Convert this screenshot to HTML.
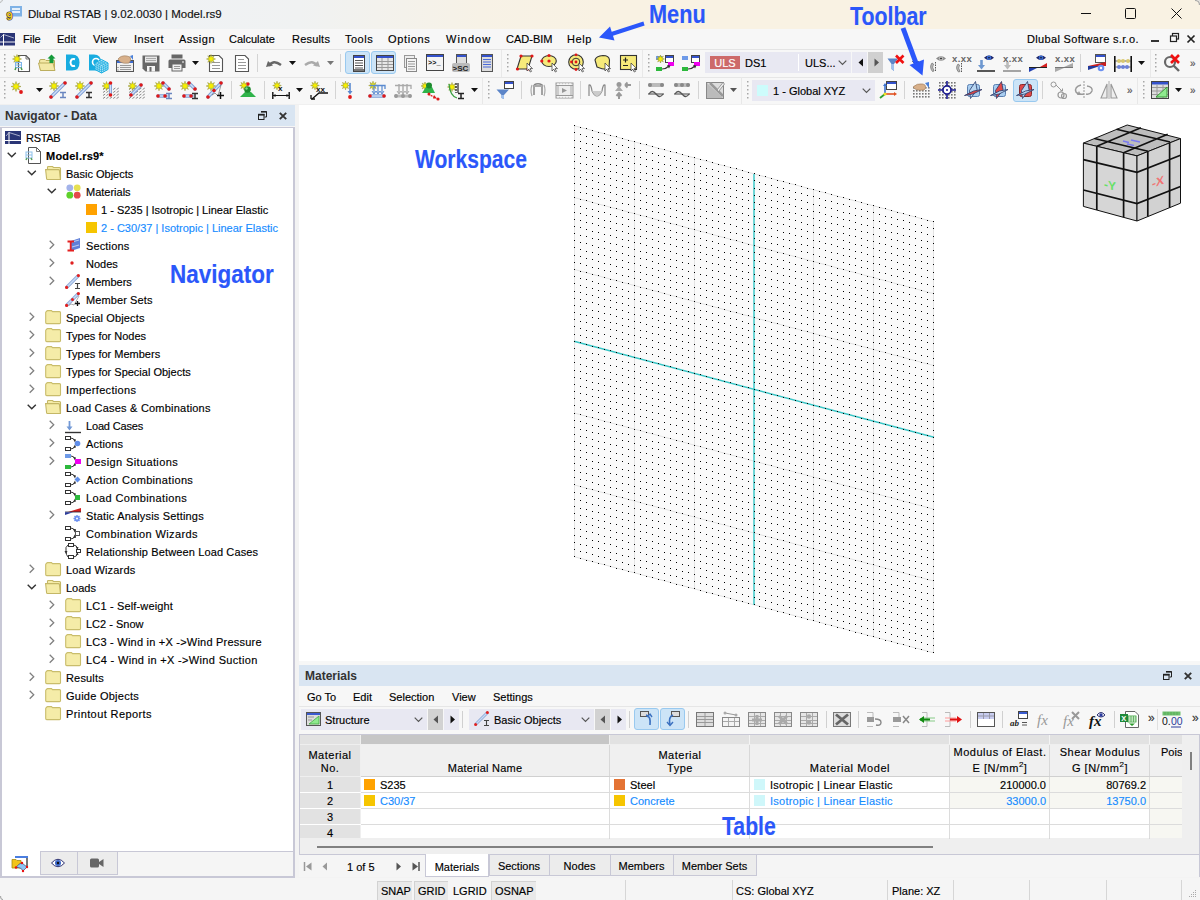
<!DOCTYPE html>
<html><head><meta charset="utf-8"><title>Dlubal RSTAB</title>
<style>
*{box-sizing:border-box}
html,body{margin:0;padding:0}
body{width:1200px;height:900px;position:relative;overflow:hidden;background:#f3f3f3;font-family:"Liberation Sans",sans-serif;font-size:11px;color:#000}
.a{position:absolute}
.t{position:absolute;white-space:pre;line-height:13px;font-size:11px;-webkit-text-stroke:0.15px currentColor}
svg{position:absolute;overflow:visible}
</style></head><body>

<!-- title bar -->
<div class="a" style="left:0;top:0;width:1200px;height:29px;background:linear-gradient(90deg,#eef2f7 0px,#f0f2f2 300px,#f7f2e6 480px,#f9f2e3 600px,#f9f2e3 1200px)"></div>
<svg style="left:6px;top:5px" width="18" height="17"><rect x="4" y="1" width="12" height="10.5" fill="#7fb2e6"/><rect x="6" y="3" width="8" height="2" fill="#e4effa"/><rect x="6" y="6" width="8" height="2" fill="#e4effa"/><text x="0.5" y="14.5" font-family="Liberation Sans" font-weight="bold" font-size="11" fill="#f2c81c" stroke="#3a3a4a" stroke-width="1.2" paint-order="stroke">9</text></svg>
<div class="t" style="left:28px;top:7px;font-size:11.5px;line-height:15px;color:#111">Dlubal RSTAB | 9.02.0030 | Model.rs9</div>
<svg style="left:1081px;top:13px" width="10" height="1"><rect x="0" y="0" width="10" height="1" fill="#111"/></svg>
<svg style="left:1125px;top:8px" width="11" height="11"><rect x="0.5" y="0.5" width="10" height="10" rx="1" fill="none" stroke="#111" stroke-width="1"/></svg>
<svg style="left:1171px;top:8px" width="11" height="11"><path d="M0.5 0.5 L10.5 10.5 M10.5 0.5 L0.5 10.5" stroke="#111" stroke-width="1"/></svg>
<!-- menu bar -->
<div class="a" style="left:0;top:29px;width:1200px;height:20px;background:#f7f7f7"></div>
<div class="a" style="left:0;top:49px;width:1200px;height:1px;background:#e4e4e4"></div>
<svg style="left:0;top:33px" width="15" height="13"><rect x="0" y="0" width="15" height="8.5" fill="#2a3576"/><rect x="0" y="9.5" width="15" height="3" fill="#2a3576"/><path d="M3.5 1 V13" stroke="#fff" stroke-width="1"/><path d="M0.5 4.5 L3.5 1.5 L14 5" stroke="#c8cce0" stroke-width="0.8" fill="none"/></svg>
<div class="t" style="left:23px;top:33px">File</div>
<div class="t" style="left:57px;top:33px">Edit</div>
<div class="t" style="left:93px;top:33px">View</div>
<div class="t" style="left:134px;top:33px;letter-spacing:0.4px">Insert</div>
<div class="t" style="left:179px;top:33px;letter-spacing:0.5px">Assign</div>
<div class="t" style="left:229px;top:33px">Calculate</div>
<div class="t" style="left:292px;top:33px;letter-spacing:0.2px">Results</div>
<div class="t" style="left:345px;top:33px;letter-spacing:0.5px">Tools</div>
<div class="t" style="left:388px;top:33px;letter-spacing:0.65px">Options</div>
<div class="t" style="left:446px;top:33px;letter-spacing:1px">Window</div>
<div class="t" style="left:506px;top:33px">CAD-BIM</div>
<div class="t" style="left:567px;top:33px;letter-spacing:0.6px">Help</div>
<div class="t" style="left:1027px;top:33px;letter-spacing:0.33px">Dlubal Software s.r.o.</div>
<svg style="left:1151px;top:40px" width="8" height="2"><rect x="0" y="0" width="8" height="2" fill="#333"/></svg>
<svg style="left:1170px;top:33px" width="9" height="9"><rect x="2.5" y="0.5" width="6" height="5.5" fill="none" stroke="#222" stroke-width="1.2"/><rect x="0.5" y="3" width="6" height="5.5" fill="#f7f7f7" stroke="#222" stroke-width="1.2"/></svg>
<svg style="left:1187px;top:35px" width="8" height="8"><path d="M0.5 0.5 L7.5 7.5 M7.5 0.5 L0.5 7.5" stroke="#222" stroke-width="1.7"/></svg>

<div class="a" style="left:0;top:50px;width:1200px;height:27px;background:#f7f7f7"></div>
<div class="a" style="left:0;top:77px;width:1200px;height:1px;background:#e6e6e6"></div>
<div class="a" style="left:0;top:78px;width:1200px;height:27px;background:#f7f7f7"></div>
<div class="a" style="left:0;top:104px;width:1200px;height:1px;background:#f0f0f0"></div>
<svg style="left:3px;top:53px" width="3" height="20"><g fill="#a8a8a8"><rect x="1" y="1" width="1.5" height="1.5"/><rect x="1" y="5" width="1.5" height="1.5"/><rect x="1" y="9" width="1.5" height="1.5"/><rect x="1" y="13" width="1.5" height="1.5"/><rect x="1" y="17" width="1.5" height="1.5"/></g></svg>
<svg style="left:12px;top:54px" width="19" height="19"><path d="M6.5 1.5 H14 L17.5 5 V17.5 H6.5 Z" fill="#fff" stroke="#555" stroke-width="1.1"/><path d="M14 1.5 V5 H17.5" fill="none" stroke="#555" stroke-width="0.8"/><path d="M5.00,0.50 L5.77,3.13 L8.18,1.82 L6.87,4.23 L9.50,5.00 L6.87,5.77 L8.18,8.18 L5.77,6.87 L5.00,9.50 L4.23,6.87 L1.82,8.18 L3.13,5.77 L0.50,5.00 L3.13,4.23 L1.82,1.82 L4.23,3.13Z" fill="#f6f000" stroke="#8a8a30" stroke-width="0.5"/><rect x="3.5" y="8.5" width="6" height="5" fill="none" stroke="#7db4ea" stroke-width="1"/><path d="M3.5 11 H9.5" stroke="#7db4ea"/><path d="M4 13.5 L3 16 M9 13.5 L10 16" stroke="#4a9a4a" stroke-width="1.5"/></svg>
<svg style="left:38px;top:54px" width="19" height="19"><path d="M1.5 7 Q1.5 5.5 3 5.5 H7 L8 6.5 H16.5 V16.5 H2.5 Z" fill="#f3e8a6" stroke="#bcae5e"/><path d="M0.5 9 H15 L17 16.5 H2.5 Z" fill="#f3e8a6" stroke="#bcae5e"/><path d="M13.5 0.5 L17.5 4.5 H15.5 V9 H11.5 V4.5 H9.5 Z" fill="#149a3a"/></svg>
<svg style="left:66px;top:54px" width="15" height="18"><path d="M0 0.5 H6 Q13.5 0.5 13.5 8.5 Q13.5 16.5 6 16.5 H0 Z" fill="#18ace0"/><path d="M9 5.2 Q5 4 4.5 8.5 Q5 13 9 11.8" fill="none" stroke="#fff" stroke-width="2"/></svg>
<svg style="left:89px;top:54px" width="20" height="20"><path d="M0 0.5 H5 Q12 0.5 12 8 L12 16.5 H0 Z" fill="#18ace0"/><circle cx="7" cy="8" r="3.5" fill="none" stroke="#fff" stroke-width="1.6"/><path d="M6 9 L12.5 5.5 L19 9 V15.5 L12.5 19 L6 15.5 Z" fill="#aee4f8" stroke="#18ace0" stroke-width="1"/><path d="M6 9 L12.5 12.5 L19 9 M12.5 12.5 V19 M8.2 10.2 V16.7 M10.3 11.3 V17.8 M14.7 11.3 V17.8 M16.8 10.2 V16.7 M6 11.2 L12.5 14.7 L19 11.2 M6 13.4 L12.5 16.9 L19 13.4 M8.2 7.8 L14.7 11.3 M10.3 6.7 L16.8 10.2 M14.7 6.7 L8.2 10.2 M16.8 7.8 L10.3 11.3" stroke="#18ace0" stroke-width="0.7" fill="none"/></svg>
<svg style="left:116px;top:54px" width="19" height="19"><rect x="0.5" y="6.5" width="17" height="11" fill="#f0f0f0" stroke="#555"/><rect x="1" y="7" width="16" height="2" fill="#3a6ad0"/><path d="M4 11.5 H15 M4 13.5 H15 M4 15.5 H15" stroke="#999"/><path d="M2 13 V14 M2 15.5 V16.5" stroke="#666"/><path d="M2 5 Q5 1 11 2 L14 3 Q16 6 13 9 Q8 10 4 8 Z" fill="#d8b08a" stroke="#9a7a5a" stroke-width="0.6"/><path d="M14 2 L17 1 V6" fill="#4a80d8"/></svg>
<svg style="left:142px;top:54px" width="19" height="19"><path d="M0.5 1.5 H17.5 V17.5 H3.5 L0.5 14.5 Z" fill="#676767"/><rect x="3" y="2.5" width="12" height="6" fill="#e8e8e8"/><path d="M4 4.5 H14 M4 6.5 H14" stroke="#aaa"/><rect x="5" y="12" width="8" height="5.5" fill="#f4f4f4"/><rect x="7.5" y="13" width="2" height="4.5" fill="#676767"/></svg>
<svg style="left:168px;top:54px" width="19" height="19"><rect x="3.5" y="0.5" width="11" height="4" fill="#676767"/><path d="M0.5 7 Q0.5 5.5 2 5.5 H16 Q17.5 5.5 17.5 7 V14 H14.5 V17.5 H3.5 V14 H0.5 Z" fill="#676767"/><rect x="4.5" y="10.5" width="9" height="6" fill="#f0f0f0"/><path d="M6 12.5 H12 M6 14.5 H12" stroke="#999"/><rect x="14" y="7.5" width="2" height="1" fill="#fff"/></svg>
<svg style="left:192px;top:61px" width="8" height="5"><path d="M0 0 H7 L3.5 4 Z" fill="#111"/></svg>
<svg style="left:206px;top:54px" width="19" height="19"><path d="M3.5 1.5 H13 L16.5 5 V17.5 H3.5 Z" fill="#fff" stroke="#555" stroke-width="1.1"/><path d="M6 8.5 H14 M6 11.5 H14 M6 14.5 H14" stroke="#999" stroke-width="1.2"/><path d="M5.00,0.50 L5.77,3.13 L8.18,1.82 L6.87,4.23 L9.50,5.00 L6.87,5.77 L8.18,8.18 L5.77,6.87 L5.00,9.50 L4.23,6.87 L1.82,8.18 L3.13,5.77 L0.50,5.00 L3.13,4.23 L1.82,1.82 L4.23,3.13Z" fill="#f6f000" stroke="#8a8a30" stroke-width="0.5"/></svg>
<svg style="left:234px;top:54px" width="16" height="19"><path d="M1.5 1.5 H11 L14.5 5 V17.5 H1.5 Z" fill="#fff" stroke="#555" stroke-width="1.1"/><path d="M4 5.5 H10 M4 8.5 H12 M4 11.5 H12 M4 14.5 H12" stroke="#999" stroke-width="1.2"/></svg>
<div class="a" style="left:257px;top:54px;width:1px;height:18px;background:#d4d4d4"></div>
<svg style="left:265px;top:54px" width="18" height="18"><path d="M4 12 Q8 5 16 11" fill="none" stroke="#676767" stroke-width="2.4"/><path d="M1 13 L3 7 L8 11.5 Z" fill="#676767"/></svg>
<svg style="left:289px;top:61px" width="8" height="5"><path d="M0 0 H7 L3.5 4 Z" fill="#111"/></svg>
<svg style="left:303px;top:54px" width="18" height="18"><path d="M14 12 Q10 5 2 11" fill="none" stroke="#aaa" stroke-width="2.4"/><path d="M17 13 L15 7 L10 11.5 Z" fill="#aaa"/></svg>
<svg style="left:327px;top:61px" width="8" height="5"><path d="M0 0 H7 L3.5 4 Z" fill="#777"/></svg>
<div class="a" style="left:340px;top:54px;width:1px;height:18px;background:#d4d4d4"></div>
<div class="a" style="left:345px;top:51px;width:25px;height:23px;background:#cce4f7;border:1px solid #99c9ef;border-radius:3px"></div>
<div class="a" style="left:371px;top:51px;width:25px;height:23px;background:#cce4f7;border:1px solid #99c9ef;border-radius:3px"></div>
<svg style="left:350px;top:54px" width="19" height="19"><rect x="3.5" y="1.5" width="11" height="16" fill="#fff" stroke="#444"/><rect x="4" y="2" width="10" height="2" fill="#3452cc"/><path d="M5 6.5 H13 M5 9 H13 M5 11.5 H13 M5 14 H13" stroke="#555" stroke-width="1.2"/><rect x="4" y="15" width="10" height="2" fill="#777"/></svg>
<svg style="left:376px;top:54px" width="19" height="19"><rect x="0.5" y="1.5" width="17" height="15" fill="#e6e6e6" stroke="#444"/><rect x="1" y="2" width="16" height="2" fill="#3452cc"/><path d="M1 7.5 H17 M1 10.5 H17 M1 13.5 H17 M6 4 V16 M12 4 V16" stroke="#999"/></svg>
<svg style="left:403px;top:54px" width="15" height="19"><rect x="1.5" y="1.5" width="10" height="12" fill="#eee" stroke="#999"/><rect x="3.5" y="4.5" width="10" height="13" fill="#f4f4f4" stroke="#888"/><path d="M5 7.5 H12 M5 10 H12 M5 12.5 H12 M5 15 H12" stroke="#999" stroke-width="1.1"/></svg>
<svg style="left:426px;top:54px" width="19" height="19"><rect x="0.5" y="0.5" width="17" height="16" fill="#f4f4f4" stroke="#444"/><rect x="1" y="1" width="16" height="2" fill="#3452cc"/><text x="2" y="11" font-family="Liberation Mono" font-weight="bold" font-size="7" fill="#111">&gt;&gt;_</text></svg>
<svg style="left:452px;top:54px" width="19" height="19"><rect x="4.5" y="0.5" width="10" height="9" fill="#ddd" stroke="#555"/><rect x="5" y="1" width="9" height="2" fill="#3452cc"/><rect x="0" y="9" width="18" height="9" rx="2" fill="#bbb"/><text x="0.5" y="16.5" font-family="Liberation Sans" font-weight="bold" font-size="8" fill="#222">&gt;SC</text></svg>
<svg style="left:481px;top:54px" width="13" height="19"><rect x="0.5" y="0.5" width="11" height="17" fill="#ddd" stroke="#555"/><rect x="1" y="1" width="10" height="2" fill="#3452cc"/><path d="M2 5.5 H10 M2 8 H10 M2 10.5 H10 M2 13 H10" stroke="#4a6ad8" stroke-width="1.2"/></svg>
<div class="a" style="left:501px;top:50px;width:1px;height:27px;background:#e8e8e8"></div>
<svg style="left:506px;top:53px" width="3" height="20"><g fill="#a8a8a8"><rect x="1" y="1" width="1.5" height="1.5"/><rect x="1" y="5" width="1.5" height="1.5"/><rect x="1" y="9" width="1.5" height="1.5"/><rect x="1" y="13" width="1.5" height="1.5"/><rect x="1" y="17" width="1.5" height="1.5"/></g></svg>
<svg style="left:516px;top:54px" width="19" height="19"><path d="M5 2 H16 L12 15 H1 Z" fill="#f6ea7a" stroke="#333" stroke-width="1.1"/><circle cx="5" cy="2" r="1.6" fill="#e01818"/><circle cx="16" cy="2" r="1.6" fill="#e01818"/><circle cx="12" cy="15" r="1.6" fill="#e01818"/><circle cx="1.5" cy="15" r="1.6" fill="#e01818"/><path d="M11 9 V17 L12.8 15.2 L14.3 18 L15.5 17.4 L14 14.6 H16.5 Z" fill="#fff" stroke="#333" stroke-width="0.7"/></svg>
<svg style="left:541px;top:54px" width="19" height="19"><ellipse cx="8" cy="7" rx="7.3" ry="5.5" fill="#f6ea7a" stroke="#333" stroke-width="1.1"/><circle cx="8" cy="1.5" r="1.6" fill="#e01818"/><circle cx="0.8" cy="7" r="1.6" fill="#e01818"/><circle cx="8" cy="7" r="1.6" fill="#e01818"/><path d="M11 9 V17 L12.8 15.2 L14.3 18 L15.5 17.4 L14 14.6 H16.5 Z" fill="#fff" stroke="#333" stroke-width="0.7"/></svg>
<svg style="left:568px;top:54px" width="19" height="19"><circle cx="8" cy="8" r="7.3" fill="#f6ea7a" stroke="#333" stroke-width="1.1"/><circle cx="8" cy="8" r="3.8" fill="#f6ea7a" stroke="#333" stroke-width="1"/><circle cx="8" cy="8" r="1.4" fill="#e01818"/><circle cx="3.5" cy="8" r="1.4" fill="#e01818"/><circle cx="8" cy="15.5" r="1.4" fill="#e01818"/><circle cx="8" cy="0.8" r="1.4" fill="#e01818"/><path d="M11 9 V17 L12.8 15.2 L14.3 18 L15.5 17.4 L14 14.6 H16.5 Z" fill="#fff" stroke="#333" stroke-width="0.7"/></svg>
<svg style="left:594px;top:54px" width="19" height="19"><path d="M1 6 Q2 2 9 1.5 Q15 1.5 15.5 6 L15 15 Q10 16 3 13 Z" fill="#f6ea7a" stroke="#333" stroke-width="1.1"/><path d="M11 9 V17 L12.8 15.2 L14.3 18 L15.5 17.4 L14 14.6 H16.5 Z" fill="#fff" stroke="#333" stroke-width="0.7"/></svg>
<svg style="left:620px;top:54px" width="19" height="19"><rect x="0.5" y="1.5" width="16" height="14" fill="#f6ea7a" stroke="#333" stroke-width="1.1"/><path d="M3 6 H8 M5.5 3.5 V8.5 M3 11.5 H8" stroke="#222" stroke-width="1.2"/><path d="M11 9 V17 L12.8 15.2 L14.3 18 L15.5 17.4 L14 14.6 H16.5 Z" fill="#fff" stroke="#333" stroke-width="0.7"/></svg>
<div class="a" style="left:642px;top:50px;width:1px;height:27px;background:#e8e8e8"></div>
<svg style="left:647px;top:53px" width="3" height="20"><g fill="#a8a8a8"><rect x="1" y="1" width="1.5" height="1.5"/><rect x="1" y="5" width="1.5" height="1.5"/><rect x="1" y="9" width="1.5" height="1.5"/><rect x="1" y="13" width="1.5" height="1.5"/><rect x="1" y="17" width="1.5" height="1.5"/></g></svg>
<svg style="left:656px;top:54px" width="19" height="19"><rect x="0" y="2" width="6" height="4" fill="#6e9ae8"/><rect x="0" y="13" width="6" height="4" fill="#2cb83c"/><rect x="9.5" y="1.5" width="8" height="7" fill="#fff" stroke="#444"/><rect x="10" y="2" width="7" height="2" fill="#3452cc"/><rect x="12" y="8" width="6" height="4" fill="#f000f0"/><path d="M6 15 Q10 15 13 12" stroke="#333" stroke-width="1.2" fill="none"/><path d="M11 11 L14.5 11.5 L13 14.5 Z" fill="#333"/><path d="M4.50,1.00 L5.19,3.34 L7.33,2.17 L6.16,4.31 L8.50,5.00 L6.16,5.69 L7.33,7.83 L5.19,6.66 L4.50,9.00 L3.81,6.66 L1.67,7.83 L2.84,5.69 L0.50,5.00 L2.84,4.31 L1.67,2.17 L3.81,3.34Z" fill="#f6f000" stroke="#8a8a30" stroke-width="0.5"/></svg>
<svg style="left:682px;top:54px" width="19" height="19"><rect x="0" y="2" width="6" height="4" fill="#6e9ae8"/><rect x="0" y="13" width="6" height="4" fill="#2cb83c"/><rect x="9.5" y="1.5" width="8" height="7" fill="#fff" stroke="#444"/><rect x="10" y="2" width="7" height="2" fill="#3452cc"/><rect x="12" y="8" width="6" height="4" fill="#f000f0"/><path d="M6 15 Q10 15 13 12" stroke="#333" stroke-width="1.2" fill="none"/><path d="M11 11 L14.5 11.5 L13 14.5 Z" fill="#333"/></svg>
<div class="a" style="left:705px;top:52px;width:146px;height:21px;background:#e8e8f2"></div>
<div class="a" style="left:710px;top:56px;width:30px;height:13px;background:#cd6a6a"></div>
<div class="t" style="left:710px;top:57px;width:30px;text-align:center;color:#fff">ULS</div>
<div class="t" style="left:745px;top:57px">DS1</div>
<div class="a" style="left:798px;top:54px;width:1px;height:17px;background:#fff"></div>
<div class="t" style="left:805px;top:57px">ULS...</div>
<svg style="left:838px;top:60px" width="10" height="6"><path d="M0.7 0.7 L4.5 4.5 L8.3 0.7" fill="none" stroke="#555" stroke-width="1.2"/></svg>
<div class="a" style="left:852px;top:52px;width:15px;height:21px;background:#e8e8f2"></div>
<svg style="left:858px;top:58px" width="6" height="9"><path d="M5 0.5 V8.5 L0.5 4.5 Z" fill="#111"/></svg>
<div class="a" style="left:868px;top:52px;width:15px;height:21px;background:#d0d0d0"></div>
<svg style="left:874px;top:58px" width="6" height="9"><path d="M0.5 0.5 V8.5 L5 4.5 Z" fill="#555"/></svg>
<svg style="left:887px;top:54px" width="19" height="19"><path d="M0.5 4.5 H11 L7 10 V17 L4.5 15 V10 Z" fill="#5c85c8"/><path d="M4.5 10 H7 V17 L4.5 15 Z" fill="#9ec0ee"/><path d="M9 1.5 L16.5 9 M16.5 1.5 L9 9" stroke="#f01010" stroke-width="2.6"/></svg>
<svg style="left:912px;top:61px" width="8" height="5"><path d="M0 0 H7 L3.5 4 Z" fill="#111"/></svg>
<svg style="left:929px;top:54px" width="19" height="19"><path d="M7 4.5 Q12 0.0 17 4.5 Q12 9.0 7 4.5 Z" fill="#8a8a8a"/><ellipse cx="12" cy="4.5" rx="2.3" ry="2.3" fill="#b5b5b5"/><circle cx="12" cy="4.5" r="0.8" fill="#111"/><path d="M3 9 Q0 13 3.5 17.5 L5 17 Q2.5 13 4.5 10 Z" fill="#bbb" stroke="#777" stroke-width="0.8"/><path d="M6.5 8 V18" stroke="#555" stroke-width="1" stroke-dasharray="1.5 1"/></svg>
<svg style="left:952px;top:54px" width="19" height="19"><text x="0" y="8" font-family="Liberation Sans" font-weight="bold" font-size="9.5" letter-spacing="0.4" fill="#666">x.xx</text><path d="M6 10 Q3 14 6.5 18 L8 17.5 Q5.5 14 7.5 11 Z" fill="#bbb" stroke="#777" stroke-width="0.8"/><path d="M9.5 9 V18" stroke="#555" stroke-width="1" stroke-dasharray="1.5 1"/></svg>
<svg style="left:977px;top:54px" width="19" height="19"><path d="M7 3.8 Q12 -0.7000000000000002 17 3.8 Q12 8.3 7 3.8 Z" fill="#1c2468"/><ellipse cx="12" cy="3.8" rx="2.3" ry="2.3" fill="#3a6ad0"/><circle cx="12" cy="3.8" r="0.8" fill="#111"/><path d="M4.5 6 V13" stroke="#6e98d0" stroke-width="2.6"/><path d="M1 11 L4.5 15.5 L8 11 Z" fill="#6e98d0"/><path d="M0 17 H18" stroke="#222" stroke-width="1.5"/></svg>
<svg style="left:1003px;top:54px" width="19" height="19"><text x="0" y="8" font-family="Liberation Sans" font-weight="bold" font-size="9.5" letter-spacing="0.4" fill="#666">x.xx</text><path d="M4.5 8 V13" stroke="#bbb" stroke-width="2.6"/><path d="M1 11 L4.5 15.5 L8 11 Z" fill="#bbb"/><path d="M0 17 H18" stroke="#888" stroke-width="1.5"/></svg>
<svg style="left:1029px;top:54px" width="19" height="19"><path d="M7 3.8 Q12 -0.7000000000000002 17 3.8 Q12 8.3 7 3.8 Z" fill="#1c2468"/><ellipse cx="12" cy="3.8" rx="2.3" ry="2.3" fill="#3a6ad0"/><circle cx="12" cy="3.8" r="0.8" fill="#111"/><path d="M0 13.5 H18" stroke="#222" stroke-width="1"/><path d="M11 13 L18 9 V13 Z" fill="#d42020"/><path d="M0 14 H8 L0 18 Z" fill="#2240b0"/></svg>
<svg style="left:1055px;top:54px" width="19" height="19"><text x="0" y="8" font-family="Liberation Sans" font-weight="bold" font-size="9.5" letter-spacing="0.4" fill="#666">x.xx</text><path d="M0 13.5 H18" stroke="#777" stroke-width="1"/><path d="M9 13 L18 9 V13 Z" fill="#aaa"/><path d="M0 14 H9 L0 18 Z" fill="#aaa"/></svg>
<div class="a" style="left:1080px;top:54px;width:1px;height:18px;background:#d4d4d4"></div>
<svg style="left:1088px;top:54px" width="19" height="19"><rect x="7.5" y="0.5" width="10" height="8" fill="#fff" stroke="#555"/><rect x="8" y="1" width="9" height="2" fill="#3452cc"/><path d="M0 12 H18 V8 Z" fill="#c82020"/><path d="M0 12 H12 L0 16 Z" fill="#223a9a"/><circle cx="13" cy="14" r="3.3" fill="#6b90f0"/><circle cx="13" cy="14" r="1.2" fill="#fff"/></svg>
<svg style="left:1114px;top:54px" width="19" height="19"><path d="M0.8 2 V18 M17.2 2 V18" stroke="#111" stroke-width="1.6"/><path d="M1 7 H17 M1 13 H17" stroke="#444" stroke-width="0.8"/><circle cx="5" cy="7" r="2" fill="#d8c870"/><circle cx="9" cy="7" r="2" fill="#d8c870"/><circle cx="14" cy="7" r="2" fill="#d8c870"/><circle cx="5" cy="13" r="2" fill="#6a80d8"/><circle cx="9" cy="13" r="2" fill="#6a80d8"/><circle cx="13" cy="13" r="2" fill="#6a80d8"/></svg>
<svg style="left:1138px;top:61px" width="8" height="5"><path d="M0 0 H7 L3.5 4 Z" fill="#111"/></svg>
<div class="a" style="left:1150px;top:50px;width:1px;height:27px;background:#e8e8e8"></div>
<svg style="left:1154px;top:53px" width="3" height="20"><g fill="#a8a8a8"><rect x="1" y="1" width="1.5" height="1.5"/><rect x="1" y="5" width="1.5" height="1.5"/><rect x="1" y="9" width="1.5" height="1.5"/><rect x="1" y="13" width="1.5" height="1.5"/><rect x="1" y="17" width="1.5" height="1.5"/></g></svg>
<svg style="left:1163px;top:54px" width="19" height="19"><circle cx="7" cy="8" r="5" fill="none" stroke="#676767" stroke-width="2.2"/><path d="M10.5 11.5 L16 17" stroke="#676767" stroke-width="2.4"/><path d="M8 1 L16 9 M16 1 L8 9" stroke="#f01010" stroke-width="2.6"/></svg>
<div class="t" style="left:1190px;top:57px;font-size:10px;color:#555">&#187;</div>
<svg style="left:3px;top:80px" width="3" height="20"><g fill="#a8a8a8"><rect x="1" y="1" width="1.5" height="1.5"/><rect x="1" y="5" width="1.5" height="1.5"/><rect x="1" y="9" width="1.5" height="1.5"/><rect x="1" y="13" width="1.5" height="1.5"/><rect x="1" y="17" width="1.5" height="1.5"/></g></svg>
<svg style="left:10px;top:81px" width="15" height="15"><path d="M6.00,0.50 L6.86,3.42 L9.54,1.96 L8.08,4.64 L11.00,5.50 L8.08,6.36 L9.54,9.04 L6.86,7.58 L6.00,10.50 L5.14,7.58 L2.46,9.04 L3.92,6.36 L1.00,5.50 L3.92,4.64 L2.46,1.96 L5.14,3.42Z" fill="#f6f000" stroke="#8a8a30" stroke-width="0.5"/><circle cx="11" cy="11" r="1.9" fill="#e01818"/></svg>
<svg style="left:36px;top:88px" width="8" height="5"><path d="M0 0 H7 L3.5 4 Z" fill="#111"/></svg>
<svg style="left:49px;top:81px" width="19" height="19"><path d="M5.00,0.20 L5.83,3.00 L8.39,1.61 L7.00,4.17 L9.80,5.00 L7.00,5.83 L8.39,8.39 L5.83,7.00 L5.00,9.80 L4.17,7.00 L1.61,8.39 L3.00,5.83 L0.20,5.00 L3.00,4.17 L1.61,1.61 L4.17,3.00Z" fill="#f6f000" stroke="#8a8a30" stroke-width="0.5"/><path d="M2 16 L16 2" stroke="#7f9fd6" stroke-width="3.4" stroke-linecap="round"/><path d="M2 16 L16 2" stroke="#cfe0f7" stroke-width="1.4"/><circle cx="2" cy="16" r="1.8" fill="#e01818"/><circle cx="16" cy="2" r="1.8" fill="#e01818"/><path d="M11 11.5 H17 M14 11 V17 M11 16.5 H17" stroke="#6a86c0" stroke-width="1.5"/></svg>
<svg style="left:75px;top:81px" width="19" height="19"><path d="M5.00,0.20 L5.83,3.00 L8.39,1.61 L7.00,4.17 L9.80,5.00 L7.00,5.83 L8.39,8.39 L5.83,7.00 L5.00,9.80 L4.17,7.00 L1.61,8.39 L3.00,5.83 L0.20,5.00 L3.00,4.17 L1.61,1.61 L4.17,3.00Z" fill="#f6f000" stroke="#8a8a30" stroke-width="0.5"/><path d="M2 16 L16 2" stroke="#7f9fd6" stroke-width="3.4" stroke-linecap="round"/><path d="M2 16 L16 2" stroke="#cfe0f7" stroke-width="1.4"/><circle cx="2" cy="16" r="1.8" fill="#e01818"/><circle cx="16" cy="2" r="1.8" fill="#e01818"/><path d="M11 11.5 H17 M14 11 V17 M11 16.5 H17" stroke="#333" stroke-width="1.5"/></svg>
<svg style="left:102px;top:81px" width="19" height="19"><g stroke="#888" stroke-width="1"><path d="M1.0 8.5 L3.2 7"/><path d="M4.4 8.5 L6.6 7"/><path d="M7.8 8.5 L10.0 7"/><path d="M11.2 8.5 L13.4 7"/><path d="M14.6 8.5 L16.8 7"/><path d="M1.0 11.5 L3.2 10"/><path d="M4.4 11.5 L6.6 10"/><path d="M7.8 11.5 L10.0 10"/><path d="M11.2 11.5 L13.4 10"/><path d="M14.6 11.5 L16.8 10"/><path d="M1.0 14.5 L3.2 13"/><path d="M4.4 14.5 L6.6 13"/><path d="M7.8 14.5 L10.0 13"/><path d="M11.2 14.5 L13.4 13"/><path d="M14.6 14.5 L16.8 13"/><path d="M1.0 17.5 L3.2 16"/><path d="M4.4 17.5 L6.6 16"/><path d="M7.8 17.5 L10.0 16"/><path d="M11.2 17.5 L13.4 16"/><path d="M14.6 17.5 L16.8 16"/></g><path d="M4.50,0.50 L5.27,3.13 L7.68,1.82 L6.37,4.23 L9.00,5.00 L6.37,5.77 L7.68,8.18 L5.27,6.87 L4.50,9.50 L3.73,6.87 L1.32,8.18 L2.63,5.77 L0.00,5.00 L2.63,4.23 L1.32,1.82 L3.73,3.13Z" fill="#f6f000" stroke="#8a8a30" stroke-width="0.5"/><path d="M8.5 2 V14" stroke="#7f9fd6" stroke-width="3"/><path d="M8.5 2 V14" stroke="#cfe0f7" stroke-width="1.2"/><circle cx="8.5" cy="2" r="1.8" fill="#e01818"/><circle cx="8.5" cy="14" r="1.8" fill="#e01818"/></svg>
<svg style="left:128px;top:81px" width="19" height="19"><g stroke="#888" stroke-width="1"><path d="M1.0 8.5 L3.2 7"/><path d="M4.4 8.5 L6.6 7"/><path d="M7.8 8.5 L10.0 7"/><path d="M11.2 8.5 L13.4 7"/><path d="M14.6 8.5 L16.8 7"/><path d="M1.0 11.5 L3.2 10"/><path d="M4.4 11.5 L6.6 10"/><path d="M7.8 11.5 L10.0 10"/><path d="M11.2 11.5 L13.4 10"/><path d="M14.6 11.5 L16.8 10"/><path d="M1.0 14.5 L3.2 13"/><path d="M4.4 14.5 L6.6 13"/><path d="M7.8 14.5 L10.0 13"/><path d="M11.2 14.5 L13.4 13"/><path d="M14.6 14.5 L16.8 13"/><path d="M1.0 17.5 L3.2 16"/><path d="M4.4 17.5 L6.6 16"/><path d="M7.8 17.5 L10.0 16"/><path d="M11.2 17.5 L13.4 16"/><path d="M14.6 17.5 L16.8 16"/></g><path d="M4.50,0.50 L5.27,3.13 L7.68,1.82 L6.37,4.23 L9.00,5.00 L6.37,5.77 L7.68,8.18 L5.27,6.87 L4.50,9.50 L3.73,6.87 L1.32,8.18 L2.63,5.77 L0.00,5.00 L2.63,4.23 L1.32,1.82 L3.73,3.13Z" fill="#f6f000" stroke="#8a8a30" stroke-width="0.5"/><path d="M3 14 L13 4" stroke="#7f9fd6" stroke-width="3.4" stroke-linecap="round"/><path d="M3 14 L13 4" stroke="#cfe0f7" stroke-width="1.4"/><circle cx="3" cy="14" r="1.8" fill="#e01818"/><circle cx="13" cy="4" r="1.8" fill="#e01818"/></svg>
<svg style="left:154px;top:81px" width="19" height="19"><path d="M5.00,0.20 L5.83,3.00 L8.39,1.61 L7.00,4.17 L9.80,5.00 L7.00,5.83 L8.39,8.39 L5.83,7.00 L5.00,9.80 L4.17,7.00 L1.61,8.39 L3.00,5.83 L0.20,5.00 L3.00,4.17 L1.61,1.61 L4.17,3.00Z" fill="#f6f000" stroke="#8a8a30" stroke-width="0.5"/><path d="M9 2 L15 8" stroke="#7f9fd6" stroke-width="3.4" stroke-linecap="round"/><path d="M9 2 L15 8" stroke="#cfe0f7" stroke-width="1.4"/><path d="M4 15 L12 15" stroke="#7f9fd6" stroke-width="3.4" stroke-linecap="round"/><path d="M4 15 L12 15" stroke="#cfe0f7" stroke-width="1.4"/><circle cx="9" cy="2" r="1.8" fill="#e01818"/><circle cx="15" cy="8" r="1.8" fill="#e01818"/><circle cx="4" cy="15" r="1.8" fill="#e01818"/><circle cx="11" cy="15" r="1.8" fill="#e01818"/><path d="M12 12.5 H18 M15 12 V18 M12 17.5 H18" stroke="#6a86c0" stroke-width="1.5"/></svg>
<svg style="left:180px;top:81px" width="19" height="19"><path d="M5.00,0.20 L5.83,3.00 L8.39,1.61 L7.00,4.17 L9.80,5.00 L7.00,5.83 L8.39,8.39 L5.83,7.00 L5.00,9.80 L4.17,7.00 L1.61,8.39 L3.00,5.83 L0.20,5.00 L3.00,4.17 L1.61,1.61 L4.17,3.00Z" fill="#f6f000" stroke="#8a8a30" stroke-width="0.5"/><path d="M9 2 L15 8" stroke="#7f9fd6" stroke-width="3.4" stroke-linecap="round"/><path d="M9 2 L15 8" stroke="#cfe0f7" stroke-width="1.4"/><path d="M4 15 L12 15" stroke="#7f9fd6" stroke-width="3.4" stroke-linecap="round"/><path d="M4 15 L12 15" stroke="#cfe0f7" stroke-width="1.4"/><circle cx="9" cy="2" r="1.8" fill="#e01818"/><circle cx="15" cy="8" r="1.8" fill="#e01818"/><circle cx="4" cy="15" r="1.8" fill="#e01818"/><circle cx="11" cy="15" r="1.8" fill="#e01818"/><path d="M12 12.5 H18 M15 12 V18 M12 17.5 H18" stroke="#333" stroke-width="1.5"/></svg>
<svg style="left:206px;top:81px" width="19" height="19"><path d="M5.00,0.20 L5.83,3.00 L8.39,1.61 L7.00,4.17 L9.80,5.00 L7.00,5.83 L8.39,8.39 L5.83,7.00 L5.00,9.80 L4.17,7.00 L1.61,8.39 L3.00,5.83 L0.20,5.00 L3.00,4.17 L1.61,1.61 L4.17,3.00Z" fill="#f6f000" stroke="#8a8a30" stroke-width="0.5"/><path d="M2 16 L15 2" stroke="#7f9fd6" stroke-width="3.4" stroke-linecap="round"/><path d="M2 16 L15 2" stroke="#cfe0f7" stroke-width="1.4"/><path d="M6 14 L9 12 L12 15 L15 4" stroke="#555" stroke-width="0.6" fill="none"/><circle cx="2" cy="16" r="1.8" fill="#e01818"/><circle cx="8" cy="9.5" r="1.8" fill="#e01818"/><circle cx="15" cy="2" r="1.8" fill="#e01818"/><path d="M11 14.5 H18 M14.5 11 V18" stroke="#111" stroke-width="1.5"/></svg>
<div class="a" style="left:231px;top:81px;width:1px;height:18px;background:#d4d4d4"></div>
<svg style="left:239px;top:81px" width="19" height="19"><path d="M5.00,0.20 L5.74,2.71 L8.04,1.46 L6.79,3.76 L9.30,4.50 L6.79,5.24 L8.04,7.54 L5.74,6.29 L5.00,8.80 L4.26,6.29 L1.96,7.54 L3.21,5.24 L0.70,4.50 L3.21,3.76 L1.96,1.46 L4.26,2.71Z" fill="#f6f000" stroke="#8a8a30" stroke-width="0.5"/><circle cx="9" cy="3" r="1.7" fill="#e01818"/><path d="M1 16 L6 11 H12 L17 16 Z" fill="#2fb34a"/><circle cx="8.5" cy="8.5" r="3.3" fill="#1d8a2e"/><circle cx="7.5" cy="7.5" r="1.2" fill="#7ad88a"/></svg>
<div class="a" style="left:264px;top:81px;width:1px;height:18px;background:#d4d4d4"></div>
<svg style="left:272px;top:81px" width="19" height="19"><path d="M5.00,0.20 L5.74,2.71 L8.04,1.46 L6.79,3.76 L9.30,4.50 L6.79,5.24 L8.04,7.54 L5.74,6.29 L5.00,8.80 L4.26,6.29 L1.96,7.54 L3.21,5.24 L0.70,4.50 L3.21,3.76 L1.96,1.46 L4.26,2.71Z" fill="#f6f000" stroke="#8a8a30" stroke-width="0.5"/><text x="6" y="10" font-family="Liberation Sans" font-weight="bold" font-size="8" fill="#111">x</text><path d="M0.8 11 V18 M17.2 11 V18" stroke="#111" stroke-width="1.4"/><path d="M1 14.5 H17" stroke="#111" stroke-width="1"/><path d="M1 14.5 L3.5 13 V16 Z M17 14.5 L14.5 13 V16 Z" fill="#111"/></svg>
<svg style="left:296px;top:88px" width="8" height="5"><path d="M0 0 H7 L3.5 4 Z" fill="#111"/></svg>
<svg style="left:310px;top:81px" width="19" height="19"><path d="M5.00,0.20 L5.74,2.71 L8.04,1.46 L6.79,3.76 L9.30,4.50 L6.79,5.24 L8.04,7.54 L5.74,6.29 L5.00,8.80 L4.26,6.29 L1.96,7.54 L3.21,5.24 L0.70,4.50 L3.21,3.76 L1.96,1.46 L4.26,2.71Z" fill="#f6f000" stroke="#8a8a30" stroke-width="0.5"/><text x="6" y="11" font-family="Liberation Sans" font-weight="bold" font-size="8" fill="#111">xx</text><path d="M2 18 L9 12 H18" stroke="#111" stroke-width="1.3" fill="none"/><path d="M1 18 H5 M1 18 V14" stroke="#111" stroke-width="1.3"/></svg>
<div class="a" style="left:335px;top:81px;width:1px;height:18px;background:#d4d4d4"></div>
<svg style="left:341px;top:81px" width="15" height="19"><path d="M4.50,0.20 L5.24,2.71 L7.54,1.46 L6.29,3.76 L8.80,4.50 L6.29,5.24 L7.54,7.54 L5.24,6.29 L4.50,8.80 L3.76,6.29 L1.46,7.54 L2.71,5.24 L0.20,4.50 L2.71,3.76 L1.46,1.46 L3.76,2.71Z" fill="#f6f000" stroke="#8a8a30" stroke-width="0.5"/><path d="M9 2 V12" stroke="#5a8ad0" stroke-width="1.6"/><path d="M6.5 10 L9 13.5 L11.5 10 Z" fill="#5a8ad0"/><circle cx="9" cy="16" r="1.9" fill="#e01818"/></svg>
<svg style="left:368px;top:81px" width="19" height="19"><path d="M5.00,0.20 L5.74,2.71 L8.04,1.46 L6.79,3.76 L9.30,4.50 L6.79,5.24 L8.04,7.54 L5.74,6.29 L5.00,8.80 L4.26,6.29 L1.96,7.54 L3.21,5.24 L0.70,4.50 L3.21,3.76 L1.96,1.46 L4.26,2.71Z" fill="#f6f000" stroke="#8a8a30" stroke-width="0.5"/><path d="M2 4.5 H17 V8" stroke="#5a8ad0" stroke-width="1.3" fill="none"/><path d="M6 5 V12 M10 5 V12 M14 5 V12" stroke="#5a8ad0" stroke-width="1.2"/><path d="M4 10 L6 13 L8 10 M8 10 L10 13 L12 10 M12 10 L14 13 L16 10" stroke="#5a8ad0" fill="none"/><path d="M2 15 L16 15" stroke="#7f9fd6" stroke-width="3.4" stroke-linecap="round"/><path d="M2 15 L16 15" stroke="#cfe0f7" stroke-width="1.4"/><circle cx="2" cy="15" r="1.8" fill="#e01818"/><circle cx="16" cy="15" r="1.8" fill="#e01818"/></svg>
<svg style="left:394px;top:81px" width="19" height="19"><path d="M1 4.5 H17 V8" stroke="#aaa" stroke-width="1.3" fill="none"/><path d="M5 3 V12 M9 3 V12 M13 3 V12" stroke="#aaa" stroke-width="1.4"/><path d="M3 10 L5 13 L7 10 M7 10 L9 13 L11 10 M11 10 L13 13 L15 10" stroke="#aaa" fill="none"/><path d="M1 15 H17" stroke="#bbb" stroke-width="3"/><circle cx="2" cy="15" r="2" fill="#999"/><circle cx="9" cy="15" r="2" fill="#999"/><circle cx="16" cy="15" r="2" fill="#999"/></svg>
<svg style="left:421px;top:81px" width="19" height="19"><path d="M4.00,1.00 L4.69,3.34 L6.83,2.17 L5.66,4.31 L8.00,5.00 L5.66,5.69 L6.83,7.83 L4.69,6.66 L4.00,9.00 L3.31,6.66 L1.17,7.83 L2.34,5.69 L0.00,5.00 L2.34,4.31 L1.17,2.17 L3.31,3.34Z" fill="#f6f000" stroke="#8a8a30" stroke-width="0.5"/><path d="M1 12 L5 6 H11 L14 12 Z" fill="#2fb34a"/><circle cx="8" cy="4.5" r="3" fill="#1d8a2e"/><path d="M7 13 L15 17" stroke="#e01818" stroke-width="1.2" stroke-dasharray="2 1"/><path d="M13 14 L16 17.5 L12 17.5 Z" fill="#e01818"/><circle cx="8" cy="13" r="1.5" fill="#e01818"/><circle cx="17" cy="18" r="1.6" fill="#e01818"/></svg>
<svg style="left:447px;top:81px" width="19" height="19"><path d="M5.00,1.50 L5.77,4.13 L8.18,2.82 L6.87,5.23 L9.50,6.00 L6.87,6.77 L8.18,9.18 L5.77,7.87 L5.00,10.50 L4.23,7.87 L1.82,9.18 L3.13,6.77 L0.50,6.00 L3.13,5.23 L1.82,2.82 L4.23,4.13Z" fill="#f6f000" stroke="#8a8a30" stroke-width="0.5"/><path d="M2 3 Q3 15 10 17" stroke="#3aa040" stroke-width="1.3" fill="none"/><path d="M9 2 V12" stroke="#111" stroke-width="1.2" stroke-dasharray="2 1"/><path d="M11 2 V12" stroke="#111" stroke-width="1.1"/><path d="M11 12.5 H17 M14 12 V18 M11 17.5 H17" stroke="#222" stroke-width="1.5"/></svg>
<svg style="left:471px;top:88px" width="8" height="5"><path d="M0 0 H7 L3.5 4 Z" fill="#111"/></svg>
<div class="a" style="left:482px;top:77px;width:1px;height:27px;background:#e8e8e8"></div>
<svg style="left:487px;top:80px" width="3" height="20"><g fill="#a8a8a8"><rect x="1" y="1" width="1.5" height="1.5"/><rect x="1" y="5" width="1.5" height="1.5"/><rect x="1" y="9" width="1.5" height="1.5"/><rect x="1" y="13" width="1.5" height="1.5"/><rect x="1" y="17" width="1.5" height="1.5"/></g></svg>
<svg style="left:496px;top:81px" width="19" height="19"><path d="M0.5 8.5 H13 L8 14 V18 L5.5 17 V14 Z" fill="#5c85c8"/><path d="M5.5 14 H8 V18 L5.5 17 Z" fill="#9ec0ee"/><rect x="8.5" y="0.5" width="9" height="7" fill="#fff" stroke="#444"/><rect x="9" y="1" width="8" height="2" fill="#3452cc"/></svg>
<div class="a" style="left:521px;top:81px;width:1px;height:18px;background:#d4d4d4"></div>
<svg style="left:530px;top:81px" width="17" height="18"><path d="M4 4 Q8 1.5 12 4 V14 M4 4 V14" stroke="#888" stroke-width="1.5" fill="none"/><path d="M2 4 Q0 9 2 15 M14 4 Q16 9 14 15" stroke="#aaa" stroke-width="1.2" fill="none"/><path d="M4 5 H12" stroke="#aaa" stroke-width="2"/></svg>
<svg style="left:555px;top:81px" width="19" height="19"><rect x="1" y="2" width="17" height="15" fill="#eee" stroke="#999"/><path d="M1 4.5 H18 M1 14.5 H18" stroke="#999" stroke-width="1"/><path d="M3 2 V4 M6 2 V4 M9 2 V4 M12 2 V4 M15 2 V4 M3 15 V17 M6 15 V17 M9 15 V17 M12 15 V17 M15 15 V17" stroke="#fff"/><path d="M7 7 L12 9.5 L7 12 Z" fill="#999"/><path d="M3 5 V14 M16 5 V14" stroke="#aaa"/></svg>
<div class="a" style="left:580px;top:81px;width:1px;height:18px;background:#d4d4d4"></div>
<svg style="left:588px;top:81px" width="19" height="19"><path d="M1 15 V4 Q3 3 4 10 Q9 20 14 10 Q15 3 17 4 V15" stroke="#888" stroke-width="1.2" fill="none"/><path d="M4 10 Q9 20 14 10 Z" fill="#ccc"/></svg>
<svg style="left:614px;top:81px" width="19" height="19"><circle cx="5" cy="3.5" r="2.5" fill="#999"/><path d="M1 10 L5 5 L9 10 Z" fill="#aaa"/><path d="M11 4 H17 M11 4 L13.5 1.5 M11 4 L13.5 6.5" stroke="#999" stroke-width="1.8" fill="none"/><path d="M5 18 V13 M2.5 15 L5 12 L7.5 15" stroke="#999" stroke-width="2" fill="none"/></svg>
<div class="a" style="left:639px;top:81px;width:1px;height:18px;background:#d4d4d4"></div>
<svg style="left:647px;top:81px" width="19" height="19"><path d="M3 4 H15" stroke="#bbb" stroke-width="4" stroke-linecap="round"/><circle cx="3" cy="4" r="2" fill="#888"/><circle cx="15" cy="4" r="2" fill="#888"/><path d="M1 13 H17" stroke="#555" stroke-width="1.1"/><path d="M2 13 Q5 8 9 13 Q13 18 16 13" stroke="#555" stroke-width="1.3" fill="none"/></svg>
<svg style="left:673px;top:81px" width="19" height="19"><path d="M3 4 H15" stroke="#bbb" stroke-width="4" stroke-linecap="round"/><circle cx="3" cy="4" r="2" fill="#888"/><circle cx="9" cy="4" r="2" fill="#888"/><circle cx="15" cy="4" r="2" fill="#888"/><path d="M1 13 H17" stroke="#555" stroke-width="1.1"/><path d="M2 13 Q5 8 9 13 Q13 18 16 13" stroke="#555" stroke-width="1.3" fill="none"/></svg>
<div class="a" style="left:698px;top:81px;width:1px;height:18px;background:#d4d4d4"></div>
<svg style="left:706px;top:81px" width="19" height="19"><rect x="0.5" y="1.5" width="17" height="16" fill="#ddd" stroke="#888"/><path d="M1 2 L17 17 H1 Z" fill="#bbb"/><path d="M4 2 L17 15" stroke="#999" stroke-width="2.5"/><path d="M11 9 L17 1.5 L18.5 3 L12.5 10.5 Z" fill="#eee" stroke="#888" stroke-width="0.8"/></svg>
<svg style="left:730px;top:88px" width="8" height="5"><path d="M0 0 H7 L3.5 4 Z" fill="#555"/></svg>
<div class="a" style="left:741px;top:77px;width:1px;height:27px;background:#e8e8e8"></div>
<svg style="left:746px;top:80px" width="3" height="20"><g fill="#a8a8a8"><rect x="1" y="1" width="1.5" height="1.5"/><rect x="1" y="5" width="1.5" height="1.5"/><rect x="1" y="9" width="1.5" height="1.5"/><rect x="1" y="13" width="1.5" height="1.5"/><rect x="1" y="17" width="1.5" height="1.5"/></g></svg>
<div class="a" style="left:752px;top:80px;width:123px;height:21px;background:#e8e8f2"></div>
<div class="a" style="left:757px;top:85px;width:11px;height:11px;background:#cdfcfc"></div>
<div class="t" style="left:773px;top:85px">1 - Global XYZ</div>
<svg style="left:862px;top:88px" width="10" height="6"><path d="M0.7 0.7 L4.5 4.5 L8.3 0.7" fill="none" stroke="#555" stroke-width="1.2"/></svg>
<svg style="left:879px;top:81px" width="19" height="19"><rect x="7.5" y="0.5" width="10" height="8" fill="#fff" stroke="#444"/><rect x="8" y="1" width="9" height="2" fill="#3452cc"/><path d="M6 13 V4" stroke="#3a70d0" stroke-width="1.6"/><path d="M6 13 H16" stroke="#e05020" stroke-width="1.6"/><path d="M6 13 L1 17" stroke="#2fa030" stroke-width="1.8"/><path d="M4 5 L6 2 L8 5 Z" fill="#3a70d0"/><path d="M15 11 L18 13 L15 15 Z" fill="#e05020"/><circle cx="6" cy="13" r="1.5" fill="#f0e020"/></svg>
<div class="a" style="left:904px;top:81px;width:1px;height:18px;background:#d4d4d4"></div>
<svg style="left:912px;top:81px" width="19" height="19"><g fill="#777"><rect x="1" y="6" width="1.6" height="1.6"/><rect x="1" y="9" width="1.6" height="1.6"/><rect x="1" y="12" width="1.6" height="1.6"/><rect x="1" y="15" width="1.6" height="1.6"/><rect x="4" y="6" width="1.6" height="1.6"/><rect x="4" y="9" width="1.6" height="1.6"/><rect x="4" y="12" width="1.6" height="1.6"/><rect x="4" y="15" width="1.6" height="1.6"/><rect x="7" y="6" width="1.6" height="1.6"/><rect x="7" y="9" width="1.6" height="1.6"/><rect x="7" y="12" width="1.6" height="1.6"/><rect x="7" y="15" width="1.6" height="1.6"/><rect x="10" y="6" width="1.6" height="1.6"/><rect x="10" y="9" width="1.6" height="1.6"/><rect x="10" y="12" width="1.6" height="1.6"/><rect x="10" y="15" width="1.6" height="1.6"/><rect x="13" y="6" width="1.6" height="1.6"/><rect x="13" y="9" width="1.6" height="1.6"/><rect x="13" y="12" width="1.6" height="1.6"/><rect x="13" y="15" width="1.6" height="1.6"/><rect x="16" y="6" width="1.6" height="1.6"/><rect x="16" y="9" width="1.6" height="1.6"/><rect x="16" y="12" width="1.6" height="1.6"/><rect x="16" y="15" width="1.6" height="1.6"/></g><path d="M1 6 Q5 2 11 3 L13 4 Q15 7 12 9 Q7 10 3 8 Z" fill="#d8b08a" stroke="#9a7a5a" stroke-width="0.6"/><path d="M13 2 L17 1 V7" fill="#4a80d8"/></svg>
<svg style="left:938px;top:81px" width="19" height="19"><g fill="#777"><rect x="1" y="1" width="1.6" height="1.6"/><rect x="1" y="4" width="1.6" height="1.6"/><rect x="1" y="7" width="1.6" height="1.6"/><rect x="1" y="10" width="1.6" height="1.6"/><rect x="1" y="13" width="1.6" height="1.6"/><rect x="1" y="16" width="1.6" height="1.6"/><rect x="4" y="1" width="1.6" height="1.6"/><rect x="4" y="4" width="1.6" height="1.6"/><rect x="4" y="7" width="1.6" height="1.6"/><rect x="4" y="10" width="1.6" height="1.6"/><rect x="4" y="13" width="1.6" height="1.6"/><rect x="4" y="16" width="1.6" height="1.6"/><rect x="7" y="1" width="1.6" height="1.6"/><rect x="7" y="4" width="1.6" height="1.6"/><rect x="7" y="7" width="1.6" height="1.6"/><rect x="7" y="10" width="1.6" height="1.6"/><rect x="7" y="13" width="1.6" height="1.6"/><rect x="7" y="16" width="1.6" height="1.6"/><rect x="10" y="1" width="1.6" height="1.6"/><rect x="10" y="4" width="1.6" height="1.6"/><rect x="10" y="7" width="1.6" height="1.6"/><rect x="10" y="10" width="1.6" height="1.6"/><rect x="10" y="13" width="1.6" height="1.6"/><rect x="10" y="16" width="1.6" height="1.6"/><rect x="13" y="1" width="1.6" height="1.6"/><rect x="13" y="4" width="1.6" height="1.6"/><rect x="13" y="7" width="1.6" height="1.6"/><rect x="13" y="10" width="1.6" height="1.6"/><rect x="13" y="13" width="1.6" height="1.6"/><rect x="13" y="16" width="1.6" height="1.6"/><rect x="16" y="1" width="1.6" height="1.6"/><rect x="16" y="4" width="1.6" height="1.6"/><rect x="16" y="7" width="1.6" height="1.6"/><rect x="16" y="10" width="1.6" height="1.6"/><rect x="16" y="13" width="1.6" height="1.6"/><rect x="16" y="16" width="1.6" height="1.6"/></g><path d="M9 0 V18 M0 9 H18" stroke="#1a1a90" stroke-width="1.6"/><circle cx="9" cy="9" r="4" fill="#fff" stroke="#1a1a90" stroke-width="1.6"/><circle cx="9" cy="9" r="1" fill="#1a1a90"/></svg>
<svg style="left:964px;top:81px" width="19" height="19"><rect x="3.5" y="3.5" width="12" height="12" rx="2" fill="#a8cdf0" stroke="#5a7fb0" stroke-width="1"/><path d="M11.5 0.5 L13 8.5 L6.5 17.5 L5.5 9.5 Z" fill="#b8d6f2" stroke="#2a3a6a" stroke-width="0.8"/><path d="M0.5 14.5 L9.5 10 L18 8.5 L9 13 Z" fill="#e04848" stroke="#2a3a6a" stroke-width="0.8"/></svg>
<svg style="left:990px;top:81px" width="19" height="19"><rect x="3.5" y="3.5" width="12" height="12" rx="2" fill="#a8cdf0" stroke="#5a7fb0" stroke-width="1"/><path d="M11.5 0.5 L13 8.5 L6.5 17.5 L5.5 9.5 Z" fill="#e04848" stroke="#2a3a6a" stroke-width="0.8"/><path d="M0.5 14.5 L9.5 10 L18 8.5 L9 13 Z" fill="#b8d6f2" stroke="#2a3a6a" stroke-width="0.8"/></svg>
<div class="a" style="left:1013px;top:79px;width:25px;height:23px;background:#cce4f7;border:1px solid #99c9ef;border-radius:3px"></div>
<svg style="left:1016px;top:81px" width="19" height="19"><rect x="3.5" y="3.5" width="12" height="12" rx="2" fill="#e04848" stroke="#8a2a2a" stroke-width="1"/><path d="M11.5 0.5 L13 8.5 L6.5 17.5 L5.5 9.5 Z" fill="#b8d6f2" stroke="#2a3a6a" stroke-width="0.8"/><path d="M0.5 14.5 L9.5 10 L18 8.5 L9 13 Z" fill="#b8d6f2" stroke="#2a3a6a" stroke-width="0.8"/></svg>
<div class="a" style="left:1042px;top:81px;width:1px;height:18px;background:#d4d4d4"></div>
<svg style="left:1050px;top:81px" width="18" height="19"><circle cx="3.5" cy="3.5" r="2.5" fill="none" stroke="#999"/><path d="M6 4 L12 10" stroke="#999"/><path d="M10 10 H12.5 V7.5" stroke="#999" fill="none"/><circle cx="11" cy="14" r="3" fill="none" stroke="#999" stroke-width="1.2"/><circle cx="14" cy="15" r="2.5" fill="none" stroke="#999" stroke-width="1.2"/></svg>
<svg style="left:1075px;top:81px" width="19" height="19"><path d="M9 0 V18" stroke="#999" stroke-dasharray="2 1"/><path d="M6 4 Q-1 6 1 11 Q3 14 9 13 M12 5 Q18 6 17 10 Q15 14 11 13" stroke="#999" stroke-width="1.4" fill="none"/><path d="M4 10 L2 14 L6 14 Z" fill="#999"/></svg>
<svg style="left:1100px;top:81px" width="19" height="19"><path d="M9 0 V18" stroke="#999" stroke-width="0.8"/><path d="M7 3 L1 17 H7 Z M11 3 L17 17 H11 Z" fill="#eee" stroke="#999" stroke-width="1.1"/></svg>
<div class="t" style="left:1127px;top:84px;font-size:10px;color:#555">&#187;</div>
<div class="a" style="left:1137px;top:77px;width:1px;height:27px;background:#e8e8e8"></div>
<svg style="left:1142px;top:80px" width="3" height="20"><g fill="#a8a8a8"><rect x="1" y="1" width="1.5" height="1.5"/><rect x="1" y="5" width="1.5" height="1.5"/><rect x="1" y="9" width="1.5" height="1.5"/><rect x="1" y="13" width="1.5" height="1.5"/><rect x="1" y="17" width="1.5" height="1.5"/></g></svg>
<svg style="left:1151px;top:81px" width="19" height="19"><rect x="0.5" y="0.5" width="17" height="17" fill="#ddd" stroke="#444"/><rect x="1" y="1" width="16" height="2.5" fill="#3452cc"/><path d="M1 6.5 H17 M1 10 H17 M1 13.5 H17 M6 4 V17 M12 4 V17" stroke="#999"/><path d="M5 16 L16 6 V16 Z" fill="#8fea8f" stroke="#3a9a3a" stroke-width="1"/></svg>
<svg style="left:1175px;top:88px" width="8" height="5"><path d="M0 0 H7 L3.5 4 Z" fill="#111"/></svg>
<div class="t" style="left:1190px;top:84px;font-size:10px;color:#555">&#187;</div>
<div class="a" style="left:0;top:105px;width:295px;height:21px;background:#d9e5f2"></div>
<div class="t" style="left:5px;top:109px;font-size:12px;line-height:14px;font-weight:bold;color:#333;-webkit-text-stroke:0">Navigator - Data</div>
<svg style="left:258px;top:111px" width="9" height="9"><path d="M3 0.5 H8.5 V6 H6.5" fill="none" stroke="#222" stroke-width="1"/><rect x="3" y="0" width="5.5" height="1.6" fill="#222"/><rect x="0.5" y="3.3" width="5.5" height="5.2" fill="#d9e5f2" stroke="#222" stroke-width="1"/><rect x="0" y="3" width="6.5" height="1.6" fill="#222"/></svg>
<svg style="left:279px;top:112px" width="8" height="8"><path d="M0.8 0.8 L7.2 7.2 M7.2 0.8 L0.8 7.2" stroke="#333" stroke-width="1.9"/></svg>
<div class="a" style="left:0;top:126px;width:295px;height:1px;background:#f5f5f5"></div>
<div class="a" style="left:0;top:127px;width:295px;height:750px;background:#fff;border:2px solid #c8c8d6;border-bottom:none;border-top:1px solid #c8c8d6"></div>
<svg style="left:5px;top:131px" width="16" height="13"><rect x="0" y="0" width="16" height="9" fill="#2a3576"/><rect x="0" y="10" width="16" height="3" fill="#2a3576"/><path d="M4 1 V13" stroke="#fff" stroke-width="1"/><path d="M1 5 L4 1.5 L15 5" stroke="#c8cce0" stroke-width="0.8" fill="none"/></svg>
<div class="t" style="left:26px;top:132px;letter-spacing:-0.3px;">RSTAB</div>
<svg style="left:7px;top:152px" width="10" height="6"><path d="M0.7 0.7 L4.75 4.75 L8.8 0.7" fill="none" stroke="#333" stroke-width="1.4"/></svg>
<svg style="left:25px;top:147px" width="17" height="17"><path d="M3.5 0.5 H11.5 L15.5 4.5 V16.5 H3.5 Z" fill="#fff" stroke="#555"/><path d="M11.5 0.5 V4.5 H15.5" fill="none" stroke="#555" stroke-width="0.8"/><rect x="1" y="5" width="6" height="6" fill="none" stroke="#8ec0ea"/><path d="M1 8 H7" stroke="#8ec0ea"/><path d="M2 11 L1 13 M6 11 L7 13" stroke="#5aa05a" stroke-width="1.5"/></svg>
<div class="t" style="left:46px;top:150px;font-weight:bold;letter-spacing:0.22px;">Model.rs9*</div>
<svg style="left:27px;top:170px" width="10" height="6"><path d="M0.7 0.7 L4.75 4.75 L8.8 0.7" fill="none" stroke="#333" stroke-width="1.4"/></svg>
<svg style="left:45px;top:166px" width="17" height="15"><path d="M2.5 3 L2.5 1.2 Q2.5 0.5 3.3 0.5 L7.5 0.5 L8.5 1.5 L14.5 1.5 Q15.5 1.5 15.5 2.5 L15.5 13 Q15.5 13.5 14.5 13.5 L3.5 13.5 Z" fill="#f5eca8" stroke="#c4b766" stroke-width="1.1"/><path d="M0.6 3.6 L13.5 3.6 Q14.3 3.6 14.4 4.4 L15.4 13.5 L2.5 13.5 Q1.7 13.5 1.6 12.7 Z" fill="#f5eca8" stroke="#c4b766" stroke-width="1.1"/></svg>
<div class="t" style="left:66px;top:168px;">Basic Objects</div>
<svg style="left:47px;top:188px" width="10" height="6"><path d="M0.7 0.7 L4.75 4.75 L8.8 0.7" fill="none" stroke="#333" stroke-width="1.4"/></svg>
<svg style="left:66px;top:184px" width="15" height="15"><circle cx="3.8" cy="3.8" r="3.4" fill="#a3b3ea"/><circle cx="11.2" cy="3.8" r="3.4" fill="#e6e052"/><circle cx="3.8" cy="11.2" r="3.4" fill="#5fd12a"/><circle cx="11.2" cy="11.2" r="3.4" fill="#e4494b"/></svg>
<div class="t" style="left:86px;top:186px;">Materials</div>
<svg style="left:86px;top:204px" width="11" height="11"><rect x="0" y="0" width="11" height="11" fill="#ffa200"/></svg>
<div class="t" style="left:101px;top:204px;">1 - S235 | Isotropic | Linear Elastic</div>
<svg style="left:86px;top:222px" width="11" height="11"><rect x="0" y="0" width="11" height="11" fill="#f6c500"/></svg>
<div class="t" style="left:101px;top:222px;color:#168cff;">2 - C30/37 | Isotropic | Linear Elastic</div>
<svg style="left:49px;top:240px" width="6" height="10"><path d="M0.7 0.7 L4.75 4.75 L0.7 8.8" fill="none" stroke="#808080" stroke-width="1.3"/></svg>
<svg style="left:67px;top:238px" width="14" height="14"><path d="M4 3 L13 0 V10 L4 13 Z" fill="#5f7fd8"/><path d="M5 4 L12 2 M5 9 L12 7" stroke="#b8c8f0" stroke-width="1.2"/><path d="M0.5 3.5 H7 M0.5 12.5 H7 M3.7 3.5 V12.5" stroke="#e42020" stroke-width="1.8"/></svg>
<div class="t" style="left:86px;top:240px;letter-spacing:0.14px;">Sections</div>
<svg style="left:49px;top:258px" width="6" height="10"><path d="M0.7 0.7 L4.75 4.75 L0.7 8.8" fill="none" stroke="#808080" stroke-width="1.3"/></svg>
<svg style="left:70px;top:261px" width="4" height="4"><circle cx="2" cy="2" r="1.7" fill="#e02020"/></svg>
<div class="t" style="left:86px;top:258px;">Nodes</div>
<svg style="left:49px;top:276px" width="6" height="10"><path d="M0.7 0.7 L4.75 4.75 L0.7 8.8" fill="none" stroke="#808080" stroke-width="1.3"/></svg>
<svg style="left:65px;top:274px" width="16" height="15"><path d="M1.5 13.5 L13.5 1.5" stroke="#8faad8" stroke-width="3.2"/><path d="M1.5 13.5 L13.5 1.5" stroke="#c7dbf5" stroke-width="1.4"/><circle cx="1.6" cy="13.4" r="1.6" fill="#e02020"/><circle cx="13.4" cy="1.6" r="1.6" fill="#e02020"/><path d="M10 9.5 H15 M12.5 9.5 V14.5 M10 14.5 H15" stroke="#444" stroke-width="1.2"/></svg>
<div class="t" style="left:86px;top:276px;">Members</div>
<svg style="left:65px;top:292px" width="16" height="15"><path d="M1.5 13.5 L13.5 1.5" stroke="#8faad8" stroke-width="3.2"/><path d="M1.5 13.5 L13.5 1.5" stroke="#c7dbf5" stroke-width="1.4"/><path d="M4 13.5 L6 12 L9 13 L14 4" stroke="#777" stroke-width="0.6" fill="none"/><circle cx="1.6" cy="13.4" r="1.6" fill="#e02020"/><circle cx="7.5" cy="7.5" r="1.5" fill="#e02020"/><circle cx="13.4" cy="1.6" r="1.6" fill="#e02020"/><path d="M10 11.5 H15 M12.5 9 V14" stroke="#111" stroke-width="1.3"/></svg>
<div class="t" style="left:86px;top:294px;letter-spacing:0.1px;">Member Sets</div>
<svg style="left:29px;top:312px" width="6" height="10"><path d="M0.7 0.7 L4.75 4.75 L0.7 8.8" fill="none" stroke="#808080" stroke-width="1.3"/></svg>
<svg style="left:45px;top:310px" width="17" height="15"><path d="M1.5 2 Q1.5 0.6 2.5 0.6 L6.5 0.6 L7.5 1.6 L14.5 1.6 Q15.5 1.6 15.5 2.6 L15.5 12.8 Q15.5 13.6 14.5 13.6 L1.7 13.6 Q0.7 13.6 0.7 12.6 L0.7 2.6 Q0.7 1.6 1.5 1.6 Z" fill="#f5eca8" stroke="#c9bd6c" stroke-width="1.1"/></svg>
<div class="t" style="left:66px;top:312px;letter-spacing:0.14px;">Special Objects</div>
<svg style="left:29px;top:330px" width="6" height="10"><path d="M0.7 0.7 L4.75 4.75 L0.7 8.8" fill="none" stroke="#808080" stroke-width="1.3"/></svg>
<svg style="left:45px;top:328px" width="17" height="15"><path d="M1.5 2 Q1.5 0.6 2.5 0.6 L6.5 0.6 L7.5 1.6 L14.5 1.6 Q15.5 1.6 15.5 2.6 L15.5 12.8 Q15.5 13.6 14.5 13.6 L1.7 13.6 Q0.7 13.6 0.7 12.6 L0.7 2.6 Q0.7 1.6 1.5 1.6 Z" fill="#f5eca8" stroke="#c9bd6c" stroke-width="1.1"/></svg>
<div class="t" style="left:66px;top:330px;">Types for Nodes</div>
<svg style="left:29px;top:348px" width="6" height="10"><path d="M0.7 0.7 L4.75 4.75 L0.7 8.8" fill="none" stroke="#808080" stroke-width="1.3"/></svg>
<svg style="left:45px;top:346px" width="17" height="15"><path d="M1.5 2 Q1.5 0.6 2.5 0.6 L6.5 0.6 L7.5 1.6 L14.5 1.6 Q15.5 1.6 15.5 2.6 L15.5 12.8 Q15.5 13.6 14.5 13.6 L1.7 13.6 Q0.7 13.6 0.7 12.6 L0.7 2.6 Q0.7 1.6 1.5 1.6 Z" fill="#f5eca8" stroke="#c9bd6c" stroke-width="1.1"/></svg>
<div class="t" style="left:66px;top:348px;">Types for Members</div>
<svg style="left:29px;top:366px" width="6" height="10"><path d="M0.7 0.7 L4.75 4.75 L0.7 8.8" fill="none" stroke="#808080" stroke-width="1.3"/></svg>
<svg style="left:45px;top:364px" width="17" height="15"><path d="M1.5 2 Q1.5 0.6 2.5 0.6 L6.5 0.6 L7.5 1.6 L14.5 1.6 Q15.5 1.6 15.5 2.6 L15.5 12.8 Q15.5 13.6 14.5 13.6 L1.7 13.6 Q0.7 13.6 0.7 12.6 L0.7 2.6 Q0.7 1.6 1.5 1.6 Z" fill="#f5eca8" stroke="#c9bd6c" stroke-width="1.1"/></svg>
<div class="t" style="left:66px;top:366px;">Types for Special Objects</div>
<svg style="left:29px;top:384px" width="6" height="10"><path d="M0.7 0.7 L4.75 4.75 L0.7 8.8" fill="none" stroke="#808080" stroke-width="1.3"/></svg>
<svg style="left:45px;top:382px" width="17" height="15"><path d="M1.5 2 Q1.5 0.6 2.5 0.6 L6.5 0.6 L7.5 1.6 L14.5 1.6 Q15.5 1.6 15.5 2.6 L15.5 12.8 Q15.5 13.6 14.5 13.6 L1.7 13.6 Q0.7 13.6 0.7 12.6 L0.7 2.6 Q0.7 1.6 1.5 1.6 Z" fill="#f5eca8" stroke="#c9bd6c" stroke-width="1.1"/></svg>
<div class="t" style="left:66px;top:384px;letter-spacing:0.33px;">Imperfections</div>
<svg style="left:27px;top:404px" width="10" height="6"><path d="M0.7 0.7 L4.75 4.75 L8.8 0.7" fill="none" stroke="#333" stroke-width="1.4"/></svg>
<svg style="left:45px;top:400px" width="17" height="15"><path d="M2.5 3 L2.5 1.2 Q2.5 0.5 3.3 0.5 L7.5 0.5 L8.5 1.5 L14.5 1.5 Q15.5 1.5 15.5 2.5 L15.5 13 Q15.5 13.5 14.5 13.5 L3.5 13.5 Z" fill="#f5eca8" stroke="#c4b766" stroke-width="1.1"/><path d="M0.6 3.6 L13.5 3.6 Q14.3 3.6 14.4 4.4 L15.4 13.5 L2.5 13.5 Q1.7 13.5 1.6 12.7 Z" fill="#f5eca8" stroke="#c4b766" stroke-width="1.1"/></svg>
<div class="t" style="left:66px;top:402px;letter-spacing:0.21px;">Load Cases &amp; Combinations</div>
<svg style="left:49px;top:420px" width="6" height="10"><path d="M0.7 0.7 L4.75 4.75 L0.7 8.8" fill="none" stroke="#808080" stroke-width="1.3"/></svg>
<svg style="left:65px;top:418px" width="17" height="14"><path d="M4.5 3 V11" stroke="#7399d6" stroke-width="1.8"/><path d="M1.5 8.5 L4.5 12.5 L7.5 8.5 Z" fill="#7399d6"/><path d="M0 14.5 H16" stroke="#333" stroke-width="1.4"/></svg>
<div class="t" style="left:86px;top:420px;letter-spacing:-0.16px;">Load Cases</div>
<svg style="left:49px;top:438px" width="6" height="10"><path d="M0.7 0.7 L4.75 4.75 L0.7 8.8" fill="none" stroke="#808080" stroke-width="1.3"/></svg>
<svg style="left:65px;top:436px" width="17" height="15"><rect x="0.5" y="0.5" width="5" height="3" fill="#fff" stroke="#333"/><rect x="0.5" y="11.5" width="5" height="3" fill="#fff" stroke="#333"/><path d="M5.5 2 Q9 2 10 5 M5.5 13 Q9 13 10 10" stroke="#333" fill="none"/><path d="M8 3 L11 3.5 L10 6.5 Z M8 12 L11 11.5 L10 8.5 Z" fill="#333"/><circle cx="12.5" cy="7.5" r="2.8" fill="#5f8de8"/></svg>
<div class="t" style="left:86px;top:438px;letter-spacing:0.17px;">Actions</div>
<svg style="left:49px;top:456px" width="6" height="10"><path d="M0.7 0.7 L4.75 4.75 L0.7 8.8" fill="none" stroke="#808080" stroke-width="1.3"/></svg>
<svg style="left:65px;top:454px" width="17" height="15"><rect x="0" y="0" width="6" height="4" fill="#6e9ae8"/><rect x="0" y="11" width="6" height="4" fill="#2cb83c"/><path d="M6 2 Q9 2 10 5 M6 13 Q9 13 10 10" stroke="#333" fill="none"/><path d="M8 3 L11 3.5 L10 6.5 Z M8 12 L11 11.5 L10 8.5 Z" fill="#333"/><rect x="10" y="5" width="6" height="5" fill="#f000f0"/></svg>
<div class="t" style="left:86px;top:456px;letter-spacing:0.38px;">Design Situations</div>
<svg style="left:65px;top:472px" width="17" height="15"><rect x="0.5" y="0.5" width="5" height="3" fill="#fff" stroke="#333"/><rect x="0.5" y="11.5" width="5" height="3" fill="#fff" stroke="#333"/><path d="M5.5 2 Q9 2 10 5 M5.5 13 Q9 13 10 10" stroke="#333" fill="none"/><path d="M8 3 L11 3.5 L10 6.5 Z M8 12 L11 11.5 L10 8.5 Z" fill="#333"/><path d="M12.5 4.5 L15.5 7.5 L12.5 10.5 L9.5 7.5 Z" fill="#5f8de8"/></svg>
<div class="t" style="left:86px;top:474px;letter-spacing:0.33px;">Action Combinations</div>
<svg style="left:65px;top:490px" width="17" height="15"><rect x="0.5" y="0.5" width="5" height="3" fill="#fff" stroke="#333"/><rect x="0.5" y="11.5" width="5" height="3" fill="#fff" stroke="#333"/><path d="M5.5 2 Q9 2 10 5 M5.5 13 Q9 13 10 10" stroke="#333" fill="none"/><path d="M8 3 L11 3.5 L10 6.5 Z M8 12 L11 11.5 L10 8.5 Z" fill="#333"/><rect x="10" y="5" width="5" height="5" fill="#2cb83c"/></svg>
<div class="t" style="left:86px;top:492px;letter-spacing:0.38px;">Load Combinations</div>
<svg style="left:49px;top:510px" width="6" height="10"><path d="M0.7 0.7 L4.75 4.75 L0.7 8.8" fill="none" stroke="#808080" stroke-width="1.3"/></svg>
<svg style="left:65px;top:508px" width="17" height="15"><path d="M3 4 L16 0 V4 Z" fill="#d42020"/><path d="M0 4 H16" stroke="#223" stroke-width="0.8"/><path d="M0 4.2 H8 L0 7 Z" fill="#2a3a9a"/><rect x="11.3" y="7" width="1.4" height="2" fill="#6b90f0" transform="rotate(0 12 10.5)"/><rect x="11.3" y="7" width="1.4" height="2" fill="#6b90f0" transform="rotate(45 12 10.5)"/><rect x="11.3" y="7" width="1.4" height="2" fill="#6b90f0" transform="rotate(90 12 10.5)"/><rect x="11.3" y="7" width="1.4" height="2" fill="#6b90f0" transform="rotate(135 12 10.5)"/><rect x="11.3" y="7" width="1.4" height="2" fill="#6b90f0" transform="rotate(180 12 10.5)"/><rect x="11.3" y="7" width="1.4" height="2" fill="#6b90f0" transform="rotate(225 12 10.5)"/><rect x="11.3" y="7" width="1.4" height="2" fill="#6b90f0" transform="rotate(270 12 10.5)"/><rect x="11.3" y="7" width="1.4" height="2" fill="#6b90f0" transform="rotate(315 12 10.5)"/><circle cx="12" cy="10.5" r="2.6" fill="#6b90f0"/><circle cx="12" cy="10.5" r="1" fill="#fff"/></svg>
<div class="t" style="left:86px;top:510px;letter-spacing:0.17px;">Static Analysis Settings</div>
<svg style="left:65px;top:526px" width="17" height="15"><rect x="0.5" y="0.5" width="5" height="3" fill="#fff" stroke="#333"/><rect x="0.5" y="11.5" width="5" height="3" fill="#fff" stroke="#333"/><path d="M5.5 2 Q9 2 10 5 M5.5 13 Q9 13 10 10" stroke="#333" fill="none"/><path d="M8 3 L11 3.5 L10 6.5 Z M8 12 L11 11.5 L10 8.5 Z" fill="#333"/><path d="M8 3 L11 3.5 L10 6.5 Z M8 12 L11 11.5 L10 8.5 Z" fill="#333"/><rect x="10.5" y="5.5" width="4" height="4" fill="#fff" stroke="#555"/></svg>
<div class="t" style="left:86px;top:528px;letter-spacing:0.39px;">Combination Wizards</div>
<svg style="left:65px;top:543px" width="17" height="16"><rect x="3.5" y="0.5" width="5" height="3" fill="#fff" stroke="#333"/><rect x="3.5" y="12.5" width="5" height="3" fill="#fff" stroke="#333"/><rect x="11.5" y="6.5" width="4" height="3" fill="#fff" stroke="#333"/><path d="M3 2 Q0 4 1 8 Q1 12 3 14 M8.5 2 Q12 2 12.5 6 M8.5 14 Q12 14 12.5 10" stroke="#333" fill="none"/><path d="M11 4 L13.5 4 L12.5 7 Z M11 12 L13.5 12 L12.5 9 Z M-0.5 8 L2.5 8 L1 11 Z" fill="#333"/></svg>
<div class="t" style="left:86px;top:546px;letter-spacing:0.13px;">Relationship Between Load Cases</div>
<svg style="left:29px;top:564px" width="6" height="10"><path d="M0.7 0.7 L4.75 4.75 L0.7 8.8" fill="none" stroke="#808080" stroke-width="1.3"/></svg>
<svg style="left:45px;top:562px" width="17" height="15"><path d="M1.5 2 Q1.5 0.6 2.5 0.6 L6.5 0.6 L7.5 1.6 L14.5 1.6 Q15.5 1.6 15.5 2.6 L15.5 12.8 Q15.5 13.6 14.5 13.6 L1.7 13.6 Q0.7 13.6 0.7 12.6 L0.7 2.6 Q0.7 1.6 1.5 1.6 Z" fill="#f5eca8" stroke="#c9bd6c" stroke-width="1.1"/></svg>
<div class="t" style="left:66px;top:564px;letter-spacing:0.18px;">Load Wizards</div>
<svg style="left:27px;top:584px" width="10" height="6"><path d="M0.7 0.7 L4.75 4.75 L8.8 0.7" fill="none" stroke="#333" stroke-width="1.4"/></svg>
<svg style="left:45px;top:580px" width="17" height="15"><path d="M2.5 3 L2.5 1.2 Q2.5 0.5 3.3 0.5 L7.5 0.5 L8.5 1.5 L14.5 1.5 Q15.5 1.5 15.5 2.5 L15.5 13 Q15.5 13.5 14.5 13.5 L3.5 13.5 Z" fill="#f5eca8" stroke="#c4b766" stroke-width="1.1"/><path d="M0.6 3.6 L13.5 3.6 Q14.3 3.6 14.4 4.4 L15.4 13.5 L2.5 13.5 Q1.7 13.5 1.6 12.7 Z" fill="#f5eca8" stroke="#c4b766" stroke-width="1.1"/></svg>
<div class="t" style="left:66px;top:582px;">Loads</div>
<svg style="left:49px;top:600px" width="6" height="10"><path d="M0.7 0.7 L4.75 4.75 L0.7 8.8" fill="none" stroke="#808080" stroke-width="1.3"/></svg>
<svg style="left:65px;top:598px" width="17" height="15"><path d="M1.5 2 Q1.5 0.6 2.5 0.6 L6.5 0.6 L7.5 1.6 L14.5 1.6 Q15.5 1.6 15.5 2.6 L15.5 12.8 Q15.5 13.6 14.5 13.6 L1.7 13.6 Q0.7 13.6 0.7 12.6 L0.7 2.6 Q0.7 1.6 1.5 1.6 Z" fill="#f5eca8" stroke="#c9bd6c" stroke-width="1.1"/></svg>
<div class="t" style="left:86px;top:600px;letter-spacing:0.16px;">LC1 - Self-weight</div>
<svg style="left:49px;top:618px" width="6" height="10"><path d="M0.7 0.7 L4.75 4.75 L0.7 8.8" fill="none" stroke="#808080" stroke-width="1.3"/></svg>
<svg style="left:65px;top:616px" width="17" height="15"><path d="M1.5 2 Q1.5 0.6 2.5 0.6 L6.5 0.6 L7.5 1.6 L14.5 1.6 Q15.5 1.6 15.5 2.6 L15.5 12.8 Q15.5 13.6 14.5 13.6 L1.7 13.6 Q0.7 13.6 0.7 12.6 L0.7 2.6 Q0.7 1.6 1.5 1.6 Z" fill="#f5eca8" stroke="#c9bd6c" stroke-width="1.1"/></svg>
<div class="t" style="left:86px;top:618px;">LC2 - Snow</div>
<svg style="left:49px;top:636px" width="6" height="10"><path d="M0.7 0.7 L4.75 4.75 L0.7 8.8" fill="none" stroke="#808080" stroke-width="1.3"/></svg>
<svg style="left:65px;top:634px" width="17" height="15"><path d="M1.5 2 Q1.5 0.6 2.5 0.6 L6.5 0.6 L7.5 1.6 L14.5 1.6 Q15.5 1.6 15.5 2.6 L15.5 12.8 Q15.5 13.6 14.5 13.6 L1.7 13.6 Q0.7 13.6 0.7 12.6 L0.7 2.6 Q0.7 1.6 1.5 1.6 Z" fill="#f5eca8" stroke="#c9bd6c" stroke-width="1.1"/></svg>
<div class="t" style="left:86px;top:636px;letter-spacing:0.22px;">LC3 - Wind in +X -&gt;Wind Pressure</div>
<svg style="left:49px;top:654px" width="6" height="10"><path d="M0.7 0.7 L4.75 4.75 L0.7 8.8" fill="none" stroke="#808080" stroke-width="1.3"/></svg>
<svg style="left:65px;top:652px" width="17" height="15"><path d="M1.5 2 Q1.5 0.6 2.5 0.6 L6.5 0.6 L7.5 1.6 L14.5 1.6 Q15.5 1.6 15.5 2.6 L15.5 12.8 Q15.5 13.6 14.5 13.6 L1.7 13.6 Q0.7 13.6 0.7 12.6 L0.7 2.6 Q0.7 1.6 1.5 1.6 Z" fill="#f5eca8" stroke="#c9bd6c" stroke-width="1.1"/></svg>
<div class="t" style="left:86px;top:654px;letter-spacing:0.33px;">LC4 - Wind in +X -&gt;Wind Suction</div>
<svg style="left:29px;top:672px" width="6" height="10"><path d="M0.7 0.7 L4.75 4.75 L0.7 8.8" fill="none" stroke="#808080" stroke-width="1.3"/></svg>
<svg style="left:45px;top:670px" width="17" height="15"><path d="M1.5 2 Q1.5 0.6 2.5 0.6 L6.5 0.6 L7.5 1.6 L14.5 1.6 Q15.5 1.6 15.5 2.6 L15.5 12.8 Q15.5 13.6 14.5 13.6 L1.7 13.6 Q0.7 13.6 0.7 12.6 L0.7 2.6 Q0.7 1.6 1.5 1.6 Z" fill="#f5eca8" stroke="#c9bd6c" stroke-width="1.1"/></svg>
<div class="t" style="left:66px;top:672px;letter-spacing:0.17px;">Results</div>
<svg style="left:29px;top:690px" width="6" height="10"><path d="M0.7 0.7 L4.75 4.75 L0.7 8.8" fill="none" stroke="#808080" stroke-width="1.3"/></svg>
<svg style="left:45px;top:688px" width="17" height="15"><path d="M1.5 2 Q1.5 0.6 2.5 0.6 L6.5 0.6 L7.5 1.6 L14.5 1.6 Q15.5 1.6 15.5 2.6 L15.5 12.8 Q15.5 13.6 14.5 13.6 L1.7 13.6 Q0.7 13.6 0.7 12.6 L0.7 2.6 Q0.7 1.6 1.5 1.6 Z" fill="#f5eca8" stroke="#c9bd6c" stroke-width="1.1"/></svg>
<div class="t" style="left:66px;top:690px;letter-spacing:0.25px;">Guide Objects</div>
<svg style="left:45px;top:706px" width="17" height="15"><path d="M1.5 2 Q1.5 0.6 2.5 0.6 L6.5 0.6 L7.5 1.6 L14.5 1.6 Q15.5 1.6 15.5 2.6 L15.5 12.8 Q15.5 13.6 14.5 13.6 L1.7 13.6 Q0.7 13.6 0.7 12.6 L0.7 2.6 Q0.7 1.6 1.5 1.6 Z" fill="#f5eca8" stroke="#c9bd6c" stroke-width="1.1"/></svg>
<div class="t" style="left:66px;top:708px;letter-spacing:0.4px;">Printout Reports</div>
<div class="a" style="left:40px;top:851px;width:255px;height:1px;background:#c8c8d6"></div>
<div class="a" style="left:2px;top:852px;width:291px;height:25px;background:#f5f5f5"></div>
<div class="a" style="left:2px;top:851px;width:38px;height:26px;background:#fff"></div>
<div class="a" style="left:40px;top:851px;width:38px;height:24px;background:#ececec;border:1px solid #c8c8d6"></div>
<div class="a" style="left:77px;top:851px;width:41px;height:24px;background:#ececec;border:1px solid #c8c8d6"></div>
<div class="a" style="left:0;top:876px;width:295px;height:2px;background:#c8c8d6"></div>
<svg style="left:11px;top:855px" width="18" height="17"><rect x="4" y="1" width="13" height="2.2" fill="#4a7ee0"/><rect x="15" y="3" width="2" height="9" fill="#777"/><rect x="4" y="3" width="11" height="8" fill="#fff"/><path d="M1 4.5 H5 L6 5.5 H10 V13 H1 Z" fill="#f2c418" stroke="#a88a10" stroke-width="0.8"/><path d="M5 12.5 Q8 8 11 8 L16 12 L12 16 Q10 12 5 12.5 Z" fill="#8cc4f4" stroke="#335" stroke-width="0.6"/><circle cx="5" cy="12.5" r="1.2" fill="#e81010"/><circle cx="11" cy="8" r="1.2" fill="#e81010"/><circle cx="16" cy="12" r="1.2" fill="#e81010"/><circle cx="12" cy="16" r="1.2" fill="#e81010"/></svg>
<svg style="left:51px;top:858px" width="14" height="10"><path d="M0.5 5 Q7 -2.5 13.5 5 Q7 12.5 0.5 5 Z" fill="#fff" stroke="#2a2f70" stroke-width="1"/><circle cx="7" cy="5" r="3" fill="#3a66c8"/><circle cx="7" cy="5" r="1.2" fill="#111"/></svg>
<svg style="left:90px;top:858px" width="14" height="10"><rect x="0" y="0.5" width="9" height="9" rx="1.5" fill="#666"/><path d="M9 4 L13.5 1 V9 L9 6 Z" fill="#666"/></svg>
<div class="a" style="left:299px;top:105px;width:901px;height:556px;background:#fff"></div>
<svg style="left:0;top:0" width="1200" height="900" shape-rendering="crispEdges"><polygon points="574.50,125.80 933.50,221.80 933.50,652.80 574.50,556.80" fill="#fafafa" stroke="none" shape-rendering="auto"/><path d="M574.5 125.8V556.8M574.5 125.8L933.5 221.8M634.5 141.8V572.8M574.5 197.6L933.5 293.6M694.5 157.8V588.8M574.5 269.5L933.5 365.5M813.5 189.8V620.8M574.5 413.1L933.5 509.1M873.5 205.8V636.8M574.5 485.0L933.5 581.0M933.5 221.8V652.8M574.5 556.8L933.5 652.8" stroke="#e3e3e3" stroke-width="1" fill="none" shape-rendering="auto"/><path d="M754 174.3V605.3" stroke="#6dd5d5" stroke-width="2" fill="none"/><path d="M574.0 341.3L934.0 437.3" stroke="#38c5c5" stroke-width="1.45" fill="none" shape-rendering="auto"/><path d="M574 125h1v1h-1zM574 132h1v1h-1zM574 140h1v1h-1zM574 147h1v1h-1zM574 154h1v1h-1zM574 161h1v1h-1zM574 168h1v1h-1zM574 176h1v1h-1zM574 183h1v1h-1zM574 190h1v1h-1zM574 197h1v1h-1zM574 204h1v1h-1zM574 212h1v1h-1zM574 219h1v1h-1zM574 226h1v1h-1zM574 233h1v1h-1zM574 240h1v1h-1zM574 247h1v1h-1zM574 255h1v1h-1zM574 262h1v1h-1zM574 269h1v1h-1zM574 276h1v1h-1zM574 283h1v1h-1zM574 291h1v1h-1zM574 298h1v1h-1zM574 305h1v1h-1zM574 312h1v1h-1zM574 319h1v1h-1zM574 326h1v1h-1zM574 334h1v1h-1zM574 341h1v1h-1zM574 348h1v1h-1zM574 355h1v1h-1zM574 362h1v1h-1zM574 370h1v1h-1zM574 377h1v1h-1zM574 384h1v1h-1zM574 391h1v1h-1zM574 398h1v1h-1zM574 405h1v1h-1zM574 413h1v1h-1zM574 420h1v1h-1zM574 427h1v1h-1zM574 434h1v1h-1zM574 441h1v1h-1zM574 449h1v1h-1zM574 456h1v1h-1zM574 463h1v1h-1zM574 470h1v1h-1zM574 477h1v1h-1zM574 484h1v1h-1zM574 492h1v1h-1zM574 499h1v1h-1zM574 506h1v1h-1zM574 513h1v1h-1zM574 520h1v1h-1zM574 528h1v1h-1zM574 535h1v1h-1zM574 542h1v1h-1zM574 549h1v1h-1zM574 556h1v1h-1zM580 127h1v1h-1zM580 134h1v1h-1zM580 141h1v1h-1zM580 148h1v1h-1zM580 156h1v1h-1zM580 163h1v1h-1zM580 170h1v1h-1zM580 177h1v1h-1zM580 184h1v1h-1zM580 192h1v1h-1zM580 199h1v1h-1zM580 206h1v1h-1zM580 213h1v1h-1zM580 220h1v1h-1zM580 227h1v1h-1zM580 235h1v1h-1zM580 242h1v1h-1zM580 249h1v1h-1zM580 256h1v1h-1zM580 263h1v1h-1zM580 271h1v1h-1zM580 278h1v1h-1zM580 285h1v1h-1zM580 292h1v1h-1zM580 299h1v1h-1zM580 306h1v1h-1zM580 314h1v1h-1zM580 321h1v1h-1zM580 328h1v1h-1zM580 335h1v1h-1zM580 342h1v1h-1zM580 350h1v1h-1zM580 357h1v1h-1zM580 364h1v1h-1zM580 371h1v1h-1zM580 378h1v1h-1zM580 386h1v1h-1zM580 393h1v1h-1zM580 400h1v1h-1zM580 407h1v1h-1zM580 414h1v1h-1zM580 421h1v1h-1zM580 429h1v1h-1zM580 436h1v1h-1zM580 443h1v1h-1zM580 450h1v1h-1zM580 457h1v1h-1zM580 465h1v1h-1zM580 472h1v1h-1zM580 479h1v1h-1zM580 486h1v1h-1zM580 493h1v1h-1zM580 500h1v1h-1zM580 508h1v1h-1zM580 515h1v1h-1zM580 522h1v1h-1zM580 529h1v1h-1zM580 536h1v1h-1zM580 544h1v1h-1zM580 551h1v1h-1zM580 558h1v1h-1zM586 128h1v1h-1zM586 136h1v1h-1zM586 143h1v1h-1zM586 150h1v1h-1zM586 157h1v1h-1zM586 164h1v1h-1zM586 172h1v1h-1zM586 179h1v1h-1zM586 186h1v1h-1zM586 193h1v1h-1zM586 200h1v1h-1zM586 208h1v1h-1zM586 215h1v1h-1zM586 222h1v1h-1zM586 229h1v1h-1zM586 236h1v1h-1zM586 243h1v1h-1zM586 251h1v1h-1zM586 258h1v1h-1zM586 265h1v1h-1zM586 272h1v1h-1zM586 279h1v1h-1zM586 287h1v1h-1zM586 294h1v1h-1zM586 301h1v1h-1zM586 308h1v1h-1zM586 315h1v1h-1zM586 322h1v1h-1zM586 330h1v1h-1zM586 337h1v1h-1zM586 344h1v1h-1zM586 351h1v1h-1zM586 358h1v1h-1zM586 366h1v1h-1zM586 373h1v1h-1zM586 380h1v1h-1zM586 387h1v1h-1zM586 394h1v1h-1zM586 401h1v1h-1zM586 409h1v1h-1zM586 416h1v1h-1zM586 423h1v1h-1zM586 430h1v1h-1zM586 437h1v1h-1zM586 445h1v1h-1zM586 452h1v1h-1zM586 459h1v1h-1zM586 466h1v1h-1zM586 473h1v1h-1zM586 480h1v1h-1zM586 488h1v1h-1zM586 495h1v1h-1zM586 502h1v1h-1zM586 509h1v1h-1zM586 516h1v1h-1zM586 524h1v1h-1zM586 531h1v1h-1zM586 538h1v1h-1zM586 545h1v1h-1zM586 552h1v1h-1zM586 560h1v1h-1zM592 130h1v1h-1zM592 137h1v1h-1zM592 144h1v1h-1zM592 152h1v1h-1zM592 159h1v1h-1zM592 166h1v1h-1zM592 173h1v1h-1zM592 180h1v1h-1zM592 188h1v1h-1zM592 195h1v1h-1zM592 202h1v1h-1zM592 209h1v1h-1zM592 216h1v1h-1zM592 223h1v1h-1zM592 231h1v1h-1zM592 238h1v1h-1zM592 245h1v1h-1zM592 252h1v1h-1zM592 259h1v1h-1zM592 267h1v1h-1zM592 274h1v1h-1zM592 281h1v1h-1zM592 288h1v1h-1zM592 295h1v1h-1zM592 302h1v1h-1zM592 310h1v1h-1zM592 317h1v1h-1zM592 324h1v1h-1zM592 331h1v1h-1zM592 338h1v1h-1zM592 346h1v1h-1zM592 353h1v1h-1zM592 360h1v1h-1zM592 367h1v1h-1zM592 374h1v1h-1zM592 382h1v1h-1zM592 389h1v1h-1zM592 396h1v1h-1zM592 403h1v1h-1zM592 410h1v1h-1zM592 417h1v1h-1zM592 425h1v1h-1zM592 432h1v1h-1zM592 439h1v1h-1zM592 446h1v1h-1zM592 453h1v1h-1zM592 461h1v1h-1zM592 468h1v1h-1zM592 475h1v1h-1zM592 482h1v1h-1zM592 489h1v1h-1zM592 496h1v1h-1zM592 504h1v1h-1zM592 511h1v1h-1zM592 518h1v1h-1zM592 525h1v1h-1zM592 532h1v1h-1zM592 540h1v1h-1zM592 547h1v1h-1zM592 554h1v1h-1zM592 561h1v1h-1zM598 132h1v1h-1zM598 139h1v1h-1zM598 146h1v1h-1zM598 153h1v1h-1zM598 160h1v1h-1zM598 168h1v1h-1zM598 175h1v1h-1zM598 182h1v1h-1zM598 189h1v1h-1zM598 196h1v1h-1zM598 204h1v1h-1zM598 211h1v1h-1zM598 218h1v1h-1zM598 225h1v1h-1zM598 232h1v1h-1zM598 239h1v1h-1zM598 247h1v1h-1zM598 254h1v1h-1zM598 261h1v1h-1zM598 268h1v1h-1zM598 275h1v1h-1zM598 283h1v1h-1zM598 290h1v1h-1zM598 297h1v1h-1zM598 304h1v1h-1zM598 311h1v1h-1zM598 318h1v1h-1zM598 326h1v1h-1zM598 333h1v1h-1zM598 340h1v1h-1zM598 347h1v1h-1zM598 354h1v1h-1zM598 362h1v1h-1zM598 369h1v1h-1zM598 376h1v1h-1zM598 383h1v1h-1zM598 390h1v1h-1zM598 397h1v1h-1zM598 405h1v1h-1zM598 412h1v1h-1zM598 419h1v1h-1zM598 426h1v1h-1zM598 433h1v1h-1zM598 441h1v1h-1zM598 448h1v1h-1zM598 455h1v1h-1zM598 462h1v1h-1zM598 469h1v1h-1zM598 476h1v1h-1zM598 484h1v1h-1zM598 491h1v1h-1zM598 498h1v1h-1zM598 505h1v1h-1zM598 512h1v1h-1zM598 520h1v1h-1zM598 527h1v1h-1zM598 534h1v1h-1zM598 541h1v1h-1zM598 548h1v1h-1zM598 556h1v1h-1zM598 563h1v1h-1zM604 133h1v1h-1zM604 140h1v1h-1zM604 148h1v1h-1zM604 155h1v1h-1zM604 162h1v1h-1zM604 169h1v1h-1zM604 176h1v1h-1zM604 184h1v1h-1zM604 191h1v1h-1zM604 198h1v1h-1zM604 205h1v1h-1zM604 212h1v1h-1zM604 220h1v1h-1zM604 227h1v1h-1zM604 234h1v1h-1zM604 241h1v1h-1zM604 248h1v1h-1zM604 255h1v1h-1zM604 263h1v1h-1zM604 270h1v1h-1zM604 277h1v1h-1zM604 284h1v1h-1zM604 291h1v1h-1zM604 299h1v1h-1zM604 306h1v1h-1zM604 313h1v1h-1zM604 320h1v1h-1zM604 327h1v1h-1zM604 334h1v1h-1zM604 342h1v1h-1zM604 349h1v1h-1zM604 356h1v1h-1zM604 363h1v1h-1zM604 370h1v1h-1zM604 378h1v1h-1zM604 385h1v1h-1zM604 392h1v1h-1zM604 399h1v1h-1zM604 406h1v1h-1zM604 413h1v1h-1zM604 421h1v1h-1zM604 428h1v1h-1zM604 435h1v1h-1zM604 442h1v1h-1zM604 449h1v1h-1zM604 457h1v1h-1zM604 464h1v1h-1zM604 471h1v1h-1zM604 478h1v1h-1zM604 485h1v1h-1zM604 492h1v1h-1zM604 500h1v1h-1zM604 507h1v1h-1zM604 514h1v1h-1zM604 521h1v1h-1zM604 528h1v1h-1zM604 536h1v1h-1zM604 543h1v1h-1zM604 550h1v1h-1zM604 557h1v1h-1zM604 564h1v1h-1zM610 135h1v1h-1zM610 142h1v1h-1zM610 149h1v1h-1zM610 156h1v1h-1zM610 164h1v1h-1zM610 171h1v1h-1zM610 178h1v1h-1zM610 185h1v1h-1zM610 192h1v1h-1zM610 200h1v1h-1zM610 207h1v1h-1zM610 214h1v1h-1zM610 221h1v1h-1zM610 228h1v1h-1zM610 235h1v1h-1zM610 243h1v1h-1zM610 250h1v1h-1zM610 257h1v1h-1zM610 264h1v1h-1zM610 271h1v1h-1zM610 279h1v1h-1zM610 286h1v1h-1zM610 293h1v1h-1zM610 300h1v1h-1zM610 307h1v1h-1zM610 314h1v1h-1zM610 322h1v1h-1zM610 329h1v1h-1zM610 336h1v1h-1zM610 343h1v1h-1zM610 350h1v1h-1zM610 358h1v1h-1zM610 365h1v1h-1zM610 372h1v1h-1zM610 379h1v1h-1zM610 386h1v1h-1zM610 394h1v1h-1zM610 401h1v1h-1zM610 408h1v1h-1zM610 415h1v1h-1zM610 422h1v1h-1zM610 429h1v1h-1zM610 437h1v1h-1zM610 444h1v1h-1zM610 451h1v1h-1zM610 458h1v1h-1zM610 465h1v1h-1zM610 473h1v1h-1zM610 480h1v1h-1zM610 487h1v1h-1zM610 494h1v1h-1zM610 501h1v1h-1zM610 508h1v1h-1zM610 516h1v1h-1zM610 523h1v1h-1zM610 530h1v1h-1zM610 537h1v1h-1zM610 544h1v1h-1zM610 552h1v1h-1zM610 559h1v1h-1zM610 566h1v1h-1zM616 136h1v1h-1zM616 144h1v1h-1zM616 151h1v1h-1zM616 158h1v1h-1zM616 165h1v1h-1zM616 172h1v1h-1zM616 180h1v1h-1zM616 187h1v1h-1zM616 194h1v1h-1zM616 201h1v1h-1zM616 208h1v1h-1zM616 216h1v1h-1zM616 223h1v1h-1zM616 230h1v1h-1zM616 237h1v1h-1zM616 244h1v1h-1zM616 251h1v1h-1zM616 259h1v1h-1zM616 266h1v1h-1zM616 273h1v1h-1zM616 280h1v1h-1zM616 287h1v1h-1zM616 295h1v1h-1zM616 302h1v1h-1zM616 309h1v1h-1zM616 316h1v1h-1zM616 323h1v1h-1zM616 330h1v1h-1zM616 338h1v1h-1zM616 345h1v1h-1zM616 352h1v1h-1zM616 359h1v1h-1zM616 366h1v1h-1zM616 374h1v1h-1zM616 381h1v1h-1zM616 388h1v1h-1zM616 395h1v1h-1zM616 402h1v1h-1zM616 409h1v1h-1zM616 417h1v1h-1zM616 424h1v1h-1zM616 431h1v1h-1zM616 438h1v1h-1zM616 445h1v1h-1zM616 453h1v1h-1zM616 460h1v1h-1zM616 467h1v1h-1zM616 474h1v1h-1zM616 481h1v1h-1zM616 488h1v1h-1zM616 496h1v1h-1zM616 503h1v1h-1zM616 510h1v1h-1zM616 517h1v1h-1zM616 524h1v1h-1zM616 532h1v1h-1zM616 539h1v1h-1zM616 546h1v1h-1zM616 553h1v1h-1zM616 560h1v1h-1zM616 568h1v1h-1zM622 138h1v1h-1zM622 145h1v1h-1zM622 152h1v1h-1zM622 160h1v1h-1zM622 167h1v1h-1zM622 174h1v1h-1zM622 181h1v1h-1zM622 188h1v1h-1zM622 196h1v1h-1zM622 203h1v1h-1zM622 210h1v1h-1zM622 217h1v1h-1zM622 224h1v1h-1zM622 231h1v1h-1zM622 239h1v1h-1zM622 246h1v1h-1zM622 253h1v1h-1zM622 260h1v1h-1zM622 267h1v1h-1zM622 275h1v1h-1zM622 282h1v1h-1zM622 289h1v1h-1zM622 296h1v1h-1zM622 303h1v1h-1zM622 310h1v1h-1zM622 318h1v1h-1zM622 325h1v1h-1zM622 332h1v1h-1zM622 339h1v1h-1zM622 346h1v1h-1zM622 354h1v1h-1zM622 361h1v1h-1zM622 368h1v1h-1zM622 375h1v1h-1zM622 382h1v1h-1zM622 390h1v1h-1zM622 397h1v1h-1zM622 404h1v1h-1zM622 411h1v1h-1zM622 418h1v1h-1zM622 425h1v1h-1zM622 433h1v1h-1zM622 440h1v1h-1zM622 447h1v1h-1zM622 454h1v1h-1zM622 461h1v1h-1zM622 469h1v1h-1zM622 476h1v1h-1zM622 483h1v1h-1zM622 490h1v1h-1zM622 497h1v1h-1zM622 504h1v1h-1zM622 512h1v1h-1zM622 519h1v1h-1zM622 526h1v1h-1zM622 533h1v1h-1zM622 540h1v1h-1zM622 548h1v1h-1zM622 555h1v1h-1zM622 562h1v1h-1zM622 569h1v1h-1zM628 140h1v1h-1zM628 147h1v1h-1zM628 154h1v1h-1zM628 161h1v1h-1zM628 168h1v1h-1zM628 176h1v1h-1zM628 183h1v1h-1zM628 190h1v1h-1zM628 197h1v1h-1zM628 204h1v1h-1zM628 212h1v1h-1zM628 219h1v1h-1zM628 226h1v1h-1zM628 233h1v1h-1zM628 240h1v1h-1zM628 247h1v1h-1zM628 255h1v1h-1zM628 262h1v1h-1zM628 269h1v1h-1zM628 276h1v1h-1zM628 283h1v1h-1zM628 291h1v1h-1zM628 298h1v1h-1zM628 305h1v1h-1zM628 312h1v1h-1zM628 319h1v1h-1zM628 326h1v1h-1zM628 334h1v1h-1zM628 341h1v1h-1zM628 348h1v1h-1zM628 355h1v1h-1zM628 362h1v1h-1zM628 370h1v1h-1zM628 377h1v1h-1zM628 384h1v1h-1zM628 391h1v1h-1zM628 398h1v1h-1zM628 405h1v1h-1zM628 413h1v1h-1zM628 420h1v1h-1zM628 427h1v1h-1zM628 434h1v1h-1zM628 441h1v1h-1zM628 449h1v1h-1zM628 456h1v1h-1zM628 463h1v1h-1zM628 470h1v1h-1zM628 477h1v1h-1zM628 484h1v1h-1zM628 492h1v1h-1zM628 499h1v1h-1zM628 506h1v1h-1zM628 513h1v1h-1zM628 520h1v1h-1zM628 528h1v1h-1zM628 535h1v1h-1zM628 542h1v1h-1zM628 549h1v1h-1zM628 556h1v1h-1zM628 564h1v1h-1zM628 571h1v1h-1zM634 141h1v1h-1zM634 148h1v1h-1zM634 156h1v1h-1zM634 163h1v1h-1zM634 170h1v1h-1zM634 177h1v1h-1zM634 184h1v1h-1zM634 192h1v1h-1zM634 199h1v1h-1zM634 206h1v1h-1zM634 213h1v1h-1zM634 220h1v1h-1zM634 228h1v1h-1zM634 235h1v1h-1zM634 242h1v1h-1zM634 249h1v1h-1zM634 256h1v1h-1zM634 263h1v1h-1zM634 271h1v1h-1zM634 278h1v1h-1zM634 285h1v1h-1zM634 292h1v1h-1zM634 299h1v1h-1zM634 307h1v1h-1zM634 314h1v1h-1zM634 321h1v1h-1zM634 328h1v1h-1zM634 335h1v1h-1zM634 342h1v1h-1zM634 350h1v1h-1zM634 357h1v1h-1zM634 364h1v1h-1zM634 371h1v1h-1zM634 378h1v1h-1zM634 386h1v1h-1zM634 393h1v1h-1zM634 400h1v1h-1zM634 407h1v1h-1zM634 414h1v1h-1zM634 421h1v1h-1zM634 429h1v1h-1zM634 436h1v1h-1zM634 443h1v1h-1zM634 450h1v1h-1zM634 457h1v1h-1zM634 465h1v1h-1zM634 472h1v1h-1zM634 479h1v1h-1zM634 486h1v1h-1zM634 493h1v1h-1zM634 500h1v1h-1zM634 508h1v1h-1zM634 515h1v1h-1zM634 522h1v1h-1zM634 529h1v1h-1zM634 536h1v1h-1zM634 544h1v1h-1zM634 551h1v1h-1zM634 558h1v1h-1zM634 565h1v1h-1zM634 572h1v1h-1zM640 143h1v1h-1zM640 150h1v1h-1zM640 157h1v1h-1zM640 164h1v1h-1zM640 172h1v1h-1zM640 179h1v1h-1zM640 186h1v1h-1zM640 193h1v1h-1zM640 200h1v1h-1zM640 208h1v1h-1zM640 215h1v1h-1zM640 222h1v1h-1zM640 229h1v1h-1zM640 236h1v1h-1zM640 243h1v1h-1zM640 251h1v1h-1zM640 258h1v1h-1zM640 265h1v1h-1zM640 272h1v1h-1zM640 279h1v1h-1zM640 287h1v1h-1zM640 294h1v1h-1zM640 301h1v1h-1zM640 308h1v1h-1zM640 315h1v1h-1zM640 322h1v1h-1zM640 330h1v1h-1zM640 337h1v1h-1zM640 344h1v1h-1zM640 351h1v1h-1zM640 358h1v1h-1zM640 366h1v1h-1zM640 373h1v1h-1zM640 380h1v1h-1zM640 387h1v1h-1zM640 394h1v1h-1zM640 402h1v1h-1zM640 409h1v1h-1zM640 416h1v1h-1zM640 423h1v1h-1zM640 430h1v1h-1zM640 437h1v1h-1zM640 445h1v1h-1zM640 452h1v1h-1zM640 459h1v1h-1zM640 466h1v1h-1zM640 473h1v1h-1zM640 481h1v1h-1zM640 488h1v1h-1zM640 495h1v1h-1zM640 502h1v1h-1zM640 509h1v1h-1zM640 516h1v1h-1zM640 524h1v1h-1zM640 531h1v1h-1zM640 538h1v1h-1zM640 545h1v1h-1zM640 552h1v1h-1zM640 560h1v1h-1zM640 567h1v1h-1zM640 574h1v1h-1zM646 144h1v1h-1zM646 152h1v1h-1zM646 159h1v1h-1zM646 166h1v1h-1zM646 173h1v1h-1zM646 180h1v1h-1zM646 188h1v1h-1zM646 195h1v1h-1zM646 202h1v1h-1zM646 209h1v1h-1zM646 216h1v1h-1zM646 224h1v1h-1zM646 231h1v1h-1zM646 238h1v1h-1zM646 245h1v1h-1zM646 252h1v1h-1zM646 259h1v1h-1zM646 267h1v1h-1zM646 274h1v1h-1zM646 281h1v1h-1zM646 288h1v1h-1zM646 295h1v1h-1zM646 303h1v1h-1zM646 310h1v1h-1zM646 317h1v1h-1zM646 324h1v1h-1zM646 331h1v1h-1zM646 338h1v1h-1zM646 346h1v1h-1zM646 353h1v1h-1zM646 360h1v1h-1zM646 367h1v1h-1zM646 374h1v1h-1zM646 382h1v1h-1zM646 389h1v1h-1zM646 396h1v1h-1zM646 403h1v1h-1zM646 410h1v1h-1zM646 417h1v1h-1zM646 425h1v1h-1zM646 432h1v1h-1zM646 439h1v1h-1zM646 446h1v1h-1zM646 453h1v1h-1zM646 461h1v1h-1zM646 468h1v1h-1zM646 475h1v1h-1zM646 482h1v1h-1zM646 489h1v1h-1zM646 496h1v1h-1zM646 504h1v1h-1zM646 511h1v1h-1zM646 518h1v1h-1zM646 525h1v1h-1zM646 532h1v1h-1zM646 540h1v1h-1zM646 547h1v1h-1zM646 554h1v1h-1zM646 561h1v1h-1zM646 568h1v1h-1zM646 576h1v1h-1zM652 146h1v1h-1zM652 153h1v1h-1zM652 160h1v1h-1zM652 168h1v1h-1zM652 175h1v1h-1zM652 182h1v1h-1zM652 189h1v1h-1zM652 196h1v1h-1zM652 204h1v1h-1zM652 211h1v1h-1zM652 218h1v1h-1zM652 225h1v1h-1zM652 232h1v1h-1zM652 239h1v1h-1zM652 247h1v1h-1zM652 254h1v1h-1zM652 261h1v1h-1zM652 268h1v1h-1zM652 275h1v1h-1zM652 283h1v1h-1zM652 290h1v1h-1zM652 297h1v1h-1zM652 304h1v1h-1zM652 311h1v1h-1zM652 318h1v1h-1zM652 326h1v1h-1zM652 333h1v1h-1zM652 340h1v1h-1zM652 347h1v1h-1zM652 354h1v1h-1zM652 362h1v1h-1zM652 369h1v1h-1zM652 376h1v1h-1zM652 383h1v1h-1zM652 390h1v1h-1zM652 398h1v1h-1zM652 405h1v1h-1zM652 412h1v1h-1zM652 419h1v1h-1zM652 426h1v1h-1zM652 433h1v1h-1zM652 441h1v1h-1zM652 448h1v1h-1zM652 455h1v1h-1zM652 462h1v1h-1zM652 469h1v1h-1zM652 477h1v1h-1zM652 484h1v1h-1zM652 491h1v1h-1zM652 498h1v1h-1zM652 505h1v1h-1zM652 512h1v1h-1zM652 520h1v1h-1zM652 527h1v1h-1zM652 534h1v1h-1zM652 541h1v1h-1zM652 548h1v1h-1zM652 556h1v1h-1zM652 563h1v1h-1zM652 570h1v1h-1zM652 577h1v1h-1zM658 148h1v1h-1zM658 155h1v1h-1zM658 162h1v1h-1zM658 169h1v1h-1zM658 176h1v1h-1zM658 184h1v1h-1zM658 191h1v1h-1zM658 198h1v1h-1zM658 205h1v1h-1zM658 212h1v1h-1zM658 220h1v1h-1zM658 227h1v1h-1zM658 234h1v1h-1zM658 241h1v1h-1zM658 248h1v1h-1zM658 255h1v1h-1zM658 263h1v1h-1zM658 270h1v1h-1zM658 277h1v1h-1zM658 284h1v1h-1zM658 291h1v1h-1zM658 299h1v1h-1zM658 306h1v1h-1zM658 313h1v1h-1zM658 320h1v1h-1zM658 327h1v1h-1zM658 334h1v1h-1zM658 342h1v1h-1zM658 349h1v1h-1zM658 356h1v1h-1zM658 363h1v1h-1zM658 370h1v1h-1zM658 378h1v1h-1zM658 385h1v1h-1zM658 392h1v1h-1zM658 399h1v1h-1zM658 406h1v1h-1zM658 413h1v1h-1zM658 421h1v1h-1zM658 428h1v1h-1zM658 435h1v1h-1zM658 442h1v1h-1zM658 449h1v1h-1zM658 457h1v1h-1zM658 464h1v1h-1zM658 471h1v1h-1zM658 478h1v1h-1zM658 485h1v1h-1zM658 492h1v1h-1zM658 500h1v1h-1zM658 507h1v1h-1zM658 514h1v1h-1zM658 521h1v1h-1zM658 528h1v1h-1zM658 536h1v1h-1zM658 543h1v1h-1zM658 550h1v1h-1zM658 557h1v1h-1zM658 564h1v1h-1zM658 572h1v1h-1zM658 579h1v1h-1zM664 149h1v1h-1zM664 156h1v1h-1zM664 164h1v1h-1zM664 171h1v1h-1zM664 178h1v1h-1zM664 185h1v1h-1zM664 192h1v1h-1zM664 200h1v1h-1zM664 207h1v1h-1zM664 214h1v1h-1zM664 221h1v1h-1zM664 228h1v1h-1zM664 236h1v1h-1zM664 243h1v1h-1zM664 250h1v1h-1zM664 257h1v1h-1zM664 264h1v1h-1zM664 271h1v1h-1zM664 279h1v1h-1zM664 286h1v1h-1zM664 293h1v1h-1zM664 300h1v1h-1zM664 307h1v1h-1zM664 315h1v1h-1zM664 322h1v1h-1zM664 329h1v1h-1zM664 336h1v1h-1zM664 343h1v1h-1zM664 350h1v1h-1zM664 358h1v1h-1zM664 365h1v1h-1zM664 372h1v1h-1zM664 379h1v1h-1zM664 386h1v1h-1zM664 394h1v1h-1zM664 401h1v1h-1zM664 408h1v1h-1zM664 415h1v1h-1zM664 422h1v1h-1zM664 429h1v1h-1zM664 437h1v1h-1zM664 444h1v1h-1zM664 451h1v1h-1zM664 458h1v1h-1zM664 465h1v1h-1zM664 473h1v1h-1zM664 480h1v1h-1zM664 487h1v1h-1zM664 494h1v1h-1zM664 501h1v1h-1zM664 508h1v1h-1zM664 516h1v1h-1zM664 523h1v1h-1zM664 530h1v1h-1zM664 537h1v1h-1zM664 544h1v1h-1zM664 552h1v1h-1zM664 559h1v1h-1zM664 566h1v1h-1zM664 573h1v1h-1zM664 580h1v1h-1zM670 151h1v1h-1zM670 158h1v1h-1zM670 165h1v1h-1zM670 172h1v1h-1zM670 180h1v1h-1zM670 187h1v1h-1zM670 194h1v1h-1zM670 201h1v1h-1zM670 208h1v1h-1zM670 216h1v1h-1zM670 223h1v1h-1zM670 230h1v1h-1zM670 237h1v1h-1zM670 244h1v1h-1zM670 251h1v1h-1zM670 259h1v1h-1zM670 266h1v1h-1zM670 273h1v1h-1zM670 280h1v1h-1zM670 287h1v1h-1zM670 295h1v1h-1zM670 302h1v1h-1zM670 309h1v1h-1zM670 316h1v1h-1zM670 323h1v1h-1zM670 330h1v1h-1zM670 338h1v1h-1zM670 345h1v1h-1zM670 352h1v1h-1zM670 359h1v1h-1zM670 366h1v1h-1zM670 374h1v1h-1zM670 381h1v1h-1zM670 388h1v1h-1zM670 395h1v1h-1zM670 402h1v1h-1zM670 410h1v1h-1zM670 417h1v1h-1zM670 424h1v1h-1zM670 431h1v1h-1zM670 438h1v1h-1zM670 445h1v1h-1zM670 453h1v1h-1zM670 460h1v1h-1zM670 467h1v1h-1zM670 474h1v1h-1zM670 481h1v1h-1zM670 489h1v1h-1zM670 496h1v1h-1zM670 503h1v1h-1zM670 510h1v1h-1zM670 517h1v1h-1zM670 524h1v1h-1zM670 532h1v1h-1zM670 539h1v1h-1zM670 546h1v1h-1zM670 553h1v1h-1zM670 560h1v1h-1zM670 568h1v1h-1zM670 575h1v1h-1zM670 582h1v1h-1zM676 152h1v1h-1zM676 160h1v1h-1zM676 167h1v1h-1zM676 174h1v1h-1zM676 181h1v1h-1zM676 188h1v1h-1zM676 196h1v1h-1zM676 203h1v1h-1zM676 210h1v1h-1zM676 217h1v1h-1zM676 224h1v1h-1zM676 232h1v1h-1zM676 239h1v1h-1zM676 246h1v1h-1zM676 253h1v1h-1zM676 260h1v1h-1zM676 267h1v1h-1zM676 275h1v1h-1zM676 282h1v1h-1zM676 289h1v1h-1zM676 296h1v1h-1zM676 303h1v1h-1zM676 311h1v1h-1zM676 318h1v1h-1zM676 325h1v1h-1zM676 332h1v1h-1zM676 339h1v1h-1zM676 346h1v1h-1zM676 354h1v1h-1zM676 361h1v1h-1zM676 368h1v1h-1zM676 375h1v1h-1zM676 382h1v1h-1zM676 390h1v1h-1zM676 397h1v1h-1zM676 404h1v1h-1zM676 411h1v1h-1zM676 418h1v1h-1zM676 425h1v1h-1zM676 433h1v1h-1zM676 440h1v1h-1zM676 447h1v1h-1zM676 454h1v1h-1zM676 461h1v1h-1zM676 469h1v1h-1zM676 476h1v1h-1zM676 483h1v1h-1zM676 490h1v1h-1zM676 497h1v1h-1zM676 504h1v1h-1zM676 512h1v1h-1zM676 519h1v1h-1zM676 526h1v1h-1zM676 533h1v1h-1zM676 540h1v1h-1zM676 548h1v1h-1zM676 555h1v1h-1zM676 562h1v1h-1zM676 569h1v1h-1zM676 576h1v1h-1zM676 584h1v1h-1zM682 154h1v1h-1zM682 161h1v1h-1zM682 168h1v1h-1zM682 176h1v1h-1zM682 183h1v1h-1zM682 190h1v1h-1zM682 197h1v1h-1zM682 204h1v1h-1zM682 212h1v1h-1zM682 219h1v1h-1zM682 226h1v1h-1zM682 233h1v1h-1zM682 240h1v1h-1zM682 247h1v1h-1zM682 255h1v1h-1zM682 262h1v1h-1zM682 269h1v1h-1zM682 276h1v1h-1zM682 283h1v1h-1zM682 291h1v1h-1zM682 298h1v1h-1zM682 305h1v1h-1zM682 312h1v1h-1zM682 319h1v1h-1zM682 326h1v1h-1zM682 334h1v1h-1zM682 341h1v1h-1zM682 348h1v1h-1zM682 355h1v1h-1zM682 362h1v1h-1zM682 370h1v1h-1zM682 377h1v1h-1zM682 384h1v1h-1zM682 391h1v1h-1zM682 398h1v1h-1zM682 406h1v1h-1zM682 413h1v1h-1zM682 420h1v1h-1zM682 427h1v1h-1zM682 434h1v1h-1zM682 441h1v1h-1zM682 449h1v1h-1zM682 456h1v1h-1zM682 463h1v1h-1zM682 470h1v1h-1zM682 477h1v1h-1zM682 485h1v1h-1zM682 492h1v1h-1zM682 499h1v1h-1zM682 506h1v1h-1zM682 513h1v1h-1zM682 520h1v1h-1zM682 528h1v1h-1zM682 535h1v1h-1zM682 542h1v1h-1zM682 549h1v1h-1zM682 556h1v1h-1zM682 564h1v1h-1zM682 571h1v1h-1zM682 578h1v1h-1zM682 585h1v1h-1zM688 156h1v1h-1zM688 163h1v1h-1zM688 170h1v1h-1zM688 177h1v1h-1zM688 184h1v1h-1zM688 192h1v1h-1zM688 199h1v1h-1zM688 206h1v1h-1zM688 213h1v1h-1zM688 220h1v1h-1zM688 228h1v1h-1zM688 235h1v1h-1zM688 242h1v1h-1zM688 249h1v1h-1zM688 256h1v1h-1zM688 263h1v1h-1zM688 271h1v1h-1zM688 278h1v1h-1zM688 285h1v1h-1zM688 292h1v1h-1zM688 299h1v1h-1zM688 307h1v1h-1zM688 314h1v1h-1zM688 321h1v1h-1zM688 328h1v1h-1zM688 335h1v1h-1zM688 342h1v1h-1zM688 350h1v1h-1zM688 357h1v1h-1zM688 364h1v1h-1zM688 371h1v1h-1zM688 378h1v1h-1zM688 386h1v1h-1zM688 393h1v1h-1zM688 400h1v1h-1zM688 407h1v1h-1zM688 414h1v1h-1zM688 421h1v1h-1zM688 429h1v1h-1zM688 436h1v1h-1zM688 443h1v1h-1zM688 450h1v1h-1zM688 457h1v1h-1zM688 465h1v1h-1zM688 472h1v1h-1zM688 479h1v1h-1zM688 486h1v1h-1zM688 493h1v1h-1zM688 500h1v1h-1zM688 508h1v1h-1zM688 515h1v1h-1zM688 522h1v1h-1zM688 529h1v1h-1zM688 536h1v1h-1zM688 544h1v1h-1zM688 551h1v1h-1zM688 558h1v1h-1zM688 565h1v1h-1zM688 572h1v1h-1zM688 580h1v1h-1zM688 587h1v1h-1zM694 157h1v1h-1zM694 164h1v1h-1zM694 172h1v1h-1zM694 179h1v1h-1zM694 186h1v1h-1zM694 193h1v1h-1zM694 200h1v1h-1zM694 208h1v1h-1zM694 215h1v1h-1zM694 222h1v1h-1zM694 229h1v1h-1zM694 236h1v1h-1zM694 244h1v1h-1zM694 251h1v1h-1zM694 258h1v1h-1zM694 265h1v1h-1zM694 272h1v1h-1zM694 279h1v1h-1zM694 287h1v1h-1zM694 294h1v1h-1zM694 301h1v1h-1zM694 308h1v1h-1zM694 315h1v1h-1zM694 323h1v1h-1zM694 330h1v1h-1zM694 337h1v1h-1zM694 344h1v1h-1zM694 351h1v1h-1zM694 358h1v1h-1zM694 366h1v1h-1zM694 373h1v1h-1zM694 380h1v1h-1zM694 387h1v1h-1zM694 394h1v1h-1zM694 402h1v1h-1zM694 409h1v1h-1zM694 416h1v1h-1zM694 423h1v1h-1zM694 430h1v1h-1zM694 437h1v1h-1zM694 445h1v1h-1zM694 452h1v1h-1zM694 459h1v1h-1zM694 466h1v1h-1zM694 473h1v1h-1zM694 481h1v1h-1zM694 488h1v1h-1zM694 495h1v1h-1zM694 502h1v1h-1zM694 509h1v1h-1zM694 516h1v1h-1zM694 524h1v1h-1zM694 531h1v1h-1zM694 538h1v1h-1zM694 545h1v1h-1zM694 552h1v1h-1zM694 560h1v1h-1zM694 567h1v1h-1zM694 574h1v1h-1zM694 581h1v1h-1zM694 588h1v1h-1zM700 159h1v1h-1zM700 166h1v1h-1zM700 173h1v1h-1zM700 180h1v1h-1zM700 188h1v1h-1zM700 195h1v1h-1zM700 202h1v1h-1zM700 209h1v1h-1zM700 216h1v1h-1zM700 224h1v1h-1zM700 231h1v1h-1zM700 238h1v1h-1zM700 245h1v1h-1zM700 252h1v1h-1zM700 259h1v1h-1zM700 267h1v1h-1zM700 274h1v1h-1zM700 281h1v1h-1zM700 288h1v1h-1zM700 295h1v1h-1zM700 303h1v1h-1zM700 310h1v1h-1zM700 317h1v1h-1zM700 324h1v1h-1zM700 331h1v1h-1zM700 338h1v1h-1zM700 346h1v1h-1zM700 353h1v1h-1zM700 360h1v1h-1zM700 367h1v1h-1zM700 374h1v1h-1zM700 382h1v1h-1zM700 389h1v1h-1zM700 396h1v1h-1zM700 403h1v1h-1zM700 410h1v1h-1zM700 418h1v1h-1zM700 425h1v1h-1zM700 432h1v1h-1zM700 439h1v1h-1zM700 446h1v1h-1zM700 453h1v1h-1zM700 461h1v1h-1zM700 468h1v1h-1zM700 475h1v1h-1zM700 482h1v1h-1zM700 489h1v1h-1zM700 497h1v1h-1zM700 504h1v1h-1zM700 511h1v1h-1zM700 518h1v1h-1zM700 525h1v1h-1zM700 532h1v1h-1zM700 540h1v1h-1zM700 547h1v1h-1zM700 554h1v1h-1zM700 561h1v1h-1zM700 568h1v1h-1zM700 576h1v1h-1zM700 583h1v1h-1zM700 590h1v1h-1zM706 160h1v1h-1zM706 168h1v1h-1zM706 175h1v1h-1zM706 182h1v1h-1zM706 189h1v1h-1zM706 196h1v1h-1zM706 204h1v1h-1zM706 211h1v1h-1zM706 218h1v1h-1zM706 225h1v1h-1zM706 232h1v1h-1zM706 240h1v1h-1zM706 247h1v1h-1zM706 254h1v1h-1zM706 261h1v1h-1zM706 268h1v1h-1zM706 275h1v1h-1zM706 283h1v1h-1zM706 290h1v1h-1zM706 297h1v1h-1zM706 304h1v1h-1zM706 311h1v1h-1zM706 319h1v1h-1zM706 326h1v1h-1zM706 333h1v1h-1zM706 340h1v1h-1zM706 347h1v1h-1zM706 354h1v1h-1zM706 362h1v1h-1zM706 369h1v1h-1zM706 376h1v1h-1zM706 383h1v1h-1zM706 390h1v1h-1zM706 398h1v1h-1zM706 405h1v1h-1zM706 412h1v1h-1zM706 419h1v1h-1zM706 426h1v1h-1zM706 433h1v1h-1zM706 441h1v1h-1zM706 448h1v1h-1zM706 455h1v1h-1zM706 462h1v1h-1zM706 469h1v1h-1zM706 477h1v1h-1zM706 484h1v1h-1zM706 491h1v1h-1zM706 498h1v1h-1zM706 505h1v1h-1zM706 512h1v1h-1zM706 520h1v1h-1zM706 527h1v1h-1zM706 534h1v1h-1zM706 541h1v1h-1zM706 548h1v1h-1zM706 556h1v1h-1zM706 563h1v1h-1zM706 570h1v1h-1zM706 577h1v1h-1zM706 584h1v1h-1zM706 592h1v1h-1zM712 162h1v1h-1zM712 169h1v1h-1zM712 176h1v1h-1zM712 184h1v1h-1zM712 191h1v1h-1zM712 198h1v1h-1zM712 205h1v1h-1zM712 212h1v1h-1zM712 220h1v1h-1zM712 227h1v1h-1zM712 234h1v1h-1zM712 241h1v1h-1zM712 248h1v1h-1zM712 255h1v1h-1zM712 263h1v1h-1zM712 270h1v1h-1zM712 277h1v1h-1zM712 284h1v1h-1zM712 291h1v1h-1zM712 299h1v1h-1zM712 306h1v1h-1zM712 313h1v1h-1zM712 320h1v1h-1zM712 327h1v1h-1zM712 334h1v1h-1zM712 342h1v1h-1zM712 349h1v1h-1zM712 356h1v1h-1zM712 363h1v1h-1zM712 370h1v1h-1zM712 378h1v1h-1zM712 385h1v1h-1zM712 392h1v1h-1zM712 399h1v1h-1zM712 406h1v1h-1zM712 414h1v1h-1zM712 421h1v1h-1zM712 428h1v1h-1zM712 435h1v1h-1zM712 442h1v1h-1zM712 449h1v1h-1zM712 457h1v1h-1zM712 464h1v1h-1zM712 471h1v1h-1zM712 478h1v1h-1zM712 485h1v1h-1zM712 493h1v1h-1zM712 500h1v1h-1zM712 507h1v1h-1zM712 514h1v1h-1zM712 521h1v1h-1zM712 528h1v1h-1zM712 536h1v1h-1zM712 543h1v1h-1zM712 550h1v1h-1zM712 557h1v1h-1zM712 564h1v1h-1zM712 572h1v1h-1zM712 579h1v1h-1zM712 586h1v1h-1zM712 593h1v1h-1zM718 164h1v1h-1zM718 171h1v1h-1zM718 178h1v1h-1zM718 185h1v1h-1zM718 192h1v1h-1zM718 200h1v1h-1zM718 207h1v1h-1zM718 214h1v1h-1zM718 221h1v1h-1zM718 228h1v1h-1zM718 236h1v1h-1zM718 243h1v1h-1zM718 250h1v1h-1zM718 257h1v1h-1zM718 264h1v1h-1zM718 271h1v1h-1zM718 279h1v1h-1zM718 286h1v1h-1zM718 293h1v1h-1zM718 300h1v1h-1zM718 307h1v1h-1zM718 315h1v1h-1zM718 322h1v1h-1zM718 329h1v1h-1zM718 336h1v1h-1zM718 343h1v1h-1zM718 350h1v1h-1zM718 358h1v1h-1zM718 365h1v1h-1zM718 372h1v1h-1zM718 379h1v1h-1zM718 386h1v1h-1zM718 394h1v1h-1zM718 401h1v1h-1zM718 408h1v1h-1zM718 415h1v1h-1zM718 422h1v1h-1zM718 429h1v1h-1zM718 437h1v1h-1zM718 444h1v1h-1zM718 451h1v1h-1zM718 458h1v1h-1zM718 465h1v1h-1zM718 473h1v1h-1zM718 480h1v1h-1zM718 487h1v1h-1zM718 494h1v1h-1zM718 501h1v1h-1zM718 508h1v1h-1zM718 516h1v1h-1zM718 523h1v1h-1zM718 530h1v1h-1zM718 537h1v1h-1zM718 544h1v1h-1zM718 552h1v1h-1zM718 559h1v1h-1zM718 566h1v1h-1zM718 573h1v1h-1zM718 580h1v1h-1zM718 588h1v1h-1zM718 595h1v1h-1zM724 165h1v1h-1zM724 172h1v1h-1zM724 180h1v1h-1zM724 187h1v1h-1zM724 194h1v1h-1zM724 201h1v1h-1zM724 208h1v1h-1zM724 216h1v1h-1zM724 223h1v1h-1zM724 230h1v1h-1zM724 237h1v1h-1zM724 244h1v1h-1zM724 252h1v1h-1zM724 259h1v1h-1zM724 266h1v1h-1zM724 273h1v1h-1zM724 280h1v1h-1zM724 287h1v1h-1zM724 295h1v1h-1zM724 302h1v1h-1zM724 309h1v1h-1zM724 316h1v1h-1zM724 323h1v1h-1zM724 331h1v1h-1zM724 338h1v1h-1zM724 345h1v1h-1zM724 352h1v1h-1zM724 359h1v1h-1zM724 366h1v1h-1zM724 374h1v1h-1zM724 381h1v1h-1zM724 388h1v1h-1zM724 395h1v1h-1zM724 402h1v1h-1zM724 410h1v1h-1zM724 417h1v1h-1zM724 424h1v1h-1zM724 431h1v1h-1zM724 438h1v1h-1zM724 445h1v1h-1zM724 453h1v1h-1zM724 460h1v1h-1zM724 467h1v1h-1zM724 474h1v1h-1zM724 481h1v1h-1zM724 489h1v1h-1zM724 496h1v1h-1zM724 503h1v1h-1zM724 510h1v1h-1zM724 517h1v1h-1zM724 524h1v1h-1zM724 532h1v1h-1zM724 539h1v1h-1zM724 546h1v1h-1zM724 553h1v1h-1zM724 560h1v1h-1zM724 568h1v1h-1zM724 575h1v1h-1zM724 582h1v1h-1zM724 589h1v1h-1zM724 596h1v1h-1zM730 167h1v1h-1zM730 174h1v1h-1zM730 181h1v1h-1zM730 188h1v1h-1zM730 196h1v1h-1zM730 203h1v1h-1zM730 210h1v1h-1zM730 217h1v1h-1zM730 224h1v1h-1zM730 232h1v1h-1zM730 239h1v1h-1zM730 246h1v1h-1zM730 253h1v1h-1zM730 260h1v1h-1zM730 267h1v1h-1zM730 275h1v1h-1zM730 282h1v1h-1zM730 289h1v1h-1zM730 296h1v1h-1zM730 303h1v1h-1zM730 311h1v1h-1zM730 318h1v1h-1zM730 325h1v1h-1zM730 332h1v1h-1zM730 339h1v1h-1zM730 346h1v1h-1zM730 354h1v1h-1zM730 361h1v1h-1zM730 368h1v1h-1zM730 375h1v1h-1zM730 382h1v1h-1zM730 390h1v1h-1zM730 397h1v1h-1zM730 404h1v1h-1zM730 411h1v1h-1zM730 418h1v1h-1zM730 426h1v1h-1zM730 433h1v1h-1zM730 440h1v1h-1zM730 447h1v1h-1zM730 454h1v1h-1zM730 461h1v1h-1zM730 469h1v1h-1zM730 476h1v1h-1zM730 483h1v1h-1zM730 490h1v1h-1zM730 497h1v1h-1zM730 505h1v1h-1zM730 512h1v1h-1zM730 519h1v1h-1zM730 526h1v1h-1zM730 533h1v1h-1zM730 540h1v1h-1zM730 548h1v1h-1zM730 555h1v1h-1zM730 562h1v1h-1zM730 569h1v1h-1zM730 576h1v1h-1zM730 584h1v1h-1zM730 591h1v1h-1zM730 598h1v1h-1zM736 168h1v1h-1zM736 176h1v1h-1zM736 183h1v1h-1zM736 190h1v1h-1zM736 197h1v1h-1zM736 204h1v1h-1zM736 212h1v1h-1zM736 219h1v1h-1zM736 226h1v1h-1zM736 233h1v1h-1zM736 240h1v1h-1zM736 248h1v1h-1zM736 255h1v1h-1zM736 262h1v1h-1zM736 269h1v1h-1zM736 276h1v1h-1zM736 283h1v1h-1zM736 291h1v1h-1zM736 298h1v1h-1zM736 305h1v1h-1zM736 312h1v1h-1zM736 319h1v1h-1zM736 327h1v1h-1zM736 334h1v1h-1zM736 341h1v1h-1zM736 348h1v1h-1zM736 355h1v1h-1zM736 362h1v1h-1zM736 370h1v1h-1zM736 377h1v1h-1zM736 384h1v1h-1zM736 391h1v1h-1zM736 398h1v1h-1zM736 406h1v1h-1zM736 413h1v1h-1zM736 420h1v1h-1zM736 427h1v1h-1zM736 434h1v1h-1zM736 441h1v1h-1zM736 449h1v1h-1zM736 456h1v1h-1zM736 463h1v1h-1zM736 470h1v1h-1zM736 477h1v1h-1zM736 485h1v1h-1zM736 492h1v1h-1zM736 499h1v1h-1zM736 506h1v1h-1zM736 513h1v1h-1zM736 520h1v1h-1zM736 528h1v1h-1zM736 535h1v1h-1zM736 542h1v1h-1zM736 549h1v1h-1zM736 556h1v1h-1zM736 564h1v1h-1zM736 571h1v1h-1zM736 578h1v1h-1zM736 585h1v1h-1zM736 592h1v1h-1zM736 600h1v1h-1zM742 170h1v1h-1zM742 177h1v1h-1zM742 184h1v1h-1zM742 192h1v1h-1zM742 199h1v1h-1zM742 206h1v1h-1zM742 213h1v1h-1zM742 220h1v1h-1zM742 228h1v1h-1zM742 235h1v1h-1zM742 242h1v1h-1zM742 249h1v1h-1zM742 256h1v1h-1zM742 263h1v1h-1zM742 271h1v1h-1zM742 278h1v1h-1zM742 285h1v1h-1zM742 292h1v1h-1zM742 299h1v1h-1zM742 307h1v1h-1zM742 314h1v1h-1zM742 321h1v1h-1zM742 328h1v1h-1zM742 335h1v1h-1zM742 342h1v1h-1zM742 350h1v1h-1zM742 357h1v1h-1zM742 364h1v1h-1zM742 371h1v1h-1zM742 378h1v1h-1zM742 386h1v1h-1zM742 393h1v1h-1zM742 400h1v1h-1zM742 407h1v1h-1zM742 414h1v1h-1zM742 422h1v1h-1zM742 429h1v1h-1zM742 436h1v1h-1zM742 443h1v1h-1zM742 450h1v1h-1zM742 457h1v1h-1zM742 465h1v1h-1zM742 472h1v1h-1zM742 479h1v1h-1zM742 486h1v1h-1zM742 493h1v1h-1zM742 501h1v1h-1zM742 508h1v1h-1zM742 515h1v1h-1zM742 522h1v1h-1zM742 529h1v1h-1zM742 536h1v1h-1zM742 544h1v1h-1zM742 551h1v1h-1zM742 558h1v1h-1zM742 565h1v1h-1zM742 572h1v1h-1zM742 580h1v1h-1zM742 587h1v1h-1zM742 594h1v1h-1zM742 601h1v1h-1zM748 172h1v1h-1zM748 179h1v1h-1zM748 186h1v1h-1zM748 193h1v1h-1zM748 200h1v1h-1zM748 208h1v1h-1zM748 215h1v1h-1zM748 222h1v1h-1zM748 229h1v1h-1zM748 236h1v1h-1zM748 244h1v1h-1zM748 251h1v1h-1zM748 258h1v1h-1zM748 265h1v1h-1zM748 272h1v1h-1zM748 279h1v1h-1zM748 287h1v1h-1zM748 294h1v1h-1zM748 301h1v1h-1zM748 308h1v1h-1zM748 315h1v1h-1zM748 323h1v1h-1zM748 330h1v1h-1zM748 337h1v1h-1zM748 344h1v1h-1zM748 351h1v1h-1zM748 358h1v1h-1zM748 366h1v1h-1zM748 373h1v1h-1zM748 380h1v1h-1zM748 387h1v1h-1zM748 394h1v1h-1zM748 402h1v1h-1zM748 409h1v1h-1zM748 416h1v1h-1zM748 423h1v1h-1zM748 430h1v1h-1zM748 437h1v1h-1zM748 445h1v1h-1zM748 452h1v1h-1zM748 459h1v1h-1zM748 466h1v1h-1zM748 473h1v1h-1zM748 481h1v1h-1zM748 488h1v1h-1zM748 495h1v1h-1zM748 502h1v1h-1zM748 509h1v1h-1zM748 516h1v1h-1zM748 524h1v1h-1zM748 531h1v1h-1zM748 538h1v1h-1zM748 545h1v1h-1zM748 552h1v1h-1zM748 560h1v1h-1zM748 567h1v1h-1zM748 574h1v1h-1zM748 581h1v1h-1zM748 588h1v1h-1zM748 596h1v1h-1zM748 603h1v1h-1zM754 173h1v1h-1zM754 180h1v1h-1zM754 188h1v1h-1zM754 195h1v1h-1zM754 202h1v1h-1zM754 209h1v1h-1zM754 216h1v1h-1zM754 224h1v1h-1zM754 231h1v1h-1zM754 238h1v1h-1zM754 245h1v1h-1zM754 252h1v1h-1zM754 260h1v1h-1zM754 267h1v1h-1zM754 274h1v1h-1zM754 281h1v1h-1zM754 288h1v1h-1zM754 295h1v1h-1zM754 303h1v1h-1zM754 310h1v1h-1zM754 317h1v1h-1zM754 324h1v1h-1zM754 331h1v1h-1zM754 339h1v1h-1zM754 346h1v1h-1zM754 353h1v1h-1zM754 360h1v1h-1zM754 367h1v1h-1zM754 374h1v1h-1zM754 382h1v1h-1zM754 389h1v1h-1zM754 396h1v1h-1zM754 403h1v1h-1zM754 410h1v1h-1zM754 418h1v1h-1zM754 425h1v1h-1zM754 432h1v1h-1zM754 439h1v1h-1zM754 446h1v1h-1zM754 453h1v1h-1zM754 461h1v1h-1zM754 468h1v1h-1zM754 475h1v1h-1zM754 482h1v1h-1zM754 489h1v1h-1zM754 497h1v1h-1zM754 504h1v1h-1zM754 511h1v1h-1zM754 518h1v1h-1zM754 525h1v1h-1zM754 532h1v1h-1zM754 540h1v1h-1zM754 547h1v1h-1zM754 554h1v1h-1zM754 561h1v1h-1zM754 568h1v1h-1zM754 576h1v1h-1zM754 583h1v1h-1zM754 590h1v1h-1zM754 597h1v1h-1zM754 604h1v1h-1zM759 175h1v1h-1zM759 182h1v1h-1zM759 189h1v1h-1zM759 196h1v1h-1zM759 204h1v1h-1zM759 211h1v1h-1zM759 218h1v1h-1zM759 225h1v1h-1zM759 232h1v1h-1zM759 240h1v1h-1zM759 247h1v1h-1zM759 254h1v1h-1zM759 261h1v1h-1zM759 268h1v1h-1zM759 275h1v1h-1zM759 283h1v1h-1zM759 290h1v1h-1zM759 297h1v1h-1zM759 304h1v1h-1zM759 311h1v1h-1zM759 319h1v1h-1zM759 326h1v1h-1zM759 333h1v1h-1zM759 340h1v1h-1zM759 347h1v1h-1zM759 354h1v1h-1zM759 362h1v1h-1zM759 369h1v1h-1zM759 376h1v1h-1zM759 383h1v1h-1zM759 390h1v1h-1zM759 398h1v1h-1zM759 405h1v1h-1zM759 412h1v1h-1zM759 419h1v1h-1zM759 426h1v1h-1zM759 434h1v1h-1zM759 441h1v1h-1zM759 448h1v1h-1zM759 455h1v1h-1zM759 462h1v1h-1zM759 469h1v1h-1zM759 477h1v1h-1zM759 484h1v1h-1zM759 491h1v1h-1zM759 498h1v1h-1zM759 505h1v1h-1zM759 513h1v1h-1zM759 520h1v1h-1zM759 527h1v1h-1zM759 534h1v1h-1zM759 541h1v1h-1zM759 548h1v1h-1zM759 556h1v1h-1zM759 563h1v1h-1zM759 570h1v1h-1zM759 577h1v1h-1zM759 584h1v1h-1zM759 592h1v1h-1zM759 599h1v1h-1zM759 606h1v1h-1zM765 176h1v1h-1zM765 184h1v1h-1zM765 191h1v1h-1zM765 198h1v1h-1zM765 205h1v1h-1zM765 212h1v1h-1zM765 220h1v1h-1zM765 227h1v1h-1zM765 234h1v1h-1zM765 241h1v1h-1zM765 248h1v1h-1zM765 256h1v1h-1zM765 263h1v1h-1zM765 270h1v1h-1zM765 277h1v1h-1zM765 284h1v1h-1zM765 291h1v1h-1zM765 299h1v1h-1zM765 306h1v1h-1zM765 313h1v1h-1zM765 320h1v1h-1zM765 327h1v1h-1zM765 335h1v1h-1zM765 342h1v1h-1zM765 349h1v1h-1zM765 356h1v1h-1zM765 363h1v1h-1zM765 370h1v1h-1zM765 378h1v1h-1zM765 385h1v1h-1zM765 392h1v1h-1zM765 399h1v1h-1zM765 406h1v1h-1zM765 414h1v1h-1zM765 421h1v1h-1zM765 428h1v1h-1zM765 435h1v1h-1zM765 442h1v1h-1zM765 449h1v1h-1zM765 457h1v1h-1zM765 464h1v1h-1zM765 471h1v1h-1zM765 478h1v1h-1zM765 485h1v1h-1zM765 493h1v1h-1zM765 500h1v1h-1zM765 507h1v1h-1zM765 514h1v1h-1zM765 521h1v1h-1zM765 528h1v1h-1zM765 536h1v1h-1zM765 543h1v1h-1zM765 550h1v1h-1zM765 557h1v1h-1zM765 564h1v1h-1zM765 572h1v1h-1zM765 579h1v1h-1zM765 586h1v1h-1zM765 593h1v1h-1zM765 600h1v1h-1zM765 608h1v1h-1zM771 178h1v1h-1zM771 185h1v1h-1zM771 192h1v1h-1zM771 200h1v1h-1zM771 207h1v1h-1zM771 214h1v1h-1zM771 221h1v1h-1zM771 228h1v1h-1zM771 236h1v1h-1zM771 243h1v1h-1zM771 250h1v1h-1zM771 257h1v1h-1zM771 264h1v1h-1zM771 271h1v1h-1zM771 279h1v1h-1zM771 286h1v1h-1zM771 293h1v1h-1zM771 300h1v1h-1zM771 307h1v1h-1zM771 315h1v1h-1zM771 322h1v1h-1zM771 329h1v1h-1zM771 336h1v1h-1zM771 343h1v1h-1zM771 350h1v1h-1zM771 358h1v1h-1zM771 365h1v1h-1zM771 372h1v1h-1zM771 379h1v1h-1zM771 386h1v1h-1zM771 394h1v1h-1zM771 401h1v1h-1zM771 408h1v1h-1zM771 415h1v1h-1zM771 422h1v1h-1zM771 430h1v1h-1zM771 437h1v1h-1zM771 444h1v1h-1zM771 451h1v1h-1zM771 458h1v1h-1zM771 465h1v1h-1zM771 473h1v1h-1zM771 480h1v1h-1zM771 487h1v1h-1zM771 494h1v1h-1zM771 501h1v1h-1zM771 509h1v1h-1zM771 516h1v1h-1zM771 523h1v1h-1zM771 530h1v1h-1zM771 537h1v1h-1zM771 544h1v1h-1zM771 552h1v1h-1zM771 559h1v1h-1zM771 566h1v1h-1zM771 573h1v1h-1zM771 580h1v1h-1zM771 588h1v1h-1zM771 595h1v1h-1zM771 602h1v1h-1zM771 609h1v1h-1zM777 180h1v1h-1zM777 187h1v1h-1zM777 194h1v1h-1zM777 201h1v1h-1zM777 208h1v1h-1zM777 216h1v1h-1zM777 223h1v1h-1zM777 230h1v1h-1zM777 237h1v1h-1zM777 244h1v1h-1zM777 252h1v1h-1zM777 259h1v1h-1zM777 266h1v1h-1zM777 273h1v1h-1zM777 280h1v1h-1zM777 287h1v1h-1zM777 295h1v1h-1zM777 302h1v1h-1zM777 309h1v1h-1zM777 316h1v1h-1zM777 323h1v1h-1zM777 331h1v1h-1zM777 338h1v1h-1zM777 345h1v1h-1zM777 352h1v1h-1zM777 359h1v1h-1zM777 366h1v1h-1zM777 374h1v1h-1zM777 381h1v1h-1zM777 388h1v1h-1zM777 395h1v1h-1zM777 402h1v1h-1zM777 410h1v1h-1zM777 417h1v1h-1zM777 424h1v1h-1zM777 431h1v1h-1zM777 438h1v1h-1zM777 445h1v1h-1zM777 453h1v1h-1zM777 460h1v1h-1zM777 467h1v1h-1zM777 474h1v1h-1zM777 481h1v1h-1zM777 489h1v1h-1zM777 496h1v1h-1zM777 503h1v1h-1zM777 510h1v1h-1zM777 517h1v1h-1zM777 524h1v1h-1zM777 532h1v1h-1zM777 539h1v1h-1zM777 546h1v1h-1zM777 553h1v1h-1zM777 560h1v1h-1zM777 568h1v1h-1zM777 575h1v1h-1zM777 582h1v1h-1zM777 589h1v1h-1zM777 596h1v1h-1zM777 604h1v1h-1zM777 611h1v1h-1zM783 181h1v1h-1zM783 188h1v1h-1zM783 196h1v1h-1zM783 203h1v1h-1zM783 210h1v1h-1zM783 217h1v1h-1zM783 224h1v1h-1zM783 232h1v1h-1zM783 239h1v1h-1zM783 246h1v1h-1zM783 253h1v1h-1zM783 260h1v1h-1zM783 268h1v1h-1zM783 275h1v1h-1zM783 282h1v1h-1zM783 289h1v1h-1zM783 296h1v1h-1zM783 303h1v1h-1zM783 311h1v1h-1zM783 318h1v1h-1zM783 325h1v1h-1zM783 332h1v1h-1zM783 339h1v1h-1zM783 347h1v1h-1zM783 354h1v1h-1zM783 361h1v1h-1zM783 368h1v1h-1zM783 375h1v1h-1zM783 382h1v1h-1zM783 390h1v1h-1zM783 397h1v1h-1zM783 404h1v1h-1zM783 411h1v1h-1zM783 418h1v1h-1zM783 426h1v1h-1zM783 433h1v1h-1zM783 440h1v1h-1zM783 447h1v1h-1zM783 454h1v1h-1zM783 461h1v1h-1zM783 469h1v1h-1zM783 476h1v1h-1zM783 483h1v1h-1zM783 490h1v1h-1zM783 497h1v1h-1zM783 505h1v1h-1zM783 512h1v1h-1zM783 519h1v1h-1zM783 526h1v1h-1zM783 533h1v1h-1zM783 540h1v1h-1zM783 548h1v1h-1zM783 555h1v1h-1zM783 562h1v1h-1zM783 569h1v1h-1zM783 576h1v1h-1zM783 584h1v1h-1zM783 591h1v1h-1zM783 598h1v1h-1zM783 605h1v1h-1zM783 612h1v1h-1zM789 183h1v1h-1zM789 190h1v1h-1zM789 197h1v1h-1zM789 204h1v1h-1zM789 212h1v1h-1zM789 219h1v1h-1zM789 226h1v1h-1zM789 233h1v1h-1zM789 240h1v1h-1zM789 248h1v1h-1zM789 255h1v1h-1zM789 262h1v1h-1zM789 269h1v1h-1zM789 276h1v1h-1zM789 283h1v1h-1zM789 291h1v1h-1zM789 298h1v1h-1zM789 305h1v1h-1zM789 312h1v1h-1zM789 319h1v1h-1zM789 327h1v1h-1zM789 334h1v1h-1zM789 341h1v1h-1zM789 348h1v1h-1zM789 355h1v1h-1zM789 362h1v1h-1zM789 370h1v1h-1zM789 377h1v1h-1zM789 384h1v1h-1zM789 391h1v1h-1zM789 398h1v1h-1zM789 406h1v1h-1zM789 413h1v1h-1zM789 420h1v1h-1zM789 427h1v1h-1zM789 434h1v1h-1zM789 442h1v1h-1zM789 449h1v1h-1zM789 456h1v1h-1zM789 463h1v1h-1zM789 470h1v1h-1zM789 477h1v1h-1zM789 485h1v1h-1zM789 492h1v1h-1zM789 499h1v1h-1zM789 506h1v1h-1zM789 513h1v1h-1zM789 521h1v1h-1zM789 528h1v1h-1zM789 535h1v1h-1zM789 542h1v1h-1zM789 549h1v1h-1zM789 556h1v1h-1zM789 564h1v1h-1zM789 571h1v1h-1zM789 578h1v1h-1zM789 585h1v1h-1zM789 592h1v1h-1zM789 600h1v1h-1zM789 607h1v1h-1zM789 614h1v1h-1zM795 184h1v1h-1zM795 192h1v1h-1zM795 199h1v1h-1zM795 206h1v1h-1zM795 213h1v1h-1zM795 220h1v1h-1zM795 228h1v1h-1zM795 235h1v1h-1zM795 242h1v1h-1zM795 249h1v1h-1zM795 256h1v1h-1zM795 264h1v1h-1zM795 271h1v1h-1zM795 278h1v1h-1zM795 285h1v1h-1zM795 292h1v1h-1zM795 299h1v1h-1zM795 307h1v1h-1zM795 314h1v1h-1zM795 321h1v1h-1zM795 328h1v1h-1zM795 335h1v1h-1zM795 343h1v1h-1zM795 350h1v1h-1zM795 357h1v1h-1zM795 364h1v1h-1zM795 371h1v1h-1zM795 378h1v1h-1zM795 386h1v1h-1zM795 393h1v1h-1zM795 400h1v1h-1zM795 407h1v1h-1zM795 414h1v1h-1zM795 422h1v1h-1zM795 429h1v1h-1zM795 436h1v1h-1zM795 443h1v1h-1zM795 450h1v1h-1zM795 457h1v1h-1zM795 465h1v1h-1zM795 472h1v1h-1zM795 479h1v1h-1zM795 486h1v1h-1zM795 493h1v1h-1zM795 501h1v1h-1zM795 508h1v1h-1zM795 515h1v1h-1zM795 522h1v1h-1zM795 529h1v1h-1zM795 536h1v1h-1zM795 544h1v1h-1zM795 551h1v1h-1zM795 558h1v1h-1zM795 565h1v1h-1zM795 572h1v1h-1zM795 580h1v1h-1zM795 587h1v1h-1zM795 594h1v1h-1zM795 601h1v1h-1zM795 608h1v1h-1zM795 616h1v1h-1zM801 186h1v1h-1zM801 193h1v1h-1zM801 200h1v1h-1zM801 208h1v1h-1zM801 215h1v1h-1zM801 222h1v1h-1zM801 229h1v1h-1zM801 236h1v1h-1zM801 244h1v1h-1zM801 251h1v1h-1zM801 258h1v1h-1zM801 265h1v1h-1zM801 272h1v1h-1zM801 279h1v1h-1zM801 287h1v1h-1zM801 294h1v1h-1zM801 301h1v1h-1zM801 308h1v1h-1zM801 315h1v1h-1zM801 323h1v1h-1zM801 330h1v1h-1zM801 337h1v1h-1zM801 344h1v1h-1zM801 351h1v1h-1zM801 358h1v1h-1zM801 366h1v1h-1zM801 373h1v1h-1zM801 380h1v1h-1zM801 387h1v1h-1zM801 394h1v1h-1zM801 402h1v1h-1zM801 409h1v1h-1zM801 416h1v1h-1zM801 423h1v1h-1zM801 430h1v1h-1zM801 438h1v1h-1zM801 445h1v1h-1zM801 452h1v1h-1zM801 459h1v1h-1zM801 466h1v1h-1zM801 473h1v1h-1zM801 481h1v1h-1zM801 488h1v1h-1zM801 495h1v1h-1zM801 502h1v1h-1zM801 509h1v1h-1zM801 517h1v1h-1zM801 524h1v1h-1zM801 531h1v1h-1zM801 538h1v1h-1zM801 545h1v1h-1zM801 552h1v1h-1zM801 560h1v1h-1zM801 567h1v1h-1zM801 574h1v1h-1zM801 581h1v1h-1zM801 588h1v1h-1zM801 596h1v1h-1zM801 603h1v1h-1zM801 610h1v1h-1zM801 617h1v1h-1zM807 188h1v1h-1zM807 195h1v1h-1zM807 202h1v1h-1zM807 209h1v1h-1zM807 216h1v1h-1zM807 224h1v1h-1zM807 231h1v1h-1zM807 238h1v1h-1zM807 245h1v1h-1zM807 252h1v1h-1zM807 260h1v1h-1zM807 267h1v1h-1zM807 274h1v1h-1zM807 281h1v1h-1zM807 288h1v1h-1zM807 295h1v1h-1zM807 303h1v1h-1zM807 310h1v1h-1zM807 317h1v1h-1zM807 324h1v1h-1zM807 331h1v1h-1zM807 339h1v1h-1zM807 346h1v1h-1zM807 353h1v1h-1zM807 360h1v1h-1zM807 367h1v1h-1zM807 374h1v1h-1zM807 382h1v1h-1zM807 389h1v1h-1zM807 396h1v1h-1zM807 403h1v1h-1zM807 410h1v1h-1zM807 418h1v1h-1zM807 425h1v1h-1zM807 432h1v1h-1zM807 439h1v1h-1zM807 446h1v1h-1zM807 453h1v1h-1zM807 461h1v1h-1zM807 468h1v1h-1zM807 475h1v1h-1zM807 482h1v1h-1zM807 489h1v1h-1zM807 497h1v1h-1zM807 504h1v1h-1zM807 511h1v1h-1zM807 518h1v1h-1zM807 525h1v1h-1zM807 532h1v1h-1zM807 540h1v1h-1zM807 547h1v1h-1zM807 554h1v1h-1zM807 561h1v1h-1zM807 568h1v1h-1zM807 576h1v1h-1zM807 583h1v1h-1zM807 590h1v1h-1zM807 597h1v1h-1zM807 604h1v1h-1zM807 612h1v1h-1zM807 619h1v1h-1zM813 189h1v1h-1zM813 196h1v1h-1zM813 204h1v1h-1zM813 211h1v1h-1zM813 218h1v1h-1zM813 225h1v1h-1zM813 232h1v1h-1zM813 240h1v1h-1zM813 247h1v1h-1zM813 254h1v1h-1zM813 261h1v1h-1zM813 268h1v1h-1zM813 276h1v1h-1zM813 283h1v1h-1zM813 290h1v1h-1zM813 297h1v1h-1zM813 304h1v1h-1zM813 311h1v1h-1zM813 319h1v1h-1zM813 326h1v1h-1zM813 333h1v1h-1zM813 340h1v1h-1zM813 347h1v1h-1zM813 355h1v1h-1zM813 362h1v1h-1zM813 369h1v1h-1zM813 376h1v1h-1zM813 383h1v1h-1zM813 390h1v1h-1zM813 398h1v1h-1zM813 405h1v1h-1zM813 412h1v1h-1zM813 419h1v1h-1zM813 426h1v1h-1zM813 434h1v1h-1zM813 441h1v1h-1zM813 448h1v1h-1zM813 455h1v1h-1zM813 462h1v1h-1zM813 469h1v1h-1zM813 477h1v1h-1zM813 484h1v1h-1zM813 491h1v1h-1zM813 498h1v1h-1zM813 505h1v1h-1zM813 513h1v1h-1zM813 520h1v1h-1zM813 527h1v1h-1zM813 534h1v1h-1zM813 541h1v1h-1zM813 548h1v1h-1zM813 556h1v1h-1zM813 563h1v1h-1zM813 570h1v1h-1zM813 577h1v1h-1zM813 584h1v1h-1zM813 592h1v1h-1zM813 599h1v1h-1zM813 606h1v1h-1zM813 613h1v1h-1zM813 620h1v1h-1zM819 191h1v1h-1zM819 198h1v1h-1zM819 205h1v1h-1zM819 212h1v1h-1zM819 220h1v1h-1zM819 227h1v1h-1zM819 234h1v1h-1zM819 241h1v1h-1zM819 248h1v1h-1zM819 256h1v1h-1zM819 263h1v1h-1zM819 270h1v1h-1zM819 277h1v1h-1zM819 284h1v1h-1zM819 291h1v1h-1zM819 299h1v1h-1zM819 306h1v1h-1zM819 313h1v1h-1zM819 320h1v1h-1zM819 327h1v1h-1zM819 335h1v1h-1zM819 342h1v1h-1zM819 349h1v1h-1zM819 356h1v1h-1zM819 363h1v1h-1zM819 370h1v1h-1zM819 378h1v1h-1zM819 385h1v1h-1zM819 392h1v1h-1zM819 399h1v1h-1zM819 406h1v1h-1zM819 414h1v1h-1zM819 421h1v1h-1zM819 428h1v1h-1zM819 435h1v1h-1zM819 442h1v1h-1zM819 450h1v1h-1zM819 457h1v1h-1zM819 464h1v1h-1zM819 471h1v1h-1zM819 478h1v1h-1zM819 485h1v1h-1zM819 493h1v1h-1zM819 500h1v1h-1zM819 507h1v1h-1zM819 514h1v1h-1zM819 521h1v1h-1zM819 529h1v1h-1zM819 536h1v1h-1zM819 543h1v1h-1zM819 550h1v1h-1zM819 557h1v1h-1zM819 564h1v1h-1zM819 572h1v1h-1zM819 579h1v1h-1zM819 586h1v1h-1zM819 593h1v1h-1zM819 600h1v1h-1zM819 608h1v1h-1zM819 615h1v1h-1zM819 622h1v1h-1zM825 192h1v1h-1zM825 200h1v1h-1zM825 207h1v1h-1zM825 214h1v1h-1zM825 221h1v1h-1zM825 228h1v1h-1zM825 236h1v1h-1zM825 243h1v1h-1zM825 250h1v1h-1zM825 257h1v1h-1zM825 264h1v1h-1zM825 272h1v1h-1zM825 279h1v1h-1zM825 286h1v1h-1zM825 293h1v1h-1zM825 300h1v1h-1zM825 307h1v1h-1zM825 315h1v1h-1zM825 322h1v1h-1zM825 329h1v1h-1zM825 336h1v1h-1zM825 343h1v1h-1zM825 351h1v1h-1zM825 358h1v1h-1zM825 365h1v1h-1zM825 372h1v1h-1zM825 379h1v1h-1zM825 386h1v1h-1zM825 394h1v1h-1zM825 401h1v1h-1zM825 408h1v1h-1zM825 415h1v1h-1zM825 422h1v1h-1zM825 430h1v1h-1zM825 437h1v1h-1zM825 444h1v1h-1zM825 451h1v1h-1zM825 458h1v1h-1zM825 465h1v1h-1zM825 473h1v1h-1zM825 480h1v1h-1zM825 487h1v1h-1zM825 494h1v1h-1zM825 501h1v1h-1zM825 509h1v1h-1zM825 516h1v1h-1zM825 523h1v1h-1zM825 530h1v1h-1zM825 537h1v1h-1zM825 544h1v1h-1zM825 552h1v1h-1zM825 559h1v1h-1zM825 566h1v1h-1zM825 573h1v1h-1zM825 580h1v1h-1zM825 588h1v1h-1zM825 595h1v1h-1zM825 602h1v1h-1zM825 609h1v1h-1zM825 616h1v1h-1zM825 624h1v1h-1zM831 194h1v1h-1zM831 201h1v1h-1zM831 208h1v1h-1zM831 216h1v1h-1zM831 223h1v1h-1zM831 230h1v1h-1zM831 237h1v1h-1zM831 244h1v1h-1zM831 252h1v1h-1zM831 259h1v1h-1zM831 266h1v1h-1zM831 273h1v1h-1zM831 280h1v1h-1zM831 287h1v1h-1zM831 295h1v1h-1zM831 302h1v1h-1zM831 309h1v1h-1zM831 316h1v1h-1zM831 323h1v1h-1zM831 331h1v1h-1zM831 338h1v1h-1zM831 345h1v1h-1zM831 352h1v1h-1zM831 359h1v1h-1zM831 366h1v1h-1zM831 374h1v1h-1zM831 381h1v1h-1zM831 388h1v1h-1zM831 395h1v1h-1zM831 402h1v1h-1zM831 410h1v1h-1zM831 417h1v1h-1zM831 424h1v1h-1zM831 431h1v1h-1zM831 438h1v1h-1zM831 446h1v1h-1zM831 453h1v1h-1zM831 460h1v1h-1zM831 467h1v1h-1zM831 474h1v1h-1zM831 481h1v1h-1zM831 489h1v1h-1zM831 496h1v1h-1zM831 503h1v1h-1zM831 510h1v1h-1zM831 517h1v1h-1zM831 525h1v1h-1zM831 532h1v1h-1zM831 539h1v1h-1zM831 546h1v1h-1zM831 553h1v1h-1zM831 560h1v1h-1zM831 568h1v1h-1zM831 575h1v1h-1zM831 582h1v1h-1zM831 589h1v1h-1zM831 596h1v1h-1zM831 604h1v1h-1zM831 611h1v1h-1zM831 618h1v1h-1zM831 625h1v1h-1zM837 196h1v1h-1zM837 203h1v1h-1zM837 210h1v1h-1zM837 217h1v1h-1zM837 224h1v1h-1zM837 232h1v1h-1zM837 239h1v1h-1zM837 246h1v1h-1zM837 253h1v1h-1zM837 260h1v1h-1zM837 268h1v1h-1zM837 275h1v1h-1zM837 282h1v1h-1zM837 289h1v1h-1zM837 296h1v1h-1zM837 303h1v1h-1zM837 311h1v1h-1zM837 318h1v1h-1zM837 325h1v1h-1zM837 332h1v1h-1zM837 339h1v1h-1zM837 347h1v1h-1zM837 354h1v1h-1zM837 361h1v1h-1zM837 368h1v1h-1zM837 375h1v1h-1zM837 382h1v1h-1zM837 390h1v1h-1zM837 397h1v1h-1zM837 404h1v1h-1zM837 411h1v1h-1zM837 418h1v1h-1zM837 426h1v1h-1zM837 433h1v1h-1zM837 440h1v1h-1zM837 447h1v1h-1zM837 454h1v1h-1zM837 461h1v1h-1zM837 469h1v1h-1zM837 476h1v1h-1zM837 483h1v1h-1zM837 490h1v1h-1zM837 497h1v1h-1zM837 505h1v1h-1zM837 512h1v1h-1zM837 519h1v1h-1zM837 526h1v1h-1zM837 533h1v1h-1zM837 540h1v1h-1zM837 548h1v1h-1zM837 555h1v1h-1zM837 562h1v1h-1zM837 569h1v1h-1zM837 576h1v1h-1zM837 584h1v1h-1zM837 591h1v1h-1zM837 598h1v1h-1zM837 605h1v1h-1zM837 612h1v1h-1zM837 620h1v1h-1zM837 627h1v1h-1zM843 197h1v1h-1zM843 204h1v1h-1zM843 212h1v1h-1zM843 219h1v1h-1zM843 226h1v1h-1zM843 233h1v1h-1zM843 240h1v1h-1zM843 248h1v1h-1zM843 255h1v1h-1zM843 262h1v1h-1zM843 269h1v1h-1zM843 276h1v1h-1zM843 284h1v1h-1zM843 291h1v1h-1zM843 298h1v1h-1zM843 305h1v1h-1zM843 312h1v1h-1zM843 319h1v1h-1zM843 327h1v1h-1zM843 334h1v1h-1zM843 341h1v1h-1zM843 348h1v1h-1zM843 355h1v1h-1zM843 363h1v1h-1zM843 370h1v1h-1zM843 377h1v1h-1zM843 384h1v1h-1zM843 391h1v1h-1zM843 398h1v1h-1zM843 406h1v1h-1zM843 413h1v1h-1zM843 420h1v1h-1zM843 427h1v1h-1zM843 434h1v1h-1zM843 442h1v1h-1zM843 449h1v1h-1zM843 456h1v1h-1zM843 463h1v1h-1zM843 470h1v1h-1zM843 477h1v1h-1zM843 485h1v1h-1zM843 492h1v1h-1zM843 499h1v1h-1zM843 506h1v1h-1zM843 513h1v1h-1zM843 521h1v1h-1zM843 528h1v1h-1zM843 535h1v1h-1zM843 542h1v1h-1zM843 549h1v1h-1zM843 556h1v1h-1zM843 564h1v1h-1zM843 571h1v1h-1zM843 578h1v1h-1zM843 585h1v1h-1zM843 592h1v1h-1zM843 600h1v1h-1zM843 607h1v1h-1zM843 614h1v1h-1zM843 621h1v1h-1zM843 628h1v1h-1zM849 199h1v1h-1zM849 206h1v1h-1zM849 213h1v1h-1zM849 220h1v1h-1zM849 228h1v1h-1zM849 235h1v1h-1zM849 242h1v1h-1zM849 249h1v1h-1zM849 256h1v1h-1zM849 264h1v1h-1zM849 271h1v1h-1zM849 278h1v1h-1zM849 285h1v1h-1zM849 292h1v1h-1zM849 299h1v1h-1zM849 307h1v1h-1zM849 314h1v1h-1zM849 321h1v1h-1zM849 328h1v1h-1zM849 335h1v1h-1zM849 343h1v1h-1zM849 350h1v1h-1zM849 357h1v1h-1zM849 364h1v1h-1zM849 371h1v1h-1zM849 378h1v1h-1zM849 386h1v1h-1zM849 393h1v1h-1zM849 400h1v1h-1zM849 407h1v1h-1zM849 414h1v1h-1zM849 422h1v1h-1zM849 429h1v1h-1zM849 436h1v1h-1zM849 443h1v1h-1zM849 450h1v1h-1zM849 458h1v1h-1zM849 465h1v1h-1zM849 472h1v1h-1zM849 479h1v1h-1zM849 486h1v1h-1zM849 493h1v1h-1zM849 501h1v1h-1zM849 508h1v1h-1zM849 515h1v1h-1zM849 522h1v1h-1zM849 529h1v1h-1zM849 537h1v1h-1zM849 544h1v1h-1zM849 551h1v1h-1zM849 558h1v1h-1zM849 565h1v1h-1zM849 572h1v1h-1zM849 580h1v1h-1zM849 587h1v1h-1zM849 594h1v1h-1zM849 601h1v1h-1zM849 608h1v1h-1zM849 616h1v1h-1zM849 623h1v1h-1zM849 630h1v1h-1zM855 200h1v1h-1zM855 208h1v1h-1zM855 215h1v1h-1zM855 222h1v1h-1zM855 229h1v1h-1zM855 236h1v1h-1zM855 244h1v1h-1zM855 251h1v1h-1zM855 258h1v1h-1zM855 265h1v1h-1zM855 272h1v1h-1zM855 280h1v1h-1zM855 287h1v1h-1zM855 294h1v1h-1zM855 301h1v1h-1zM855 308h1v1h-1zM855 315h1v1h-1zM855 323h1v1h-1zM855 330h1v1h-1zM855 337h1v1h-1zM855 344h1v1h-1zM855 351h1v1h-1zM855 359h1v1h-1zM855 366h1v1h-1zM855 373h1v1h-1zM855 380h1v1h-1zM855 387h1v1h-1zM855 394h1v1h-1zM855 402h1v1h-1zM855 409h1v1h-1zM855 416h1v1h-1zM855 423h1v1h-1zM855 430h1v1h-1zM855 438h1v1h-1zM855 445h1v1h-1zM855 452h1v1h-1zM855 459h1v1h-1zM855 466h1v1h-1zM855 473h1v1h-1zM855 481h1v1h-1zM855 488h1v1h-1zM855 495h1v1h-1zM855 502h1v1h-1zM855 509h1v1h-1zM855 517h1v1h-1zM855 524h1v1h-1zM855 531h1v1h-1zM855 538h1v1h-1zM855 545h1v1h-1zM855 552h1v1h-1zM855 560h1v1h-1zM855 567h1v1h-1zM855 574h1v1h-1zM855 581h1v1h-1zM855 588h1v1h-1zM855 596h1v1h-1zM855 603h1v1h-1zM855 610h1v1h-1zM855 617h1v1h-1zM855 624h1v1h-1zM855 632h1v1h-1zM861 202h1v1h-1zM861 209h1v1h-1zM861 216h1v1h-1zM861 224h1v1h-1zM861 231h1v1h-1zM861 238h1v1h-1zM861 245h1v1h-1zM861 252h1v1h-1zM861 260h1v1h-1zM861 267h1v1h-1zM861 274h1v1h-1zM861 281h1v1h-1zM861 288h1v1h-1zM861 295h1v1h-1zM861 303h1v1h-1zM861 310h1v1h-1zM861 317h1v1h-1zM861 324h1v1h-1zM861 331h1v1h-1zM861 339h1v1h-1zM861 346h1v1h-1zM861 353h1v1h-1zM861 360h1v1h-1zM861 367h1v1h-1zM861 374h1v1h-1zM861 382h1v1h-1zM861 389h1v1h-1zM861 396h1v1h-1zM861 403h1v1h-1zM861 410h1v1h-1zM861 418h1v1h-1zM861 425h1v1h-1zM861 432h1v1h-1zM861 439h1v1h-1zM861 446h1v1h-1zM861 454h1v1h-1zM861 461h1v1h-1zM861 468h1v1h-1zM861 475h1v1h-1zM861 482h1v1h-1zM861 489h1v1h-1zM861 497h1v1h-1zM861 504h1v1h-1zM861 511h1v1h-1zM861 518h1v1h-1zM861 525h1v1h-1zM861 533h1v1h-1zM861 540h1v1h-1zM861 547h1v1h-1zM861 554h1v1h-1zM861 561h1v1h-1zM861 568h1v1h-1zM861 576h1v1h-1zM861 583h1v1h-1zM861 590h1v1h-1zM861 597h1v1h-1zM861 604h1v1h-1zM861 612h1v1h-1zM861 619h1v1h-1zM861 626h1v1h-1zM861 633h1v1h-1zM867 204h1v1h-1zM867 211h1v1h-1zM867 218h1v1h-1zM867 225h1v1h-1zM867 232h1v1h-1zM867 240h1v1h-1zM867 247h1v1h-1zM867 254h1v1h-1zM867 261h1v1h-1zM867 268h1v1h-1zM867 276h1v1h-1zM867 283h1v1h-1zM867 290h1v1h-1zM867 297h1v1h-1zM867 304h1v1h-1zM867 311h1v1h-1zM867 319h1v1h-1zM867 326h1v1h-1zM867 333h1v1h-1zM867 340h1v1h-1zM867 347h1v1h-1zM867 355h1v1h-1zM867 362h1v1h-1zM867 369h1v1h-1zM867 376h1v1h-1zM867 383h1v1h-1zM867 390h1v1h-1zM867 398h1v1h-1zM867 405h1v1h-1zM867 412h1v1h-1zM867 419h1v1h-1zM867 426h1v1h-1zM867 434h1v1h-1zM867 441h1v1h-1zM867 448h1v1h-1zM867 455h1v1h-1zM867 462h1v1h-1zM867 469h1v1h-1zM867 477h1v1h-1zM867 484h1v1h-1zM867 491h1v1h-1zM867 498h1v1h-1zM867 505h1v1h-1zM867 513h1v1h-1zM867 520h1v1h-1zM867 527h1v1h-1zM867 534h1v1h-1zM867 541h1v1h-1zM867 548h1v1h-1zM867 556h1v1h-1zM867 563h1v1h-1zM867 570h1v1h-1zM867 577h1v1h-1zM867 584h1v1h-1zM867 592h1v1h-1zM867 599h1v1h-1zM867 606h1v1h-1zM867 613h1v1h-1zM867 620h1v1h-1zM867 628h1v1h-1zM867 635h1v1h-1zM873 205h1v1h-1zM873 212h1v1h-1zM873 220h1v1h-1zM873 227h1v1h-1zM873 234h1v1h-1zM873 241h1v1h-1zM873 248h1v1h-1zM873 256h1v1h-1zM873 263h1v1h-1zM873 270h1v1h-1zM873 277h1v1h-1zM873 284h1v1h-1zM873 292h1v1h-1zM873 299h1v1h-1zM873 306h1v1h-1zM873 313h1v1h-1zM873 320h1v1h-1zM873 327h1v1h-1zM873 335h1v1h-1zM873 342h1v1h-1zM873 349h1v1h-1zM873 356h1v1h-1zM873 363h1v1h-1zM873 371h1v1h-1zM873 378h1v1h-1zM873 385h1v1h-1zM873 392h1v1h-1zM873 399h1v1h-1zM873 406h1v1h-1zM873 414h1v1h-1zM873 421h1v1h-1zM873 428h1v1h-1zM873 435h1v1h-1zM873 442h1v1h-1zM873 450h1v1h-1zM873 457h1v1h-1zM873 464h1v1h-1zM873 471h1v1h-1zM873 478h1v1h-1zM873 485h1v1h-1zM873 493h1v1h-1zM873 500h1v1h-1zM873 507h1v1h-1zM873 514h1v1h-1zM873 521h1v1h-1zM873 529h1v1h-1zM873 536h1v1h-1zM873 543h1v1h-1zM873 550h1v1h-1zM873 557h1v1h-1zM873 564h1v1h-1zM873 572h1v1h-1zM873 579h1v1h-1zM873 586h1v1h-1zM873 593h1v1h-1zM873 600h1v1h-1zM873 608h1v1h-1zM873 615h1v1h-1zM873 622h1v1h-1zM873 629h1v1h-1zM873 636h1v1h-1zM879 207h1v1h-1zM879 214h1v1h-1zM879 221h1v1h-1zM879 228h1v1h-1zM879 236h1v1h-1zM879 243h1v1h-1zM879 250h1v1h-1zM879 257h1v1h-1zM879 264h1v1h-1zM879 272h1v1h-1zM879 279h1v1h-1zM879 286h1v1h-1zM879 293h1v1h-1zM879 300h1v1h-1zM879 307h1v1h-1zM879 315h1v1h-1zM879 322h1v1h-1zM879 329h1v1h-1zM879 336h1v1h-1zM879 343h1v1h-1zM879 351h1v1h-1zM879 358h1v1h-1zM879 365h1v1h-1zM879 372h1v1h-1zM879 379h1v1h-1zM879 386h1v1h-1zM879 394h1v1h-1zM879 401h1v1h-1zM879 408h1v1h-1zM879 415h1v1h-1zM879 422h1v1h-1zM879 430h1v1h-1zM879 437h1v1h-1zM879 444h1v1h-1zM879 451h1v1h-1zM879 458h1v1h-1zM879 466h1v1h-1zM879 473h1v1h-1zM879 480h1v1h-1zM879 487h1v1h-1zM879 494h1v1h-1zM879 501h1v1h-1zM879 509h1v1h-1zM879 516h1v1h-1zM879 523h1v1h-1zM879 530h1v1h-1zM879 537h1v1h-1zM879 545h1v1h-1zM879 552h1v1h-1zM879 559h1v1h-1zM879 566h1v1h-1zM879 573h1v1h-1zM879 580h1v1h-1zM879 588h1v1h-1zM879 595h1v1h-1zM879 602h1v1h-1zM879 609h1v1h-1zM879 616h1v1h-1zM879 624h1v1h-1zM879 631h1v1h-1zM879 638h1v1h-1zM885 208h1v1h-1zM885 216h1v1h-1zM885 223h1v1h-1zM885 230h1v1h-1zM885 237h1v1h-1zM885 244h1v1h-1zM885 252h1v1h-1zM885 259h1v1h-1zM885 266h1v1h-1zM885 273h1v1h-1zM885 280h1v1h-1zM885 288h1v1h-1zM885 295h1v1h-1zM885 302h1v1h-1zM885 309h1v1h-1zM885 316h1v1h-1zM885 323h1v1h-1zM885 331h1v1h-1zM885 338h1v1h-1zM885 345h1v1h-1zM885 352h1v1h-1zM885 359h1v1h-1zM885 367h1v1h-1zM885 374h1v1h-1zM885 381h1v1h-1zM885 388h1v1h-1zM885 395h1v1h-1zM885 402h1v1h-1zM885 410h1v1h-1zM885 417h1v1h-1zM885 424h1v1h-1zM885 431h1v1h-1zM885 438h1v1h-1zM885 446h1v1h-1zM885 453h1v1h-1zM885 460h1v1h-1zM885 467h1v1h-1zM885 474h1v1h-1zM885 481h1v1h-1zM885 489h1v1h-1zM885 496h1v1h-1zM885 503h1v1h-1zM885 510h1v1h-1zM885 517h1v1h-1zM885 525h1v1h-1zM885 532h1v1h-1zM885 539h1v1h-1zM885 546h1v1h-1zM885 553h1v1h-1zM885 560h1v1h-1zM885 568h1v1h-1zM885 575h1v1h-1zM885 582h1v1h-1zM885 589h1v1h-1zM885 596h1v1h-1zM885 604h1v1h-1zM885 611h1v1h-1zM885 618h1v1h-1zM885 625h1v1h-1zM885 632h1v1h-1zM885 640h1v1h-1zM891 210h1v1h-1zM891 217h1v1h-1zM891 224h1v1h-1zM891 232h1v1h-1zM891 239h1v1h-1zM891 246h1v1h-1zM891 253h1v1h-1zM891 260h1v1h-1zM891 268h1v1h-1zM891 275h1v1h-1zM891 282h1v1h-1zM891 289h1v1h-1zM891 296h1v1h-1zM891 303h1v1h-1zM891 311h1v1h-1zM891 318h1v1h-1zM891 325h1v1h-1zM891 332h1v1h-1zM891 339h1v1h-1zM891 347h1v1h-1zM891 354h1v1h-1zM891 361h1v1h-1zM891 368h1v1h-1zM891 375h1v1h-1zM891 382h1v1h-1zM891 390h1v1h-1zM891 397h1v1h-1zM891 404h1v1h-1zM891 411h1v1h-1zM891 418h1v1h-1zM891 426h1v1h-1zM891 433h1v1h-1zM891 440h1v1h-1zM891 447h1v1h-1zM891 454h1v1h-1zM891 462h1v1h-1zM891 469h1v1h-1zM891 476h1v1h-1zM891 483h1v1h-1zM891 490h1v1h-1zM891 497h1v1h-1zM891 505h1v1h-1zM891 512h1v1h-1zM891 519h1v1h-1zM891 526h1v1h-1zM891 533h1v1h-1zM891 541h1v1h-1zM891 548h1v1h-1zM891 555h1v1h-1zM891 562h1v1h-1zM891 569h1v1h-1zM891 576h1v1h-1zM891 584h1v1h-1zM891 591h1v1h-1zM891 598h1v1h-1zM891 605h1v1h-1zM891 612h1v1h-1zM891 620h1v1h-1zM891 627h1v1h-1zM891 634h1v1h-1zM891 641h1v1h-1zM897 212h1v1h-1zM897 219h1v1h-1zM897 226h1v1h-1zM897 233h1v1h-1zM897 240h1v1h-1zM897 248h1v1h-1zM897 255h1v1h-1zM897 262h1v1h-1zM897 269h1v1h-1zM897 276h1v1h-1zM897 284h1v1h-1zM897 291h1v1h-1zM897 298h1v1h-1zM897 305h1v1h-1zM897 312h1v1h-1zM897 319h1v1h-1zM897 327h1v1h-1zM897 334h1v1h-1zM897 341h1v1h-1zM897 348h1v1h-1zM897 355h1v1h-1zM897 363h1v1h-1zM897 370h1v1h-1zM897 377h1v1h-1zM897 384h1v1h-1zM897 391h1v1h-1zM897 398h1v1h-1zM897 406h1v1h-1zM897 413h1v1h-1zM897 420h1v1h-1zM897 427h1v1h-1zM897 434h1v1h-1zM897 442h1v1h-1zM897 449h1v1h-1zM897 456h1v1h-1zM897 463h1v1h-1zM897 470h1v1h-1zM897 477h1v1h-1zM897 485h1v1h-1zM897 492h1v1h-1zM897 499h1v1h-1zM897 506h1v1h-1zM897 513h1v1h-1zM897 521h1v1h-1zM897 528h1v1h-1zM897 535h1v1h-1zM897 542h1v1h-1zM897 549h1v1h-1zM897 556h1v1h-1zM897 564h1v1h-1zM897 571h1v1h-1zM897 578h1v1h-1zM897 585h1v1h-1zM897 592h1v1h-1zM897 600h1v1h-1zM897 607h1v1h-1zM897 614h1v1h-1zM897 621h1v1h-1zM897 628h1v1h-1zM897 636h1v1h-1zM897 643h1v1h-1zM903 213h1v1h-1zM903 220h1v1h-1zM903 228h1v1h-1zM903 235h1v1h-1zM903 242h1v1h-1zM903 249h1v1h-1zM903 256h1v1h-1zM903 264h1v1h-1zM903 271h1v1h-1zM903 278h1v1h-1zM903 285h1v1h-1zM903 292h1v1h-1zM903 300h1v1h-1zM903 307h1v1h-1zM903 314h1v1h-1zM903 321h1v1h-1zM903 328h1v1h-1zM903 335h1v1h-1zM903 343h1v1h-1zM903 350h1v1h-1zM903 357h1v1h-1zM903 364h1v1h-1zM903 371h1v1h-1zM903 379h1v1h-1zM903 386h1v1h-1zM903 393h1v1h-1zM903 400h1v1h-1zM903 407h1v1h-1zM903 414h1v1h-1zM903 422h1v1h-1zM903 429h1v1h-1zM903 436h1v1h-1zM903 443h1v1h-1zM903 450h1v1h-1zM903 458h1v1h-1zM903 465h1v1h-1zM903 472h1v1h-1zM903 479h1v1h-1zM903 486h1v1h-1zM903 493h1v1h-1zM903 501h1v1h-1zM903 508h1v1h-1zM903 515h1v1h-1zM903 522h1v1h-1zM903 529h1v1h-1zM903 537h1v1h-1zM903 544h1v1h-1zM903 551h1v1h-1zM903 558h1v1h-1zM903 565h1v1h-1zM903 572h1v1h-1zM903 580h1v1h-1zM903 587h1v1h-1zM903 594h1v1h-1zM903 601h1v1h-1zM903 608h1v1h-1zM903 616h1v1h-1zM903 623h1v1h-1zM903 630h1v1h-1zM903 637h1v1h-1zM903 644h1v1h-1zM909 215h1v1h-1zM909 222h1v1h-1zM909 229h1v1h-1zM909 236h1v1h-1zM909 244h1v1h-1zM909 251h1v1h-1zM909 258h1v1h-1zM909 265h1v1h-1zM909 272h1v1h-1zM909 280h1v1h-1zM909 287h1v1h-1zM909 294h1v1h-1zM909 301h1v1h-1zM909 308h1v1h-1zM909 315h1v1h-1zM909 323h1v1h-1zM909 330h1v1h-1zM909 337h1v1h-1zM909 344h1v1h-1zM909 351h1v1h-1zM909 359h1v1h-1zM909 366h1v1h-1zM909 373h1v1h-1zM909 380h1v1h-1zM909 387h1v1h-1zM909 394h1v1h-1zM909 402h1v1h-1zM909 409h1v1h-1zM909 416h1v1h-1zM909 423h1v1h-1zM909 430h1v1h-1zM909 438h1v1h-1zM909 445h1v1h-1zM909 452h1v1h-1zM909 459h1v1h-1zM909 466h1v1h-1zM909 474h1v1h-1zM909 481h1v1h-1zM909 488h1v1h-1zM909 495h1v1h-1zM909 502h1v1h-1zM909 509h1v1h-1zM909 517h1v1h-1zM909 524h1v1h-1zM909 531h1v1h-1zM909 538h1v1h-1zM909 545h1v1h-1zM909 553h1v1h-1zM909 560h1v1h-1zM909 567h1v1h-1zM909 574h1v1h-1zM909 581h1v1h-1zM909 588h1v1h-1zM909 596h1v1h-1zM909 603h1v1h-1zM909 610h1v1h-1zM909 617h1v1h-1zM909 624h1v1h-1zM909 632h1v1h-1zM909 639h1v1h-1zM909 646h1v1h-1zM915 216h1v1h-1zM915 224h1v1h-1zM915 231h1v1h-1zM915 238h1v1h-1zM915 245h1v1h-1zM915 252h1v1h-1zM915 260h1v1h-1zM915 267h1v1h-1zM915 274h1v1h-1zM915 281h1v1h-1zM915 288h1v1h-1zM915 296h1v1h-1zM915 303h1v1h-1zM915 310h1v1h-1zM915 317h1v1h-1zM915 324h1v1h-1zM915 331h1v1h-1zM915 339h1v1h-1zM915 346h1v1h-1zM915 353h1v1h-1zM915 360h1v1h-1zM915 367h1v1h-1zM915 375h1v1h-1zM915 382h1v1h-1zM915 389h1v1h-1zM915 396h1v1h-1zM915 403h1v1h-1zM915 410h1v1h-1zM915 418h1v1h-1zM915 425h1v1h-1zM915 432h1v1h-1zM915 439h1v1h-1zM915 446h1v1h-1zM915 454h1v1h-1zM915 461h1v1h-1zM915 468h1v1h-1zM915 475h1v1h-1zM915 482h1v1h-1zM915 489h1v1h-1zM915 497h1v1h-1zM915 504h1v1h-1zM915 511h1v1h-1zM915 518h1v1h-1zM915 525h1v1h-1zM915 533h1v1h-1zM915 540h1v1h-1zM915 547h1v1h-1zM915 554h1v1h-1zM915 561h1v1h-1zM915 568h1v1h-1zM915 576h1v1h-1zM915 583h1v1h-1zM915 590h1v1h-1zM915 597h1v1h-1zM915 604h1v1h-1zM915 612h1v1h-1zM915 619h1v1h-1zM915 626h1v1h-1zM915 633h1v1h-1zM915 640h1v1h-1zM915 648h1v1h-1zM921 218h1v1h-1zM921 225h1v1h-1zM921 232h1v1h-1zM921 240h1v1h-1zM921 247h1v1h-1zM921 254h1v1h-1zM921 261h1v1h-1zM921 268h1v1h-1zM921 276h1v1h-1zM921 283h1v1h-1zM921 290h1v1h-1zM921 297h1v1h-1zM921 304h1v1h-1zM921 311h1v1h-1zM921 319h1v1h-1zM921 326h1v1h-1zM921 333h1v1h-1zM921 340h1v1h-1zM921 347h1v1h-1zM921 355h1v1h-1zM921 362h1v1h-1zM921 369h1v1h-1zM921 376h1v1h-1zM921 383h1v1h-1zM921 390h1v1h-1zM921 398h1v1h-1zM921 405h1v1h-1zM921 412h1v1h-1zM921 419h1v1h-1zM921 426h1v1h-1zM921 434h1v1h-1zM921 441h1v1h-1zM921 448h1v1h-1zM921 455h1v1h-1zM921 462h1v1h-1zM921 470h1v1h-1zM921 477h1v1h-1zM921 484h1v1h-1zM921 491h1v1h-1zM921 498h1v1h-1zM921 505h1v1h-1zM921 513h1v1h-1zM921 520h1v1h-1zM921 527h1v1h-1zM921 534h1v1h-1zM921 541h1v1h-1zM921 549h1v1h-1zM921 556h1v1h-1zM921 563h1v1h-1zM921 570h1v1h-1zM921 577h1v1h-1zM921 584h1v1h-1zM921 592h1v1h-1zM921 599h1v1h-1zM921 606h1v1h-1zM921 613h1v1h-1zM921 620h1v1h-1zM921 628h1v1h-1zM921 635h1v1h-1zM921 642h1v1h-1zM921 649h1v1h-1zM927 220h1v1h-1zM927 227h1v1h-1zM927 234h1v1h-1zM927 241h1v1h-1zM927 248h1v1h-1zM927 256h1v1h-1zM927 263h1v1h-1zM927 270h1v1h-1zM927 277h1v1h-1zM927 284h1v1h-1zM927 292h1v1h-1zM927 299h1v1h-1zM927 306h1v1h-1zM927 313h1v1h-1zM927 320h1v1h-1zM927 327h1v1h-1zM927 335h1v1h-1zM927 342h1v1h-1zM927 349h1v1h-1zM927 356h1v1h-1zM927 363h1v1h-1zM927 371h1v1h-1zM927 378h1v1h-1zM927 385h1v1h-1zM927 392h1v1h-1zM927 399h1v1h-1zM927 406h1v1h-1zM927 414h1v1h-1zM927 421h1v1h-1zM927 428h1v1h-1zM927 435h1v1h-1zM927 442h1v1h-1zM927 450h1v1h-1zM927 457h1v1h-1zM927 464h1v1h-1zM927 471h1v1h-1zM927 478h1v1h-1zM927 485h1v1h-1zM927 493h1v1h-1zM927 500h1v1h-1zM927 507h1v1h-1zM927 514h1v1h-1zM927 521h1v1h-1zM927 529h1v1h-1zM927 536h1v1h-1zM927 543h1v1h-1zM927 550h1v1h-1zM927 557h1v1h-1zM927 564h1v1h-1zM927 572h1v1h-1zM927 579h1v1h-1zM927 586h1v1h-1zM927 593h1v1h-1zM927 600h1v1h-1zM927 608h1v1h-1zM927 615h1v1h-1zM927 622h1v1h-1zM927 629h1v1h-1zM927 636h1v1h-1zM927 644h1v1h-1zM927 651h1v1h-1zM933 221h1v1h-1zM933 228h1v1h-1zM933 236h1v1h-1zM933 243h1v1h-1zM933 250h1v1h-1zM933 257h1v1h-1zM933 264h1v1h-1zM933 272h1v1h-1zM933 279h1v1h-1zM933 286h1v1h-1zM933 293h1v1h-1zM933 300h1v1h-1zM933 308h1v1h-1zM933 315h1v1h-1zM933 322h1v1h-1zM933 329h1v1h-1zM933 336h1v1h-1zM933 343h1v1h-1zM933 351h1v1h-1zM933 358h1v1h-1zM933 365h1v1h-1zM933 372h1v1h-1zM933 379h1v1h-1zM933 387h1v1h-1zM933 394h1v1h-1zM933 401h1v1h-1zM933 408h1v1h-1zM933 415h1v1h-1zM933 422h1v1h-1zM933 430h1v1h-1zM933 437h1v1h-1zM933 444h1v1h-1zM933 451h1v1h-1zM933 458h1v1h-1zM933 466h1v1h-1zM933 473h1v1h-1zM933 480h1v1h-1zM933 487h1v1h-1zM933 494h1v1h-1zM933 501h1v1h-1zM933 509h1v1h-1zM933 516h1v1h-1zM933 523h1v1h-1zM933 530h1v1h-1zM933 537h1v1h-1zM933 545h1v1h-1zM933 552h1v1h-1zM933 559h1v1h-1zM933 566h1v1h-1zM933 573h1v1h-1zM933 580h1v1h-1zM933 588h1v1h-1zM933 595h1v1h-1zM933 602h1v1h-1zM933 609h1v1h-1zM933 616h1v1h-1zM933 624h1v1h-1zM933 631h1v1h-1zM933 638h1v1h-1zM933 645h1v1h-1zM933 652h1v1h-1z" fill="#000"/></svg>
<svg style="left:1080px;top:120px" width="110" height="110" shape-rendering="auto">
<g transform="translate(-1080,-120)" stroke="#111" stroke-linejoin="round">
<polygon points="1127.2,125 1180.5,138.6 1137,155.9 1083.4,143.1" fill="#bdbdbd" stroke-width="1"/>
<polygon points="1083.4,143.1 1137,155.9 1137,221 1083.4,206.4" fill="#d6d6d6" stroke-width="1"/>
<polygon points="1137,155.9 1180.5,138.6 1180.5,203.2 1137,221" fill="#d2d2d2" stroke-width="1"/>
</g>
<g transform="translate(-1080,-120)" stroke="#111" fill="none" stroke-width="1.7">
<path d="M1096.8 146.3 V209.9 M1123.6 152.7 V217.3 M1147.8 151.6 V216.6 M1169.6 142.9 V207.7"/>
<path d="M1083.4 159.6 L1137 172.4 L1180.5 155.2 M1083.4 190 L1137 203.5 L1180.5 186.5"/>
<path d="M1096.8 146.3 L1140.9 127.8 M1123.6 152.7 L1167.7 134.2 M1094.4 138.5 L1148 151.3 M1116.5 129.2 L1170.1 142" stroke-width="1.5"/>
</g>
<g transform="translate(-1080,-120)">
<g transform="translate(1104,188) skewY(13)"><text x="0" y="0" font-family="Liberation Sans" font-weight="bold" font-size="12" fill="#66e066">-Y</text></g>
<g transform="translate(1152,188) skewY(-20)"><text x="0" y="0" font-family="Liberation Sans" font-weight="bold" font-size="12" fill="#f07474">-X</text></g>
<path d="M1123 141 L1129 142.5 M1127 144 L1134 145.5 M1131 140 L1140 142" stroke="#7a7af0" stroke-width="1.4"/>
</g>
</svg>
<div class="a" style="left:299px;top:661px;width:901px;height:216px;background:#f7f7f7"></div>
<div class="a" style="left:299px;top:665px;width:901px;height:21px;background:#d9e5f2"></div>
<div class="t" style="left:305px;top:669px;font-size:12px;line-height:14px;font-weight:bold;color:#333;-webkit-text-stroke:0">Materials</div>
<svg style="left:1163px;top:671px" width="9" height="9"><path d="M3 0.5 H8.5 V6 H6.5" fill="none" stroke="#222" stroke-width="1"/><rect x="3" y="0" width="5.5" height="1.6" fill="#222"/><rect x="0.5" y="3.3" width="5.5" height="5.2" fill="#d9e5f2" stroke="#222" stroke-width="1"/><rect x="0" y="3" width="6.5" height="1.6" fill="#222"/></svg>
<svg style="left:1184px;top:672px" width="8" height="8"><path d="M0.8 0.8 L7.2 7.2 M7.2 0.8 L0.8 7.2" stroke="#333" stroke-width="1.9"/></svg>
<div class="t" style="left:307px;top:691px">Go To</div>
<div class="t" style="left:353px;top:691px">Edit</div>
<div class="t" style="left:389px;top:691px">Selection</div>
<div class="t" style="left:452px;top:691px">View</div>
<div class="t" style="left:493px;top:691px">Settings</div>
<div class="a" style="left:299px;top:706px;width:901px;height:1px;background:#e6e6e6"></div>
<div class="a" style="left:301px;top:709px;width:126px;height:21px;background:#e8e8f2"></div>
<svg style="left:306px;top:712px" width="15" height="14"><rect x="0.5" y="0.5" width="14" height="13" fill="#ddd" stroke="#555"/><rect x="1" y="1" width="13" height="2" fill="#3b5bd0"/><path d="M3 12 L13 4 V12 Z" fill="#8fea8f" stroke="#4a4" stroke-width="0.8"/><path d="M2 5 H8 M2 8 H6" stroke="#999"/></svg>
<div class="t" style="left:325px;top:714px">Structure</div>
<svg style="left:414px;top:717px" width="10" height="6"><path d="M0.7 0.7 L4.5 4.5 L8.3 0.7" fill="none" stroke="#555" stroke-width="1.2"/></svg>
<div class="a" style="left:428px;top:709px;width:15px;height:21px;background:#d2d2d2"></div>
<svg style="left:433px;top:715px" width="6" height="9"><path d="M5 0.5 V8.5 L0.5 4.5 Z" fill="#555"/></svg>
<div class="a" style="left:444px;top:709px;width:15px;height:21px;background:#e8e8f2"></div>
<svg style="left:450px;top:715px" width="6" height="9"><path d="M0.5 0.5 V8.5 L5 4.5 Z" fill="#111"/></svg>
<div class="a" style="left:462px;top:711px;width:1px;height:17px;background:#d0d0d0"></div>
<div class="a" style="left:469px;top:709px;width:125px;height:21px;background:#e8e8f2"></div>
<svg style="left:474px;top:711px" width="16" height="15"><path d="M1.5 13.5 L13.5 1.5" stroke="#8faad8" stroke-width="3"/><path d="M1.5 13.5 L13.5 1.5" stroke="#c7dbf5" stroke-width="1.3"/><circle cx="1.6" cy="13.4" r="1.5" fill="#e02020"/><circle cx="13.4" cy="1.6" r="1.5" fill="#e02020"/><path d="M10 9.5 H15 M12.5 9.5 V14.5 M10 14.5 H15" stroke="#444" stroke-width="1.1"/></svg>
<div class="t" style="left:494px;top:714px">Basic Objects</div>
<svg style="left:581px;top:717px" width="10" height="6"><path d="M0.7 0.7 L4.5 4.5 L8.3 0.7" fill="none" stroke="#555" stroke-width="1.2"/></svg>
<div class="a" style="left:595px;top:709px;width:15px;height:21px;background:#d2d2d2"></div>
<svg style="left:600px;top:715px" width="6" height="9"><path d="M5 0.5 V8.5 L0.5 4.5 Z" fill="#555"/></svg>
<div class="a" style="left:611px;top:709px;width:15px;height:21px;background:#e8e8f2"></div>
<svg style="left:617px;top:715px" width="6" height="9"><path d="M0.5 0.5 V8.5 L5 4.5 Z" fill="#111"/></svg>
<div class="a" style="left:629px;top:711px;width:1px;height:17px;background:#d0d0d0"></div>
<div class="a" style="left:634px;top:708px;width:25px;height:22px;background:#cce4f7;border:1px solid #99c9ef;border-radius:3px"></div>
<div class="a" style="left:660px;top:708px;width:25px;height:22px;background:#cce4f7;border:1px solid #99c9ef;border-radius:3px"></div>
<svg style="left:639px;top:711px" width="16" height="16"><rect x="1.5" y="0.5" width="8" height="5" fill="#ddd" stroke="#555"/><path d="M7 4 Q12 5 11 14" stroke="#3a70c0" stroke-width="1.6" fill="none"/><path d="M8 6 L11 3 L13 6" stroke="#3a70c0" stroke-width="1.4" fill="none"/></svg>
<svg style="left:665px;top:711px" width="16" height="16"><rect x="6.5" y="0.5" width="8" height="5" fill="#ddd" stroke="#555"/><path d="M8 4 Q3 6 5 14" stroke="#3a70c0" stroke-width="1.6" fill="none"/><path d="M2 11 L5 14.5 L8 11" stroke="#3a70c0" stroke-width="1.4" fill="none"/></svg>
<div class="a" style="left:688px;top:711px;width:1px;height:17px;background:#d0d0d0"></div>
<svg style="left:696px;top:711px" width="19" height="17"><rect x="0.5" y="1.5" width="17" height="14" fill="#ddd" stroke="#777"/><path d="M1 5.5 H17 M1 8.5 H17 M1 11.5 H17 M9 2 V15" stroke="#999"/></svg>
<svg style="left:722px;top:711px" width="19" height="17"><rect x="0.5" y="6.5" width="17" height="9" fill="#f4f4f4" stroke="#888"/><path d="M1 10.5 H17 M6.5 7 V15 M12.5 7 V15" stroke="#aaa"/><path d="M3 2 L14 4" stroke="#999"/><circle cx="3" cy="2" r="1.5" fill="#aaa"/><circle cx="14" cy="4" r="1.5" fill="#aaa"/></svg>
<svg style="left:748px;top:711px" width="19" height="17"><rect x="0.5" y="1.5" width="17" height="14" fill="#e6e6e6" stroke="#888"/><path d="M1 5.5 H17 M1 9.5 H17 M1 12.5 H17 M6.5 2 V15 M12.5 2 V15" stroke="#aaa"/><path d="M9 4 V14 M4 9 H14" stroke="#aaa" stroke-width="3"/></svg>
<svg style="left:774px;top:711px" width="19" height="17"><rect x="0.5" y="1.5" width="17" height="14" fill="#e6e6e6" stroke="#888"/><path d="M1 5.5 H17 M1 9.5 H17 M1 12.5 H17 M6.5 2 V15 M12.5 2 V15" stroke="#aaa"/><path d="M5 5 L13 13 M13 5 L5 13" stroke="#aaa" stroke-width="3"/></svg>
<svg style="left:800px;top:711px" width="19" height="17"><rect x="0.5" y="1.5" width="17" height="14" fill="#e6e6e6" stroke="#888"/><path d="M1 5.5 H17 M1 9.5 H17 M1 12.5 H17 M6.5 2 V15 M12.5 2 V15" stroke="#aaa"/><circle cx="9" cy="5.5" r="2.2" fill="#aaa"/><circle cx="9" cy="11.5" r="2.2" fill="#aaa"/></svg>
<div class="a" style="left:826px;top:711px;width:1px;height:17px;background:#d0d0d0"></div>
<svg style="left:833px;top:711px" width="19" height="17"><rect x="0.5" y="1.5" width="17" height="14" fill="#ddd" stroke="#777"/><path d="M3 3.5 L15 13.5 M15 3.5 L3 13.5" stroke="#666" stroke-width="2.8"/></svg>
<div class="a" style="left:858px;top:711px;width:1px;height:17px;background:#d0d0d0"></div>
<svg style="left:866px;top:711px" width="19" height="17"><path d="M1 1.5 H7 V6 M1 15.5 H7" stroke="#bbb" fill="none"/><rect x="1" y="6" width="7" height="5" fill="#999"/><path d="M9 8 Q15 8 15 11.5 Q15 15 10 14" stroke="#888" stroke-width="1.4" fill="none"/></svg>
<svg style="left:892px;top:711px" width="19" height="17"><path d="M1 1.5 H7 V6 M1 15.5 H7" stroke="#bbb" fill="none"/><rect x="1" y="6" width="8" height="5" fill="#999"/><path d="M11 5 L17 12 M17 5 L11 12" stroke="#888" stroke-width="1.5"/></svg>
<svg style="left:918px;top:711px" width="19" height="17"><path d="M4 1.5 H9 V15.5 H4" stroke="#bbb" fill="none"/><path d="M6 7 H17 M6 10 H17" stroke="#8c8" stroke-width="1.2"/><path d="M2 8.5 H12" stroke="#118a11" stroke-width="2"/><path d="M1 8.5 L6 5 V12 Z" fill="#118a11"/></svg>
<svg style="left:944px;top:711px" width="19" height="17"><path d="M1 1.5 H6 V15.5 H1" stroke="#bbb" fill="none"/><path d="M1 7 H12 M1 10 H12" stroke="#f99" stroke-width="1.2"/><path d="M6 8.5 H14" stroke="#e01010" stroke-width="2"/><path d="M18 8.5 L13 5 V12 Z" fill="#e01010"/></svg>
<div class="a" style="left:970px;top:711px;width:1px;height:17px;background:#d0d0d0"></div>
<svg style="left:977px;top:711px" width="19" height="17"><rect x="0.5" y="1.5" width="17" height="14" fill="#fff" stroke="#555"/><rect x="1" y="2" width="16" height="6" fill="#c8cdf0"/><path d="M1 5 H17 M6.5 2 V8 M12.5 2 V8" stroke="#99a"/></svg>
<div class="a" style="left:1002px;top:711px;width:1px;height:17px;background:#d0d0d0"></div>
<svg style="left:1010px;top:711px" width="19" height="17"><rect x="8.5" y="0.5" width="9" height="7" fill="#fff" stroke="#444"/><rect x="9" y="1" width="8" height="2" fill="#3a5bd0"/><text x="0" y="15" font-family="Liberation Serif" font-style="italic" font-weight="bold" font-size="9" fill="#222">ab</text><path d="M12 11.5 H17 M12 14 H17" stroke="#555"/></svg>
<svg style="left:1036px;top:711px" width="19" height="17"><text x="1" y="14" font-family="Liberation Serif" font-style="italic" font-size="15" fill="#999">fx</text></svg>
<svg style="left:1062px;top:711px" width="19" height="17"><text x="1" y="15" font-family="Liberation Serif" font-style="italic" font-size="15" fill="#999">fx</text><path d="M10 1 L17 8 M17 1 L10 8" stroke="#999" stroke-width="2"/></svg>
<svg style="left:1088px;top:711px" width="19" height="17"><text x="1" y="15" font-family="Liberation Serif" font-style="italic" font-weight="bold" font-size="15" fill="#111">fx</text><path d="M9 4 Q13 -1 17 4 Q13 8 9 4 Z" fill="#fff" stroke="#2a2f70"/><circle cx="13" cy="4" r="1.7" fill="#2a3aa0"/></svg>
<div class="a" style="left:1114px;top:711px;width:1px;height:17px;background:#d0d0d0"></div>
<svg style="left:1120px;top:711px" width="19" height="17"><path d="M5.5 0.5 H15 L18.5 4 V16.5 H5.5 Z" fill="#fff" stroke="#666"/><rect x="8" y="5" width="8" height="6" fill="#fff" stroke="#2a9a2a" stroke-width="0.8"/><path d="M8 7 H16 M8 9 H16 M11 5 V11 M13.5 5 V11" stroke="#2a9a2a" stroke-width="0.6"/><rect x="0" y="3" width="8" height="8" fill="#1f8a3a"/><text x="1.2" y="10" font-family="Liberation Sans" font-weight="bold" font-size="7.5" fill="#fff">X</text><path d="M9 12.5 L12 15 L15 12.5 Z" fill="#2a9a2a"/></svg>
<div class="t" style="left:1148px;top:712px;font-size:12px;color:#333">&#187;</div>
<div class="a" style="left:1157px;top:709px;width:1px;height:21px;background:#e0e0e0"></div>
<svg style="left:1162px;top:711px" width="20" height="18"><rect x="0.5" y="0.5" width="18" height="4" fill="#6ec06e"/><path d="M3 1 V4 M6 1 V4 M9 1 V4 M12 1 V4 M15 1 V4" stroke="#4a9a4a" stroke-width="0.5"/><text x="0" y="14" font-family="Liberation Sans" font-size="10.5" fill="#111">0.</text><text x="9" y="14" font-family="Liberation Sans" font-size="10.5" fill="#2a3a9a">00</text><path d="M9 16 H19" stroke="#2a3a9a" stroke-width="1"/></svg>
<div class="t" style="left:1192px;top:712px;font-size:12px;color:#333">&#187;</div>
<div class="a" style="left:299px;top:734px;width:901px;height:121px;background:#efefef;border:1px solid #c8c8d6;border-bottom-color:#c8c8d6"></div>
<div class="a" style="left:300px;top:735px;width:60px;height:9px;background:#e2e2e2"></div>
<div class="a" style="left:361px;top:735px;width:248px;height:9px;background:#c6c6c6"></div>
<div class="a" style="left:610px;top:735px;width:572px;height:9px;background:#e2e2e2"></div>
<div class="a" style="left:749px;top:735px;width:1px;height:9px;background:#f4f4f4"></div>
<div class="a" style="left:949px;top:735px;width:1px;height:9px;background:#f4f4f4"></div>
<div class="a" style="left:1049px;top:735px;width:1px;height:9px;background:#f4f4f4"></div>
<div class="a" style="left:1149px;top:735px;width:1px;height:9px;background:#f4f4f4"></div>
<div class="a" style="left:300px;top:745px;width:60px;height:31px;background:#e2e2e2"></div>
<div class="a" style="left:361px;top:745px;width:821px;height:31px;background:#f0f0f0"></div>
<div class="a" style="left:609px;top:745px;width:1px;height:94px;background:#d8d8d8"></div>
<div class="a" style="left:749px;top:745px;width:1px;height:94px;background:#d8d8d8"></div>
<div class="a" style="left:949px;top:745px;width:1px;height:94px;background:#d8d8d8"></div>
<div class="a" style="left:1049px;top:745px;width:1px;height:94px;background:#d8d8d8"></div>
<div class="a" style="left:1149px;top:745px;width:1px;height:94px;background:#d8d8d8"></div>
<div class="a" style="left:361px;top:776px;width:821px;height:1px;background:#d0d0d0"></div>
<div class="t" style="left:300px;top:749px;width:60px;text-align:center;letter-spacing:0.5px">Material</div>
<div class="t" style="left:300px;top:762px;width:60px;text-align:center;letter-spacing:0.5px">No.</div>
<div class="t" style="left:360px;top:762px;width:250px;text-align:center;letter-spacing:0.23px">Material Name</div>
<div class="t" style="left:610px;top:749px;width:140px;text-align:center;letter-spacing:0.5px">Material</div>
<div class="t" style="left:610px;top:762px;width:140px;text-align:center;letter-spacing:0.5px">Type</div>
<div class="t" style="left:750px;top:762px;width:200px;text-align:center;letter-spacing:0.58px">Material Model</div>
<div class="t" style="left:950px;top:746px;width:100px;text-align:center;letter-spacing:0.5px">Modulus of Elast.</div>
<div class="t" style="left:950px;top:762px;width:100px;text-align:center;letter-spacing:0.5px">E [N/mm<sup style="font-size:8px;line-height:0">2</sup>]</div>
<div class="t" style="left:1050px;top:746px;width:100px;text-align:center;letter-spacing:0.5px">Shear Modulus</div>
<div class="t" style="left:1050px;top:762px;width:100px;text-align:center;letter-spacing:0.5px">G [N/mm<sup style="font-size:8px;line-height:0">2</sup>]</div>
<div class="t" style="left:1161px;top:746px">Pois</div>
<div class="a" style="left:300px;top:777px;width:60px;height:15px;background:#e2e2e2"></div>
<div class="t" style="left:300px;top:779px;width:60px;text-align:center">1</div>
<div class="a" style="left:361px;top:777px;width:821px;height:15px;background:#fff"></div>
<div class="a" style="left:1150px;top:777px;width:32px;height:15px;background:#f7f7f2"></div>
<div class="a" style="left:950px;top:777px;width:99px;height:15px;background:#f7f7f2"></div>
<div class="a" style="left:1050px;top:777px;width:99px;height:15px;background:#f7f7f2"></div>
<div class="a" style="left:300px;top:792px;width:882px;height:1px;background:#fff"></div>
<div class="a" style="left:361px;top:792px;width:821px;height:1px;background:#dcdcdc"></div>
<div class="a" style="left:300px;top:793px;width:60px;height:15px;background:#e2e2e2"></div>
<div class="t" style="left:300px;top:795px;width:60px;text-align:center">2</div>
<div class="a" style="left:361px;top:793px;width:821px;height:15px;background:#fff"></div>
<div class="a" style="left:1150px;top:793px;width:32px;height:15px;background:#f7f7f2"></div>
<div class="a" style="left:950px;top:793px;width:99px;height:15px;background:#f7f7f2"></div>
<div class="a" style="left:1050px;top:793px;width:99px;height:15px;background:#f7f7f2"></div>
<div class="a" style="left:300px;top:808px;width:882px;height:1px;background:#fff"></div>
<div class="a" style="left:361px;top:808px;width:821px;height:1px;background:#dcdcdc"></div>
<div class="a" style="left:300px;top:809px;width:60px;height:15px;background:#e2e2e2"></div>
<div class="t" style="left:300px;top:811px;width:60px;text-align:center">3</div>
<div class="a" style="left:361px;top:809px;width:821px;height:15px;background:#fff"></div>
<div class="a" style="left:1150px;top:809px;width:32px;height:15px;background:#f7f7f2"></div>
<div class="a" style="left:300px;top:824px;width:882px;height:1px;background:#fff"></div>
<div class="a" style="left:361px;top:824px;width:821px;height:1px;background:#dcdcdc"></div>
<div class="a" style="left:300px;top:825px;width:60px;height:13px;background:#e2e2e2"></div>
<div class="t" style="left:300px;top:827px;width:60px;text-align:center">4</div>
<div class="a" style="left:361px;top:825px;width:821px;height:13px;background:#fff"></div>
<div class="a" style="left:1150px;top:825px;width:32px;height:13px;background:#f7f7f2"></div>
<div class="a" style="left:609px;top:777px;width:1px;height:61px;background:#dcdcdc"></div>
<div class="a" style="left:749px;top:777px;width:1px;height:61px;background:#dcdcdc"></div>
<div class="a" style="left:949px;top:777px;width:1px;height:61px;background:#dcdcdc"></div>
<div class="a" style="left:1049px;top:777px;width:1px;height:61px;background:#dcdcdc"></div>
<div class="a" style="left:1149px;top:777px;width:1px;height:61px;background:#dcdcdc"></div>
<div class="a" style="left:364px;top:779px;width:11px;height:11px;background:#ffa200"></div>
<div class="t" style="left:380px;top:779px;color:#000">S235</div>
<div class="a" style="left:614px;top:779px;width:11px;height:11px;background:#e47334"></div>
<div class="t" style="left:630px;top:779px;color:#000">Steel</div>
<div class="a" style="left:754px;top:779px;width:11px;height:11px;background:#cff7fa"></div>
<div class="t" style="left:770px;top:779px;color:#000;letter-spacing:0.24px">Isotropic | Linear Elastic</div>
<div class="t" style="left:950px;top:779px;width:96px;text-align:right;color:#000">210000.0</div>
<div class="t" style="left:1050px;top:779px;width:96px;text-align:right;color:#000">80769.2</div>
<div class="a" style="left:364px;top:795px;width:11px;height:11px;background:#f6c500"></div>
<div class="t" style="left:380px;top:795px;color:#168cff">C30/37</div>
<div class="a" style="left:614px;top:795px;width:11px;height:11px;background:#f6c500"></div>
<div class="t" style="left:630px;top:795px;color:#168cff">Concrete</div>
<div class="a" style="left:754px;top:795px;width:11px;height:11px;background:#cff7fa"></div>
<div class="t" style="left:770px;top:795px;color:#168cff;letter-spacing:0.24px">Isotropic | Linear Elastic</div>
<div class="t" style="left:950px;top:795px;width:96px;text-align:right;color:#168cff">33000.0</div>
<div class="t" style="left:1050px;top:795px;width:96px;text-align:right;color:#168cff">13750.0</div>
<div class="a" style="left:317px;top:846px;width:616px;height:2px;background:#808080"></div>
<div class="a" style="left:1182px;top:735px;width:17px;height:119px;background:#efefef"></div>
<div class="a" style="left:1190px;top:752px;width:2px;height:18px;background:#808080"></div>
<div class="a" style="left:299px;top:855px;width:901px;height:22px;background:#f5f5f5"></div>
<svg style="left:304px;top:862px" width="8" height="9"><path d="M0.5 0 V9" stroke="#999" stroke-width="1.5"/><path d="M7.5 0.5 V8.5 L2 4.5 Z" fill="#999"/></svg>
<svg style="left:322px;top:862px" width="6" height="9"><path d="M5 0.5 V8.5 L0.5 4.5 Z" fill="#999"/></svg>
<div class="t" style="left:347px;top:861px">1 of 5</div>
<svg style="left:396px;top:862px" width="6" height="9"><path d="M0.5 0.5 V8.5 L5 4.5 Z" fill="#555"/></svg>
<svg style="left:412px;top:862px" width="8" height="9"><path d="M0.5 0.5 V8.5 L6 4.5 Z" fill="#555"/><path d="M7 0 V9" stroke="#555" stroke-width="1.5"/></svg>
<div class="a" style="left:425px;top:854px;width:64px;height:23px;background:#fff;border:1px solid #c8c8d6;border-top:none"></div>
<div class="t" style="left:425px;top:861px;width:64px;text-align:center">Materials</div>
<div class="a" style="left:489px;top:855px;width:61px;height:21px;background:#ececec;border:1px solid #c8c8d6;border-top:none"></div>
<div class="t" style="left:489px;top:860px;width:60px;text-align:center">Sections</div>
<div class="a" style="left:549px;top:855px;width:62px;height:21px;background:#ececec;border:1px solid #c8c8d6;border-top:none"></div>
<div class="t" style="left:549px;top:860px;width:61px;text-align:center">Nodes</div>
<div class="a" style="left:610px;top:855px;width:64px;height:21px;background:#ececec;border:1px solid #c8c8d6;border-top:none"></div>
<div class="t" style="left:610px;top:860px;width:63px;text-align:center">Members</div>
<div class="a" style="left:673px;top:855px;width:84px;height:21px;background:#ececec;border:1px solid #c8c8d6;border-top:none"></div>
<div class="t" style="left:673px;top:860px;width:83px;text-align:center">Member Sets</div>
<div class="a" style="left:1199px;top:734px;width:1px;height:143px;background:#c8c8d6"></div>
<div class="a" style="left:0;top:878px;width:1200px;height:22px;background:#f5f5f5"></div>
<div class="a" style="left:377px;top:881px;width:35px;height:19px;background:#e9e9e9;border-left:1px solid #d2d2d2;border-top:1px solid #d2d2d2"></div>
<div class="a" style="left:414px;top:881px;width:34px;height:19px;background:#e9e9e9;border-left:1px solid #d2d2d2;border-top:1px solid #d2d2d2"></div>
<div class="a" style="left:491px;top:881px;width:45px;height:19px;background:#e9e9e9;border-left:1px solid #d2d2d2;border-top:1px solid #d2d2d2"></div>
<div class="t" style="left:381px;top:885px">SNAP</div>
<div class="t" style="left:418px;top:885px">GRID</div>
<div class="t" style="left:453px;top:885px">LGRID</div>
<div class="t" style="left:495px;top:885px">OSNAP</div>
<div class="a" style="left:625px;top:880px;width:1px;height:20px;background:#d6d6d6"></div>
<div class="a" style="left:732px;top:880px;width:1px;height:20px;background:#d6d6d6"></div>
<div class="t" style="left:736px;top:885px">CS: Global XYZ</div>
<div class="a" style="left:887px;top:880px;width:1px;height:20px;background:#d6d6d6"></div>
<div class="t" style="left:892px;top:885px">Plane: XZ</div>
<div class="a" style="left:953px;top:880px;width:1px;height:20px;background:#d6d6d6"></div>
<div class="a" style="left:1029px;top:880px;width:1px;height:20px;background:#d6d6d6"></div>
<div class="a" style="left:1106px;top:880px;width:1px;height:20px;background:#d6d6d6"></div>
<div class="a" style="left:1181px;top:880px;width:1px;height:20px;background:#d6d6d6"></div>
<svg style="left:1188px;top:889px" width="10" height="10"><g fill="#aaa"><rect x="7" y="1" width="1" height="1"/><rect x="5" y="3" width="1" height="1"/><rect x="7" y="3" width="1" height="1"/><rect x="3" y="5" width="1" height="1"/><rect x="5" y="5" width="1" height="1"/><rect x="7" y="5" width="1" height="1"/><rect x="1" y="7" width="1" height="1"/><rect x="3" y="7" width="1" height="1"/><rect x="5" y="7" width="1" height="1"/><rect x="7" y="7" width="1" height="1"/></g></svg>
<svg style="left:1192px;top:0" width="8" height="8"><path d="M3 0.5 Q7.5 0.5 7.5 5" stroke="#aaa" stroke-width="1.2" fill="none"/><path d="M4 0 H8 V4 Q8 0 4 0 Z" fill="#e0e0e0"/></svg>
<svg style="left:0;top:0" width="4" height="4"><path d="M0.5 3 Q0.5 0.5 3 0.5" stroke="#bbb" stroke-width="1" fill="none"/></svg>
<svg style="left:0;top:896px" width="4" height="4"><path d="M0.5 0 Q0.5 3.5 3 3.5" stroke="#aaa" stroke-width="1.2" fill="none"/></svg>

<div class="t" style="left:649px;top:-1px;font-size:26px;line-height:30px;font-weight:bold;color:#2b57fa;transform:scaleX(0.835);transform-origin:0 0">Menu</div>
<div class="t" style="left:850px;top:1px;font-size:26px;line-height:30px;font-weight:bold;color:#2b57fa;transform:scaleX(0.82);transform-origin:0 0">Toolbar</div>
<div class="t" style="left:415px;top:144px;font-size:26px;line-height:30px;font-weight:bold;color:#2b57fa;transform:scaleX(0.81);transform-origin:0 0">Workspace</div>
<div class="t" style="left:170px;top:259px;font-size:26px;line-height:30px;font-weight:bold;color:#2b57fa;transform:scaleX(0.865);transform-origin:0 0">Navigator</div>
<div class="t" style="left:722px;top:811px;font-size:26px;line-height:30px;font-weight:bold;color:#2b57fa;transform:scaleX(0.815);transform-origin:0 0">Table</div>
<svg style="left:0;top:0" width="1200" height="100">
<path d="M644 23.5 L607 35.5" stroke="#2b57fa" stroke-width="4"/>
<path d="M599 37.5 L610 26.5 L614.5 40.5 Z" fill="#2b57fa"/>
<path d="M903 28 L916 63" stroke="#2b57fa" stroke-width="5"/>
<path d="M922.5 75.5 L909.5 65 L924 59.5 Z" fill="#2b57fa"/>
</svg>

</body></html>
